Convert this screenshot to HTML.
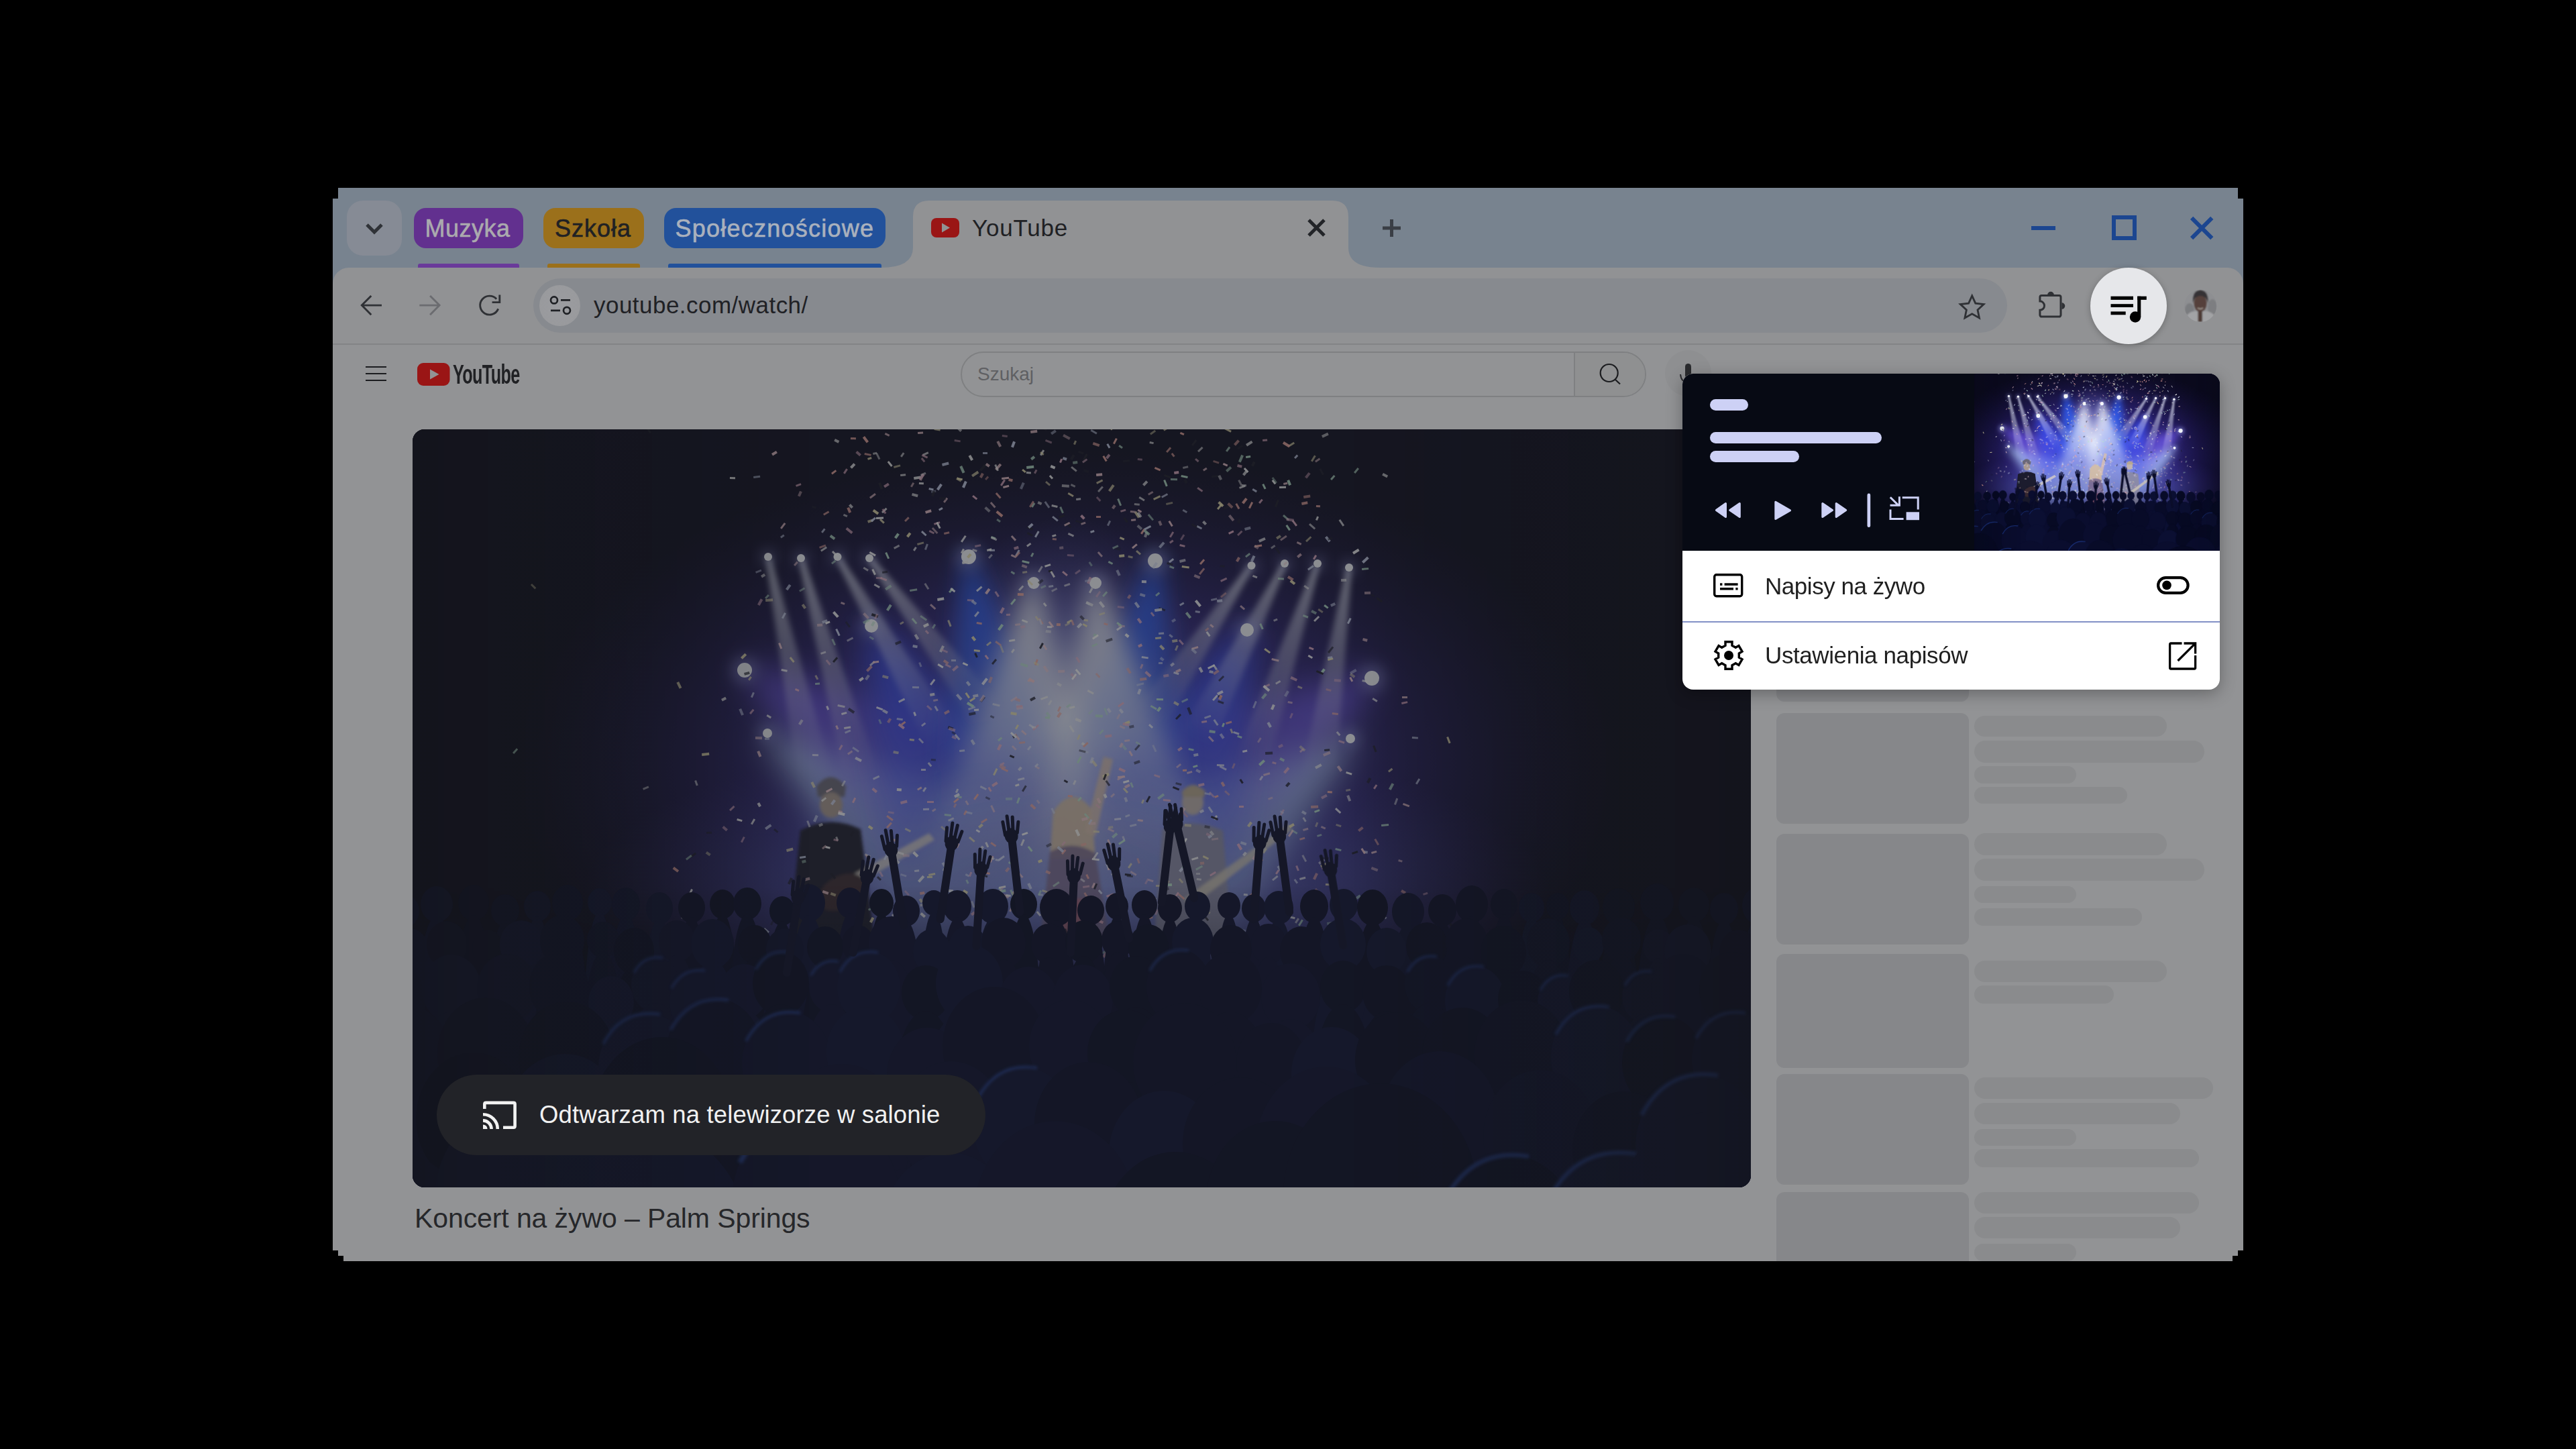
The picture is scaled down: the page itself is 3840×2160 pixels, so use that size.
<!DOCTYPE html>
<html><head><meta charset="utf-8">
<style>
*{margin:0;padding:0;box-sizing:border-box}
html,body{width:3840px;height:2160px;overflow:hidden;background:#000}
body{position:relative;font-family:"Liberation Sans",sans-serif}
.a{position:absolute}
#win{position:absolute;left:0;top:0;width:3840px;height:2160px;
 clip-path:polygon(504px 280px,3336px 280px,3336px 296px,3344px 296px,3344px 1864px,3336px 1864px,3336px 1872px,3328px 1872px,3328px 1880px,512px 1880px,512px 1872px,504px 1872px,504px 1864px,496px 1864px,496px 296px,504px 296px);}
#strip{left:496px;top:280px;width:2848px;height:160px;background:#78838f}
#toolbar{left:496px;top:399px;width:2848px;height:115px;background:#919294;border-radius:24px 24px 0 0}
#page{left:496px;top:513px;width:2848px;height:1367px;background:#929395}
.chip{position:absolute;top:310px;height:60px;border-radius:18px;font-size:36px;line-height:62px;white-space:nowrap;-webkit-text-stroke:0.6px currentColor}
.ul{position:absolute;top:393px;height:6px;border-radius:3px 3px 0 0}
.ic{position:absolute;overflow:visible}
</style></head><body>
<!--PHOTO_START--><svg width="0" height="0" style="position:absolute"><defs><filter id="f2" x="-60%" y="-60%" width="220%" height="220%"><feGaussianBlur stdDeviation="2"/></filter><filter id="f4" x="-60%" y="-60%" width="220%" height="220%"><feGaussianBlur stdDeviation="4"/></filter><filter id="f10" x="-60%" y="-60%" width="220%" height="220%"><feGaussianBlur stdDeviation="10"/></filter><filter id="f18" x="-60%" y="-60%" width="220%" height="220%"><feGaussianBlur stdDeviation="18"/></filter><filter id="f25" x="-60%" y="-60%" width="220%" height="220%"><feGaussianBlur stdDeviation="25"/></filter><filter id="f30" x="-60%" y="-60%" width="220%" height="220%"><feGaussianBlur stdDeviation="30"/></filter><filter id="f60" x="-60%" y="-60%" width="220%" height="220%"><feGaussianBlur stdDeviation="60"/></filter><radialGradient id="hz" cx="0.5" cy="0.5" r="0.5"><stop offset="0" stop-color="#5f64e0" stop-opacity="0.9"/><stop offset="0.5" stop-color="#4636b8" stop-opacity="0.55"/><stop offset="1" stop-color="#24186a" stop-opacity="0"/></radialGradient><radialGradient id="hz2" cx="0.5" cy="0.5" r="0.5"><stop offset="0" stop-color="#eef2ff" stop-opacity="0.8"/><stop offset="0.45" stop-color="#a0acf0" stop-opacity="0.4"/><stop offset="1" stop-color="#6a6ad0" stop-opacity="0"/></radialGradient><radialGradient id="hz3" cx="0.5" cy="0.5" r="0.5"><stop offset="0" stop-color="#98b0f0" stop-opacity="0.75"/><stop offset="0.6" stop-color="#5a60c8" stop-opacity="0.4"/><stop offset="1" stop-color="#3a3090" stop-opacity="0"/></radialGradient><linearGradient id="g1" gradientUnits="userSpaceOnUse" x1="529" y1="453" x2="900" y2="720"><stop offset="0" stop-color="#b8d8ff" stop-opacity="0.95"/><stop offset="0.55" stop-color="#b8d8ff" stop-opacity="0.47"/><stop offset="1" stop-color="#b8d8ff" stop-opacity="0"/></linearGradient><linearGradient id="g2" gradientUnits="userSpaceOnUse" x1="1398" y1="461" x2="1050" y2="720"><stop offset="0" stop-color="#b8d8ff" stop-opacity="0.95"/><stop offset="0.55" stop-color="#b8d8ff" stop-opacity="0.47"/><stop offset="1" stop-color="#b8d8ff" stop-opacity="0"/></linearGradient><linearGradient id="g3" gradientUnits="userSpaceOnUse" x1="495" y1="359" x2="820" y2="560"><stop offset="0" stop-color="#7a60ff" stop-opacity="0.9"/><stop offset="0.55" stop-color="#7a60ff" stop-opacity="0.45"/><stop offset="1" stop-color="#7a60ff" stop-opacity="0"/></linearGradient><linearGradient id="g4" gradientUnits="userSpaceOnUse" x1="1430" y1="371" x2="1130" y2="560"><stop offset="0" stop-color="#7a60ff" stop-opacity="0.9"/><stop offset="0.55" stop-color="#7a60ff" stop-opacity="0.45"/><stop offset="1" stop-color="#7a60ff" stop-opacity="0"/></linearGradient><linearGradient id="g5" gradientUnits="userSpaceOnUse" x1="684" y1="293" x2="850" y2="640"><stop offset="0" stop-color="#3a50ff" stop-opacity="1.0"/><stop offset="0.55" stop-color="#3a50ff" stop-opacity="0.50"/><stop offset="1" stop-color="#3a50ff" stop-opacity="0"/></linearGradient><linearGradient id="g6" gradientUnits="userSpaceOnUse" x1="1244" y1="299" x2="1090" y2="640"><stop offset="0" stop-color="#3a50ff" stop-opacity="1.0"/><stop offset="0.55" stop-color="#3a50ff" stop-opacity="0.50"/><stop offset="1" stop-color="#3a50ff" stop-opacity="0"/></linearGradient><linearGradient id="g7" gradientUnits="userSpaceOnUse" x1="829" y1="190" x2="890" y2="580"><stop offset="0" stop-color="#2a60ff" stop-opacity="1.0"/><stop offset="0.55" stop-color="#2a60ff" stop-opacity="0.50"/><stop offset="1" stop-color="#2a60ff" stop-opacity="0"/></linearGradient><linearGradient id="g8" gradientUnits="userSpaceOnUse" x1="1107" y1="196" x2="1050" y2="580"><stop offset="0" stop-color="#2a60ff" stop-opacity="1.0"/><stop offset="0.55" stop-color="#2a60ff" stop-opacity="0.50"/><stop offset="1" stop-color="#2a60ff" stop-opacity="0"/></linearGradient><linearGradient id="g9" gradientUnits="userSpaceOnUse" x1="926" y1="229" x2="900" y2="680"><stop offset="0" stop-color="#f0f4ff" stop-opacity="0.95"/><stop offset="0.55" stop-color="#f0f4ff" stop-opacity="0.47"/><stop offset="1" stop-color="#f0f4ff" stop-opacity="0"/></linearGradient><linearGradient id="g10" gradientUnits="userSpaceOnUse" x1="1018" y1="229" x2="1060" y2="680"><stop offset="0" stop-color="#f0f4ff" stop-opacity="0.95"/><stop offset="0.55" stop-color="#f0f4ff" stop-opacity="0.47"/><stop offset="1" stop-color="#f0f4ff" stop-opacity="0"/></linearGradient><linearGradient id="g11" gradientUnits="userSpaceOnUse" x1="530" y1="190" x2="600" y2="520"><stop offset="0" stop-color="#e8ecff" stop-opacity="0.7"/><stop offset="0.55" stop-color="#e8ecff" stop-opacity="0.35"/><stop offset="1" stop-color="#e8ecff" stop-opacity="0"/></linearGradient><linearGradient id="g12" gradientUnits="userSpaceOnUse" x1="579" y1="192" x2="670" y2="520"><stop offset="0" stop-color="#e8ecff" stop-opacity="0.7"/><stop offset="0.55" stop-color="#e8ecff" stop-opacity="0.35"/><stop offset="1" stop-color="#e8ecff" stop-opacity="0"/></linearGradient><linearGradient id="g13" gradientUnits="userSpaceOnUse" x1="633.5" y1="190" x2="790" y2="460"><stop offset="0" stop-color="#e8ecff" stop-opacity="0.7"/><stop offset="0.55" stop-color="#e8ecff" stop-opacity="0.35"/><stop offset="1" stop-color="#e8ecff" stop-opacity="0"/></linearGradient><linearGradient id="g14" gradientUnits="userSpaceOnUse" x1="681" y1="192" x2="860" y2="430"><stop offset="0" stop-color="#e8ecff" stop-opacity="0.7"/><stop offset="0.55" stop-color="#e8ecff" stop-opacity="0.35"/><stop offset="1" stop-color="#e8ecff" stop-opacity="0"/></linearGradient><linearGradient id="g15" gradientUnits="userSpaceOnUse" x1="1250.5" y1="203" x2="1100" y2="430"><stop offset="0" stop-color="#e8ecff" stop-opacity="0.7"/><stop offset="0.55" stop-color="#e8ecff" stop-opacity="0.35"/><stop offset="1" stop-color="#e8ecff" stop-opacity="0"/></linearGradient><linearGradient id="g16" gradientUnits="userSpaceOnUse" x1="1300" y1="200" x2="1170" y2="460"><stop offset="0" stop-color="#e8ecff" stop-opacity="0.7"/><stop offset="0.55" stop-color="#e8ecff" stop-opacity="0.35"/><stop offset="1" stop-color="#e8ecff" stop-opacity="0"/></linearGradient><linearGradient id="g17" gradientUnits="userSpaceOnUse" x1="1349" y1="200" x2="1250" y2="500"><stop offset="0" stop-color="#e8ecff" stop-opacity="0.7"/><stop offset="0.55" stop-color="#e8ecff" stop-opacity="0.35"/><stop offset="1" stop-color="#e8ecff" stop-opacity="0"/></linearGradient><linearGradient id="g18" gradientUnits="userSpaceOnUse" x1="1396" y1="206" x2="1350" y2="520"><stop offset="0" stop-color="#e8ecff" stop-opacity="0.7"/><stop offset="0.55" stop-color="#e8ecff" stop-opacity="0.35"/><stop offset="1" stop-color="#e8ecff" stop-opacity="0"/></linearGradient><linearGradient id="crowdg" x1="0" y1="0" x2="0" y2="1"><stop offset="0" stop-color="#050818" stop-opacity="0"/><stop offset="0.25" stop-color="#050818" stop-opacity="0.35"/><stop offset="0.6" stop-color="#04060f" stop-opacity="0.6"/><stop offset="1" stop-color="#03040a" stop-opacity="0.8"/></linearGradient><linearGradient id="sideg" x1="0" y1="0" x2="1" y2="0"><stop offset="0" stop-color="#05060f" stop-opacity="0.5"/><stop offset="0.3" stop-color="#05060f" stop-opacity="0"/><stop offset="0.7" stop-color="#05060f" stop-opacity="0"/><stop offset="1" stop-color="#05060f" stop-opacity="0.5"/></linearGradient><g id="photo"><rect width="1995" height="1130" fill="#0b0a1e"/><ellipse cx="975" cy="500" rx="820" ry="470" fill="url(#hz)"/><ellipse cx="975" cy="430" rx="210" ry="300" fill="url(#hz2)"/><ellipse cx="975" cy="690" rx="720" ry="240" fill="url(#hz3)"/><path d="M525.5 457.9 L800.7 858.0 L999.3 582.0 L532.5 448.1Z" fill="url(#g1)" filter="url(#f25)"/><path d="M1394.4 456.2 L948.5 583.6 L1151.5 856.4 L1401.6 465.8Z" fill="url(#g2)" filter="url(#f25)"/><path d="M491.8 364.1 L751.6 670.6 L888.4 449.4 L498.2 353.9Z" fill="url(#g3)" filter="url(#f25)"/><path d="M1426.8 365.9 L1060.7 450.0 L1199.3 670.0 L1433.2 376.1Z" fill="url(#g4)" filter="url(#f25)"/><path d="M678.6 295.6 L714.7 704.7 L985.3 575.3 L689.4 290.4Z" fill="url(#g5)" filter="url(#f25)"/><path d="M1238.5 296.5 L953.3 578.3 L1226.7 701.7 L1249.5 301.5Z" fill="url(#g6)" filter="url(#f25)"/><path d="M823.1 190.9 L781.3 597.0 L998.7 563.0 L834.9 189.1Z" fill="url(#g7)" filter="url(#f18)"/><path d="M1101.1 195.1 L941.2 563.8 L1158.8 596.2 L1112.9 196.9Z" fill="url(#g8)" filter="url(#f18)"/><path d="M918.0 228.5 L750.2 671.4 L1049.8 688.6 L934.0 229.5Z" fill="url(#g9)" filter="url(#f18)"/><path d="M1010.0 229.7 L910.6 693.9 L1209.4 666.1 L1026.0 228.3Z" fill="url(#g10)" filter="url(#f18)"/><path d="M526.1 190.8 L574.6 525.4 L625.4 514.6 L533.9 189.2Z" fill="url(#g11)" filter="url(#f4)"/><path d="M575.1 193.1 L644.9 527.0 L695.1 513.0 L582.9 190.9Z" fill="url(#g12)" filter="url(#f4)"/><path d="M630.0 192.0 L767.5 473.0 L812.5 447.0 L637.0 188.0Z" fill="url(#g13)" filter="url(#f4)"/><path d="M677.8 194.4 L839.2 445.6 L880.8 414.4 L684.2 189.6Z" fill="url(#g14)" filter="url(#f4)"/><path d="M1247.2 200.8 L1078.3 415.6 L1121.7 444.4 L1253.8 205.2Z" fill="url(#g15)" filter="url(#f4)"/><path d="M1296.4 198.2 L1146.7 448.4 L1193.3 471.6 L1303.6 201.8Z" fill="url(#g16)" filter="url(#f4)"/><path d="M1345.2 198.7 L1225.3 491.9 L1274.7 508.1 L1352.8 201.3Z" fill="url(#g17)" filter="url(#f4)"/><path d="M1392.0 205.4 L1324.3 516.2 L1375.7 523.8 L1400.0 206.6Z" fill="url(#g18)" filter="url(#f4)"/><circle cx="530" cy="190" r="11" fill="#b0b8ff" opacity="0.4" filter="url(#f10)"/><circle cx="530" cy="190" r="6" fill="#f6f8ff"/><circle cx="579" cy="192" r="11" fill="#b0b8ff" opacity="0.4" filter="url(#f10)"/><circle cx="579" cy="192" r="6" fill="#f6f8ff"/><circle cx="633.5" cy="190" r="11" fill="#b0b8ff" opacity="0.4" filter="url(#f10)"/><circle cx="633.5" cy="190" r="6" fill="#f6f8ff"/><circle cx="681" cy="192" r="11" fill="#b0b8ff" opacity="0.4" filter="url(#f10)"/><circle cx="681" cy="192" r="6" fill="#f6f8ff"/><circle cx="829" cy="190" r="20" fill="#b0b8ff" opacity="0.4" filter="url(#f10)"/><circle cx="829" cy="190" r="11" fill="#f6f8ff"/><circle cx="1107" cy="196" r="20" fill="#b0b8ff" opacity="0.4" filter="url(#f10)"/><circle cx="1107" cy="196" r="11" fill="#f6f8ff"/><circle cx="926" cy="229" r="16" fill="#b0b8ff" opacity="0.4" filter="url(#f10)"/><circle cx="926" cy="229" r="9" fill="#f6f8ff"/><circle cx="1018" cy="229" r="16" fill="#b0b8ff" opacity="0.4" filter="url(#f10)"/><circle cx="1018" cy="229" r="9" fill="#f6f8ff"/><circle cx="1250.5" cy="203" r="11" fill="#b0b8ff" opacity="0.4" filter="url(#f10)"/><circle cx="1250.5" cy="203" r="6" fill="#f6f8ff"/><circle cx="1300" cy="200" r="11" fill="#b0b8ff" opacity="0.4" filter="url(#f10)"/><circle cx="1300" cy="200" r="6" fill="#f6f8ff"/><circle cx="1349" cy="200" r="11" fill="#b0b8ff" opacity="0.4" filter="url(#f10)"/><circle cx="1349" cy="200" r="6" fill="#f6f8ff"/><circle cx="1396" cy="206" r="11" fill="#b0b8ff" opacity="0.4" filter="url(#f10)"/><circle cx="1396" cy="206" r="6" fill="#f6f8ff"/><circle cx="684" cy="293" r="18" fill="#b0b8ff" opacity="0.4" filter="url(#f10)"/><circle cx="684" cy="293" r="10" fill="#f6f8ff"/><circle cx="1244" cy="299" r="18" fill="#b0b8ff" opacity="0.4" filter="url(#f10)"/><circle cx="1244" cy="299" r="10" fill="#f6f8ff"/><circle cx="495" cy="359" r="20" fill="#b0b8ff" opacity="0.4" filter="url(#f10)"/><circle cx="495" cy="359" r="11" fill="#f6f8ff"/><circle cx="1430" cy="371" r="20" fill="#b0b8ff" opacity="0.4" filter="url(#f10)"/><circle cx="1430" cy="371" r="11" fill="#f6f8ff"/><circle cx="529" cy="453" r="13" fill="#b0b8ff" opacity="0.4" filter="url(#f10)"/><circle cx="529" cy="453" r="7" fill="#f6f8ff"/><circle cx="1398" cy="461" r="13" fill="#b0b8ff" opacity="0.4" filter="url(#f10)"/><circle cx="1398" cy="461" r="7" fill="#f6f8ff"/><g filter="url(#f2)"><path d="M602 532 Q623 505 646 532 L644 548 L604 548Z" fill="#6a6878"/><ellipse cx="624" cy="560" rx="17" ry="19" fill="#a89890"/><path d="M578 598 Q623 574 668 596 L690 770 L560 770Z" fill="#1c1a2e"/><path d="M590 700 L770 602 L778 612 L600 714Z" fill="#d8d0c8" opacity="0.8"/><ellipse cx="640" cy="690" rx="38" ry="24" fill="#3a2a30" transform="rotate(-28 640 690)"/><path d="M955 570 Q983 528 1012 566 L1018 640 L950 640Z" fill="#d8c0a0" opacity="0.85"/><path d="M950 630 Q985 610 1018 632 L1040 770 L935 770Z" fill="#7a6a90" opacity="0.9"/><path d="M1002 600 L1030 488 L1044 492 L1018 606Z" fill="#d8c0b0" opacity="0.85"/><path d="M960 700 L1010 700 L1000 770 L965 770Z" fill="#c06070" opacity="0.6"/><ellipse cx="1163" cy="556" rx="16" ry="19" fill="#c8b8a8" opacity="0.9"/><path d="M1147 540 Q1163 520 1182 540 L1180 548 L1148 548Z" fill="#b8a890"/><path d="M1118 596 Q1163 578 1208 598 L1222 770 L1105 770Z" fill="#8a8aa8"/><path d="M1150 700 L1305 588 L1312 596 L1160 712Z" fill="#d0c8b8" opacity="0.8"/></g><g><rect x="898" y="530" width="6" height="3" fill="#f4f4f4" opacity="0.9" transform="rotate(-19 898 530)"/><rect x="1128" y="168" width="6" height="3" fill="#e8b0c8" opacity="0.7" transform="rotate(-36 1128 168)"/><rect x="1047" y="175" width="9" height="4" fill="#1a1a28" opacity="0.5" transform="rotate(11 1047 175)"/><rect x="838" y="173" width="9" height="3" fill="#e8b0c8" opacity="0.6" transform="rotate(-11 838 173)"/><rect x="777" y="140" width="9" height="3" fill="#e8b0c8" opacity="0.8" transform="rotate(-18 777 140)"/><rect x="1490" y="458" width="9" height="3" fill="#d0d8f4" opacity="0.7" transform="rotate(4 1490 458)"/><rect x="1227" y="196" width="7" height="4" fill="#f0a8a0" opacity="0.7" transform="rotate(-59 1227 196)"/><rect x="843" y="716" width="10" height="3" fill="#f2c8d0" opacity="0.7" transform="rotate(67 843 716)"/><rect x="1115" y="765" width="8" height="4" fill="#e8b0c8" opacity="0.8" transform="rotate(-59 1115 765)"/><rect x="1211" y="717" width="8" height="4" fill="#ffffff" opacity="0.5" transform="rotate(13 1211 717)"/><rect x="1173" y="569" width="6" height="4" fill="#ffffff" opacity="0.6" transform="rotate(-27 1173 569)"/><rect x="1107" y="310" width="9" height="3" fill="#ece2b0" opacity="0.8" transform="rotate(-5 1107 310)"/><rect x="765" y="229" width="10" height="3" fill="#ffffff" opacity="0.5" transform="rotate(58 765 229)"/><rect x="983" y="363" width="9" height="4" fill="#e8b0c8" opacity="0.6" transform="rotate(45 983 363)"/><rect x="731" y="724" width="11" height="3" fill="#b8e4cc" opacity="0.8" transform="rotate(-45 731 724)"/><rect x="1119" y="0" width="10" height="3" fill="#ece2b0" opacity="0.7" transform="rotate(-31 1119 0)"/><rect x="711" y="781" width="9" height="3" fill="#f4f4f4" opacity="0.7" transform="rotate(16 711 781)"/><rect x="1259" y="713" width="11" height="4" fill="#1a1a28" opacity="0.7" transform="rotate(8 1259 713)"/><rect x="1314" y="42" width="6" height="3" fill="#d0d8f4" opacity="0.8" transform="rotate(-47 1314 42)"/><rect x="1233" y="75" width="9" height="3" fill="#f4f4f4" opacity="0.5" transform="rotate(63 1233 75)"/><rect x="1051" y="517" width="11" height="3" fill="#f2c8d0" opacity="0.9" transform="rotate(-4 1051 517)"/><rect x="1256" y="814" width="8" height="3" fill="#f2c8d0" opacity="0.8" transform="rotate(-58 1256 814)"/><rect x="954" y="564" width="9" height="3" fill="#d0d8f4" opacity="0.6" transform="rotate(63 954 564)"/><rect x="633" y="441" width="6" height="3" fill="#f2c8d0" opacity="0.8" transform="rotate(67 633 441)"/><rect x="955" y="129" width="10" height="3" fill="#d0d8f4" opacity="0.8" transform="rotate(39 955 129)"/><rect x="1261" y="499" width="10" height="4" fill="#b8e4cc" opacity="0.9" transform="rotate(-43 1261 499)"/><rect x="961" y="420" width="8" height="3" fill="#f0a8a0" opacity="0.7" transform="rotate(-66 961 420)"/><rect x="760" y="151" width="9" height="3" fill="#d0d8f4" opacity="0.9" transform="rotate(43 760 151)"/><rect x="835" y="178" width="7" height="3" fill="#f4f4f4" opacity="0.7" transform="rotate(17 835 178)"/><rect x="1134" y="532" width="10" height="3" fill="#1a1a28" opacity="0.9" transform="rotate(22 1134 532)"/><rect x="975" y="138" width="10" height="3" fill="#1a1a28" opacity="0.7" transform="rotate(42 975 138)"/><rect x="633" y="607" width="6" height="3" fill="#f4f4f4" opacity="0.6" transform="rotate(69 633 607)"/><rect x="669" y="804" width="9" height="3" fill="#ece2b0" opacity="0.5" transform="rotate(7 669 804)"/><rect x="1122" y="75" width="10" height="3" fill="#b8e4cc" opacity="0.9" transform="rotate(68 1122 75)"/><rect x="916" y="477" width="7" height="3" fill="#d0d8f4" opacity="0.9" transform="rotate(-52 916 477)"/><rect x="1189" y="540" width="10" height="3" fill="#e8b0c8" opacity="0.6" transform="rotate(46 1189 540)"/><rect x="1182" y="714" width="10" height="3" fill="#ece2b0" opacity="0.6" transform="rotate(39 1182 714)"/><rect x="1268" y="383" width="10" height="3" fill="#e8b0c8" opacity="0.7" transform="rotate(-24 1268 383)"/><rect x="459" y="723" width="6" height="3" fill="#f2c8d0" opacity="0.7" transform="rotate(-64 459 723)"/><rect x="1032" y="456" width="10" height="4" fill="#e8b0c8" opacity="0.8" transform="rotate(-8 1032 456)"/><rect x="1051" y="412" width="10" height="3" fill="#e8b0c8" opacity="0.9" transform="rotate(-35 1051 412)"/><rect x="1205" y="772" width="7" height="3" fill="#ffffff" opacity="0.6" transform="rotate(62 1205 772)"/><rect x="1209" y="50" width="7" height="3" fill="#f2c8d0" opacity="0.9" transform="rotate(24 1209 50)"/><rect x="1199" y="118" width="10" height="3" fill="#ece2b0" opacity="0.9" transform="rotate(-50 1199 118)"/><rect x="1116" y="321" width="8" height="4" fill="#ece2b0" opacity="0.8" transform="rotate(47 1116 321)"/><rect x="727" y="67" width="8" height="3" fill="#f4f4f4" opacity="0.7" transform="rotate(-6 727 67)"/><rect x="1109" y="419" width="7" height="4" fill="#b8e4cc" opacity="0.9" transform="rotate(-54 1109 419)"/><rect x="1161" y="23" width="10" height="3" fill="#1a1a28" opacity="0.9" transform="rotate(-52 1161 23)"/><rect x="1119" y="551" width="11" height="3" fill="#e8b0c8" opacity="0.8" transform="rotate(5 1119 551)"/><rect x="935" y="38" width="9" height="3" fill="#f4f4f4" opacity="0.8" transform="rotate(-60 935 38)"/><rect x="851" y="655" width="6" height="4" fill="#f2c8d0" opacity="0.7" transform="rotate(-61 851 655)"/><rect x="773" y="759" width="7" height="3" fill="#b8e4cc" opacity="0.9" transform="rotate(4 773 759)"/><rect x="1298" y="794" width="7" height="3" fill="#f0a8a0" opacity="0.7" transform="rotate(61 1298 794)"/><rect x="1064" y="548" width="7" height="4" fill="#f4f4f4" opacity="0.5" transform="rotate(69 1064 548)"/><rect x="1288" y="598" width="9" height="3" fill="#ffffff" opacity="0.5" transform="rotate(-4 1288 598)"/><rect x="1109" y="401" width="10" height="3" fill="#b8e4cc" opacity="0.9" transform="rotate(1 1109 401)"/><rect x="685" y="274" width="10" height="4" fill="#1a1a28" opacity="0.9" transform="rotate(19 685 274)"/><rect x="910" y="720" width="8" height="3" fill="#1a1a28" opacity="0.9" transform="rotate(23 910 720)"/><rect x="858" y="191" width="7" height="3" fill="#ffffff" opacity="0.5" transform="rotate(-48 858 191)"/><rect x="761" y="292" width="8" height="4" fill="#f4f4f4" opacity="0.9" transform="rotate(-25 761 292)"/><rect x="872" y="-9" width="8" height="3" fill="#b8e4cc" opacity="0.6" transform="rotate(0 872 -9)"/><rect x="1237" y="634" width="6" height="4" fill="#f4f4f4" opacity="0.7" transform="rotate(-50 1237 634)"/><rect x="845" y="60" width="11" height="4" fill="#1a1a28" opacity="0.8" transform="rotate(-48 845 60)"/><rect x="1377" y="588" width="8" height="3" fill="#ece2b0" opacity="0.5" transform="rotate(17 1377 588)"/><rect x="1298" y="511" width="10" height="4" fill="#e8b0c8" opacity="0.8" transform="rotate(-50 1298 511)"/><rect x="1430" y="652" width="10" height="4" fill="#f2c8d0" opacity="0.5" transform="rotate(20 1430 652)"/><rect x="1021" y="100" width="8" height="3" fill="#e8b0c8" opacity="0.5" transform="rotate(47 1021 100)"/><rect x="1342" y="193" width="7" height="3" fill="#e8b0c8" opacity="0.9" transform="rotate(-60 1342 193)"/><rect x="1019" y="66" width="9" height="4" fill="#f2c8d0" opacity="0.9" transform="rotate(-4 1019 66)"/><rect x="1023" y="182" width="9" height="3" fill="#f2c8d0" opacity="0.7" transform="rotate(48 1023 182)"/><rect x="1477" y="557" width="10" height="3" fill="#f2c8d0" opacity="0.8" transform="rotate(20 1477 557)"/><rect x="761" y="565" width="9" height="3" fill="#ffffff" opacity="0.6" transform="rotate(-2 761 565)"/><rect x="1354" y="548" width="9" height="4" fill="#e8b0c8" opacity="0.6" transform="rotate(-29 1354 548)"/><rect x="475" y="814" width="9" height="3" fill="#ffffff" opacity="0.5" transform="rotate(-58 475 814)"/><rect x="1084" y="371" width="10" height="4" fill="#f0a8a0" opacity="0.7" transform="rotate(-7 1084 371)"/><rect x="628" y="610" width="7" height="3" fill="#e8b0c8" opacity="0.6" transform="rotate(14 628 610)"/><rect x="1192" y="403" width="10" height="3" fill="#ffffff" opacity="0.8" transform="rotate(-48 1192 403)"/><rect x="1161" y="326" width="10" height="3" fill="#f2c8d0" opacity="0.9" transform="rotate(-17 1161 326)"/><rect x="1475" y="686" width="7" height="4" fill="#f0a8a0" opacity="0.6" transform="rotate(30 1475 686)"/><rect x="980" y="44" width="8" height="4" fill="#1a1a28" opacity="0.8" transform="rotate(-59 980 44)"/><rect x="1123" y="33" width="9" height="3" fill="#f0a8a0" opacity="0.7" transform="rotate(-49 1123 33)"/><rect x="782" y="252" width="10" height="4" fill="#f4f4f4" opacity="0.9" transform="rotate(-10 782 252)"/><rect x="523" y="771" width="9" height="4" fill="#1a1a28" opacity="0.7" transform="rotate(-63 523 771)"/><rect x="489" y="615" width="9" height="3" fill="#e8b0c8" opacity="0.6" transform="rotate(-63 489 615)"/><rect x="704" y="237" width="10" height="4" fill="#b8e4cc" opacity="0.6" transform="rotate(-34 704 237)"/><rect x="1023" y="453" width="8" height="3" fill="#b8e4cc" opacity="0.7" transform="rotate(-47 1023 453)"/><rect x="1119" y="366" width="8" height="4" fill="#e8b0c8" opacity="0.6" transform="rotate(-10 1119 366)"/><rect x="624" y="65" width="8" height="3" fill="#f0a8a0" opacity="0.9" transform="rotate(-37 624 65)"/><rect x="993" y="713" width="8" height="4" fill="#f0a8a0" opacity="0.7" transform="rotate(-41 993 713)"/><rect x="1033" y="42" width="7" height="4" fill="#e8b0c8" opacity="0.7" transform="rotate(-52 1033 42)"/><rect x="1121" y="67" width="10" height="3" fill="#1a1a28" opacity="0.9" transform="rotate(20 1121 67)"/><rect x="411" y="694" width="10" height="3" fill="#ffffff" opacity="0.9" transform="rotate(-65 411 694)"/><rect x="858" y="762" width="11" height="3" fill="#ffffff" opacity="0.6" transform="rotate(-4 858 762)"/><rect x="982" y="81" width="7" height="3" fill="#ffffff" opacity="0.5" transform="rotate(25 982 81)"/><rect x="978" y="94" width="9" height="3" fill="#ece2b0" opacity="0.8" transform="rotate(30 978 94)"/><rect x="960" y="428" width="8" height="4" fill="#f0a8a0" opacity="0.7" transform="rotate(-56 960 428)"/><rect x="717" y="176" width="9" height="3" fill="#ffffff" opacity="0.6" transform="rotate(-28 717 176)"/><rect x="827" y="253" width="10" height="3" fill="#e8b0c8" opacity="0.6" transform="rotate(4 827 253)"/><rect x="1429" y="245" width="6" height="3" fill="#1a1a28" opacity="0.5" transform="rotate(24 1429 245)"/><rect x="860" y="179" width="8" height="3" fill="#d0d8f4" opacity="0.8" transform="rotate(-1 860 179)"/><rect x="779" y="-4" width="7" height="4" fill="#ffffff" opacity="0.9" transform="rotate(-61 779 -4)"/><rect x="1204" y="249" width="10" height="3" fill="#f0a8a0" opacity="0.5" transform="rotate(-39 1204 249)"/><rect x="681" y="734" width="8" height="4" fill="#ece2b0" opacity="0.9" transform="rotate(-62 681 734)"/><rect x="686" y="35" width="6" height="3" fill="#f4f4f4" opacity="0.6" transform="rotate(-12 686 35)"/><rect x="525" y="251" width="7" height="3" fill="#b8e4cc" opacity="0.6" transform="rotate(-47 525 251)"/><rect x="1122" y="767" width="10" height="3" fill="#1a1a28" opacity="0.9" transform="rotate(23 1122 767)"/><rect x="1298" y="80" width="6" height="3" fill="#f2c8d0" opacity="0.8" transform="rotate(-11 1298 80)"/><rect x="944" y="620" width="8" height="4" fill="#1a1a28" opacity="0.5" transform="rotate(-27 944 620)"/><rect x="920" y="439" width="8" height="3" fill="#ffffff" opacity="0.5" transform="rotate(33 920 439)"/><rect x="785" y="331" width="10" height="4" fill="#f4f4f4" opacity="0.7" transform="rotate(-64 785 331)"/><rect x="1010" y="152" width="6" height="3" fill="#d0d8f4" opacity="0.9" transform="rotate(-19 1010 152)"/><rect x="874" y="502" width="7" height="4" fill="#f0a8a0" opacity="0.6" transform="rotate(-26 874 502)"/><rect x="903" y="659" width="11" height="3" fill="#f2c8d0" opacity="0.7" transform="rotate(46 903 659)"/><rect x="578" y="784" width="11" height="3" fill="#1a1a28" opacity="0.9" transform="rotate(-35 578 784)"/><rect x="1211" y="-3" width="11" height="3" fill="#ece2b0" opacity="0.8" transform="rotate(27 1211 -3)"/><rect x="1235" y="262" width="8" height="3" fill="#f2c8d0" opacity="0.7" transform="rotate(40 1235 262)"/><rect x="837" y="328" width="9" height="3" fill="#ece2b0" opacity="0.9" transform="rotate(6 837 328)"/><rect x="1086" y="723" width="11" height="3" fill="#f2c8d0" opacity="0.7" transform="rotate(-58 1086 723)"/><rect x="917" y="373" width="10" height="3" fill="#f2c8d0" opacity="0.9" transform="rotate(5 917 373)"/><rect x="909" y="212" width="7" height="3" fill="#ece2b0" opacity="0.6" transform="rotate(-8 909 212)"/><rect x="1209" y="117" width="10" height="3" fill="#1a1a28" opacity="0.6" transform="rotate(-24 1209 117)"/><rect x="984" y="529" width="7" height="3" fill="#f4f4f4" opacity="0.7" transform="rotate(-65 984 529)"/><rect x="1342" y="670" width="10" height="4" fill="#f0a8a0" opacity="0.6" transform="rotate(-64 1342 670)"/><rect x="1361" y="677" width="7" height="3" fill="#ece2b0" opacity="0.7" transform="rotate(2 1361 677)"/><rect x="1102" y="206" width="10" height="4" fill="#d0d8f4" opacity="0.6" transform="rotate(-55 1102 206)"/><rect x="863" y="159" width="7" height="3" fill="#b8e4cc" opacity="0.9" transform="rotate(21 863 159)"/><rect x="1097" y="670" width="8" height="3" fill="#f2c8d0" opacity="0.6" transform="rotate(17 1097 670)"/><rect x="1081" y="43" width="7" height="3" fill="#e8b0c8" opacity="0.5" transform="rotate(7 1081 43)"/><rect x="612" y="126" width="9" height="3" fill="#f0a8a0" opacity="0.7" transform="rotate(-30 612 126)"/><rect x="1446" y="723" width="8" height="3" fill="#d0d8f4" opacity="0.8" transform="rotate(37 1446 723)"/><rect x="1132" y="314" width="8" height="4" fill="#ece2b0" opacity="0.7" transform="rotate(-9 1132 314)"/><rect x="1106" y="723" width="8" height="3" fill="#e8b0c8" opacity="0.6" transform="rotate(-68 1106 723)"/><rect x="698" y="659" width="8" height="3" fill="#e8b0c8" opacity="0.6" transform="rotate(60 698 659)"/><rect x="872" y="133" width="6" height="3" fill="#b8e4cc" opacity="0.6" transform="rotate(35 872 133)"/><rect x="1121" y="685" width="6" height="4" fill="#1a1a28" opacity="0.5" transform="rotate(-26 1121 685)"/><rect x="868" y="730" width="9" height="4" fill="#b8e4cc" opacity="0.9" transform="rotate(17 868 730)"/><rect x="682" y="308" width="7" height="3" fill="#b8e4cc" opacity="0.5" transform="rotate(31 682 308)"/><rect x="1188" y="457" width="10" height="3" fill="#f2c8d0" opacity="0.7" transform="rotate(47 1188 457)"/><rect x="414" y="636" width="9" height="3" fill="#1a1a28" opacity="0.8" transform="rotate(-35 414 636)"/><rect x="1135" y="361" width="8" height="3" fill="#ffffff" opacity="0.7" transform="rotate(17 1135 361)"/><rect x="582" y="670" width="10" height="4" fill="#f2c8d0" opacity="0.6" transform="rotate(-14 582 670)"/><rect x="1112" y="347" width="6" height="3" fill="#f4f4f4" opacity="0.5" transform="rotate(1 1112 347)"/><rect x="1438" y="250" width="10" height="3" fill="#1a1a28" opacity="0.8" transform="rotate(35 1438 250)"/><rect x="1470" y="641" width="6" height="3" fill="#f2c8d0" opacity="0.6" transform="rotate(16 1470 641)"/><rect x="1322" y="784" width="11" height="3" fill="#b8e4cc" opacity="0.5" transform="rotate(40 1322 784)"/><rect x="935" y="281" width="10" height="3" fill="#f0a8a0" opacity="0.9" transform="rotate(56 935 281)"/><rect x="754" y="790" width="8" height="3" fill="#b8e4cc" opacity="0.6" transform="rotate(16 754 790)"/><rect x="1037" y="21" width="7" height="3" fill="#d0d8f4" opacity="0.9" transform="rotate(61 1037 21)"/><rect x="1232" y="86" width="9" height="3" fill="#ffffff" opacity="0.7" transform="rotate(-20 1232 86)"/><rect x="1434" y="471" width="10" height="3" fill="#1a1a28" opacity="0.8" transform="rotate(69 1434 471)"/><rect x="774" y="296" width="7" height="3" fill="#b8e4cc" opacity="0.6" transform="rotate(-59 774 296)"/><rect x="1185" y="607" width="6" height="4" fill="#d0d8f4" opacity="0.8" transform="rotate(-34 1185 607)"/><rect x="971" y="232" width="9" height="3" fill="#f4f4f4" opacity="0.6" transform="rotate(-19 971 232)"/><rect x="763" y="179" width="9" height="3" fill="#d0d8f4" opacity="0.6" transform="rotate(-70 763 179)"/><rect x="608" y="333" width="8" height="3" fill="#ffffff" opacity="0.6" transform="rotate(-19 608 333)"/><rect x="921" y="2" width="10" height="4" fill="#f2c8d0" opacity="0.8" transform="rotate(-7 921 2)"/><rect x="1337" y="324" width="7" height="3" fill="#e8b0c8" opacity="0.9" transform="rotate(20 1337 324)"/><rect x="596" y="484" width="9" height="3" fill="#ffffff" opacity="0.6" transform="rotate(2 596 484)"/><rect x="1049" y="431" width="8" height="3" fill="#f2c8d0" opacity="0.5" transform="rotate(-62 1049 431)"/><rect x="924" y="447" width="11" height="3" fill="#e8b0c8" opacity="0.8" transform="rotate(-42 924 447)"/><rect x="619" y="412" width="6" height="3" fill="#ffffff" opacity="0.8" transform="rotate(69 619 412)"/><rect x="1185" y="-5" width="10" height="4" fill="#ffffff" opacity="0.6" transform="rotate(-5 1185 -5)"/><rect x="1208" y="525" width="7" height="4" fill="#f0a8a0" opacity="0.8" transform="rotate(60 1208 525)"/><rect x="970" y="211" width="9" height="3" fill="#e8b0c8" opacity="0.9" transform="rotate(40 970 211)"/><rect x="780" y="732" width="6" height="3" fill="#b8e4cc" opacity="0.9" transform="rotate(-46 780 732)"/><rect x="1144" y="313" width="9" height="3" fill="#e8b0c8" opacity="0.7" transform="rotate(49 1144 313)"/><rect x="875" y="687" width="9" height="4" fill="#b8e4cc" opacity="0.8" transform="rotate(-9 875 687)"/><rect x="902" y="507" width="6" height="4" fill="#f4f4f4" opacity="0.6" transform="rotate(-50 902 507)"/><rect x="1169" y="506" width="7" height="4" fill="#f4f4f4" opacity="0.5" transform="rotate(28 1169 506)"/><rect x="825" y="569" width="10" height="3" fill="#d0d8f4" opacity="0.6" transform="rotate(13 825 569)"/><rect x="577" y="782" width="9" height="3" fill="#1a1a28" opacity="0.5" transform="rotate(53 577 782)"/><rect x="1015" y="19" width="10" height="4" fill="#f0a8a0" opacity="0.7" transform="rotate(19 1015 19)"/><rect x="1116" y="100" width="10" height="3" fill="#d0d8f4" opacity="0.7" transform="rotate(-29 1116 100)"/><rect x="1204" y="225" width="10" height="3" fill="#e8b0c8" opacity="0.7" transform="rotate(-25 1204 225)"/><rect x="1005" y="229" width="10" height="4" fill="#e8b0c8" opacity="0.8" transform="rotate(-66 1005 229)"/><rect x="707" y="436" width="7" height="4" fill="#f0a8a0" opacity="0.6" transform="rotate(-57 707 436)"/><rect x="1038" y="-6" width="8" height="3" fill="#ece2b0" opacity="0.9" transform="rotate(42 1038 -6)"/><rect x="149" y="482" width="9" height="3" fill="#b8e4cc" opacity="0.9" transform="rotate(-48 149 482)"/><rect x="996" y="769" width="10" height="3" fill="#e8b0c8" opacity="0.9" transform="rotate(69 996 769)"/><rect x="1154" y="511" width="8" height="3" fill="#f2c8d0" opacity="0.7" transform="rotate(-15 1154 511)"/><rect x="799" y="242" width="8" height="3" fill="#b8e4cc" opacity="0.9" transform="rotate(-46 799 242)"/><rect x="745" y="95" width="9" height="4" fill="#f4f4f4" opacity="0.7" transform="rotate(15 745 95)"/><rect x="894" y="690" width="9" height="4" fill="#ffffff" opacity="0.8" transform="rotate(-46 894 690)"/><rect x="1129" y="203" width="7" height="3" fill="#b8e4cc" opacity="0.7" transform="rotate(20 1129 203)"/><rect x="920" y="676" width="9" height="4" fill="#d0d8f4" opacity="0.8" transform="rotate(66 920 676)"/><rect x="1198" y="783" width="11" height="3" fill="#b8e4cc" opacity="0.7" transform="rotate(22 1198 783)"/><rect x="911" y="807" width="10" height="4" fill="#b8e4cc" opacity="0.5" transform="rotate(-9 911 807)"/><rect x="1182" y="725" width="8" height="3" fill="#1a1a28" opacity="0.8" transform="rotate(50 1182 725)"/><rect x="846" y="405" width="9" height="3" fill="#1a1a28" opacity="0.5" transform="rotate(-50 846 405)"/><rect x="1003" y="572" width="9" height="3" fill="#b8e4cc" opacity="0.8" transform="rotate(48 1003 572)"/><rect x="812" y="71" width="8" height="4" fill="#ece2b0" opacity="0.6" transform="rotate(30 812 71)"/><rect x="1364" y="342" width="8" height="3" fill="#ece2b0" opacity="0.9" transform="rotate(-13 1364 342)"/><rect x="954" y="680" width="11" height="3" fill="#b8e4cc" opacity="0.6" transform="rotate(-35 954 680)"/><rect x="1014" y="639" width="11" height="3" fill="#ffffff" opacity="0.7" transform="rotate(-56 1014 639)"/><rect x="902" y="521" width="10" height="3" fill="#ffffff" opacity="0.6" transform="rotate(-13 902 521)"/><rect x="623" y="558" width="8" height="4" fill="#d0d8f4" opacity="0.8" transform="rotate(-53 623 558)"/><rect x="970" y="41" width="6" height="4" fill="#d0d8f4" opacity="0.8" transform="rotate(18 970 41)"/><rect x="1269" y="81" width="8" height="3" fill="#b8e4cc" opacity="0.9" transform="rotate(64 1269 81)"/><rect x="1299" y="127" width="11" height="3" fill="#b8e4cc" opacity="0.7" transform="rotate(42 1299 127)"/><rect x="894" y="457" width="7" height="4" fill="#1a1a28" opacity="0.7" transform="rotate(-21 894 457)"/><rect x="871" y="94" width="10" height="3" fill="#f0a8a0" opacity="0.8" transform="rotate(49 871 94)"/><rect x="1339" y="561" width="11" height="4" fill="#f0a8a0" opacity="0.7" transform="rotate(-3 1339 561)"/><rect x="826" y="392" width="9" height="3" fill="#ece2b0" opacity="0.9" transform="rotate(56 826 392)"/><rect x="758" y="699" width="6" height="4" fill="#ece2b0" opacity="0.7" transform="rotate(57 758 699)"/><rect x="752" y="536" width="7" height="3" fill="#f2c8d0" opacity="0.8" transform="rotate(-29 752 536)"/><rect x="1303" y="699" width="7" height="3" fill="#b8e4cc" opacity="0.9" transform="rotate(40 1303 699)"/><rect x="1022" y="730" width="9" height="4" fill="#e8b0c8" opacity="0.9" transform="rotate(24 1022 730)"/><rect x="799" y="686" width="7" height="4" fill="#ffffff" opacity="0.8" transform="rotate(4 799 686)"/><rect x="1087" y="338" width="10" height="3" fill="#ffffff" opacity="0.7" transform="rotate(8 1087 338)"/><rect x="1076" y="110" width="8" height="3" fill="#f4f4f4" opacity="0.6" transform="rotate(6 1076 110)"/><rect x="776" y="403" width="7" height="3" fill="#f2c8d0" opacity="0.6" transform="rotate(-10 776 403)"/><rect x="1393" y="289" width="9" height="3" fill="#d0d8f4" opacity="0.9" transform="rotate(-64 1393 289)"/><rect x="1262" y="618" width="7" height="3" fill="#ece2b0" opacity="0.7" transform="rotate(-12 1262 618)"/><rect x="1167" y="705" width="8" height="3" fill="#b8e4cc" opacity="0.6" transform="rotate(4 1167 705)"/><rect x="850" y="34" width="7" height="3" fill="#d0d8f4" opacity="0.7" transform="rotate(-1 850 34)"/><rect x="1166" y="216" width="9" height="4" fill="#f2c8d0" opacity="0.6" transform="rotate(22 1166 216)"/><rect x="871" y="477" width="9" height="4" fill="#e8b0c8" opacity="0.9" transform="rotate(-64 871 477)"/><rect x="1206" y="443" width="6" height="3" fill="#b8e4cc" opacity="0.9" transform="rotate(-69 1206 443)"/><rect x="1055" y="441" width="8" height="3" fill="#f2c8d0" opacity="0.6" transform="rotate(24 1055 441)"/><rect x="810" y="623" width="7" height="3" fill="#f2c8d0" opacity="0.9" transform="rotate(-65 810 623)"/><rect x="687" y="534" width="8" height="4" fill="#e8b0c8" opacity="0.8" transform="rotate(40 687 534)"/><rect x="1099" y="18" width="6" height="3" fill="#f4f4f4" opacity="0.7" transform="rotate(11 1099 18)"/><rect x="829" y="423" width="10" height="4" fill="#1a1a28" opacity="0.7" transform="rotate(-11 829 423)"/><rect x="1271" y="481" width="11" height="4" fill="#1a1a28" opacity="0.7" transform="rotate(-3 1271 481)"/><rect x="1001" y="59" width="8" height="4" fill="#1a1a28" opacity="0.5" transform="rotate(18 1001 59)"/><rect x="913" y="792" width="6" height="4" fill="#f4f4f4" opacity="0.6" transform="rotate(-52 913 792)"/><rect x="835" y="462" width="8" height="4" fill="#d0d8f4" opacity="0.8" transform="rotate(59 835 462)"/><rect x="841" y="596" width="6" height="3" fill="#ffffff" opacity="0.8" transform="rotate(29 841 596)"/><rect x="400" y="729" width="11" height="3" fill="#f4f4f4" opacity="0.5" transform="rotate(-66 400 729)"/><rect x="652" y="56" width="8" height="4" fill="#ffffff" opacity="0.8" transform="rotate(-47 652 56)"/><rect x="526" y="253" width="11" height="4" fill="#ece2b0" opacity="0.6" transform="rotate(-4 526 253)"/><rect x="1059" y="525" width="9" height="3" fill="#ffffff" opacity="0.9" transform="rotate(-16 1059 525)"/><rect x="702" y="641" width="9" height="3" fill="#d0d8f4" opacity="0.9" transform="rotate(-62 702 641)"/><rect x="967" y="115" width="10" height="3" fill="#b8e4cc" opacity="0.7" transform="rotate(67 967 115)"/><rect x="923" y="558" width="9" height="4" fill="#f0a8a0" opacity="0.8" transform="rotate(43 923 558)"/><rect x="872" y="121" width="11" height="4" fill="#f0a8a0" opacity="0.9" transform="rotate(40 872 121)"/><rect x="1188" y="664" width="10" height="3" fill="#e8b0c8" opacity="0.8" transform="rotate(-32 1188 664)"/><rect x="1212" y="61" width="9" height="4" fill="#b8e4cc" opacity="0.6" transform="rotate(-42 1212 61)"/><rect x="832" y="38" width="8" height="4" fill="#f4f4f4" opacity="0.9" transform="rotate(60 832 38)"/><rect x="851" y="659" width="10" height="3" fill="#f0a8a0" opacity="0.9" transform="rotate(11 851 659)"/><rect x="1007" y="423" width="8" height="3" fill="#b8e4cc" opacity="0.5" transform="rotate(-44 1007 423)"/><rect x="1060" y="470" width="8" height="4" fill="#b8e4cc" opacity="0.5" transform="rotate(50 1060 470)"/><rect x="742" y="818" width="8" height="3" fill="#f2c8d0" opacity="0.6" transform="rotate(19 742 818)"/><rect x="749" y="421" width="6" height="3" fill="#ffffff" opacity="0.8" transform="rotate(69 749 421)"/><rect x="817" y="167" width="11" height="3" fill="#ffffff" opacity="0.8" transform="rotate(-56 817 167)"/><rect x="1298" y="201" width="6" height="3" fill="#f2c8d0" opacity="0.5" transform="rotate(-45 1298 201)"/><rect x="880" y="692" width="10" height="4" fill="#f2c8d0" opacity="0.8" transform="rotate(20 880 692)"/><rect x="642" y="65" width="8" height="3" fill="#e8b0c8" opacity="0.7" transform="rotate(-57 642 65)"/><rect x="807" y="792" width="11" height="3" fill="#f0a8a0" opacity="0.9" transform="rotate(-65 807 792)"/><rect x="1031" y="39" width="9" height="3" fill="#f0a8a0" opacity="0.9" transform="rotate(59 1031 39)"/><rect x="866" y="808" width="6" height="3" fill="#b8e4cc" opacity="0.8" transform="rotate(36 866 808)"/><rect x="556" y="238" width="9" height="4" fill="#d0d8f4" opacity="0.7" transform="rotate(-55 556 238)"/><rect x="751" y="305" width="8" height="4" fill="#f4f4f4" opacity="0.7" transform="rotate(58 751 305)"/><rect x="1160" y="747" width="10" height="3" fill="#f2c8d0" opacity="0.9" transform="rotate(47 1160 747)"/><rect x="508" y="70" width="10" height="3" fill="#d0d8f4" opacity="0.6" transform="rotate(-7 508 70)"/><rect x="990" y="294" width="8" height="4" fill="#ffffff" opacity="0.7" transform="rotate(-45 990 294)"/><rect x="1123" y="110" width="10" height="3" fill="#ece2b0" opacity="0.5" transform="rotate(-12 1123 110)"/><rect x="748" y="657" width="7" height="3" fill="#ffffff" opacity="0.6" transform="rotate(-6 748 657)"/><rect x="866" y="802" width="6" height="4" fill="#b8e4cc" opacity="0.8" transform="rotate(24 866 802)"/><rect x="1052" y="617" width="11" height="3" fill="#b8e4cc" opacity="0.9" transform="rotate(-33 1052 617)"/><rect x="845" y="71" width="7" height="4" fill="#f0a8a0" opacity="0.6" transform="rotate(-62 845 71)"/><rect x="768" y="411" width="9" height="3" fill="#e8b0c8" opacity="0.6" transform="rotate(41 768 411)"/><rect x="726" y="289" width="6" height="3" fill="#ece2b0" opacity="0.6" transform="rotate(-31 726 289)"/><rect x="1194" y="581" width="7" height="3" fill="#ffffff" opacity="0.8" transform="rotate(-58 1194 581)"/><rect x="771" y="150" width="8" height="3" fill="#e8b0c8" opacity="0.7" transform="rotate(27 771 150)"/><rect x="605" y="589" width="6" height="4" fill="#ffffff" opacity="0.5" transform="rotate(-23 605 589)"/><rect x="1249" y="196" width="9" height="4" fill="#d0d8f4" opacity="0.8" transform="rotate(-65 1249 196)"/><rect x="1152" y="764" width="11" height="3" fill="#b8e4cc" opacity="0.9" transform="rotate(-20 1152 764)"/><rect x="756" y="708" width="8" height="4" fill="#f4f4f4" opacity="0.6" transform="rotate(-17 756 708)"/><rect x="1354" y="361" width="6" height="4" fill="#b8e4cc" opacity="0.9" transform="rotate(-51 1354 361)"/><rect x="1279" y="176" width="7" height="3" fill="#f4f4f4" opacity="0.5" transform="rotate(-35 1279 176)"/><rect x="1415" y="207" width="10" height="3" fill="#b8e4cc" opacity="0.8" transform="rotate(-5 1415 207)"/><rect x="755" y="75" width="10" height="4" fill="#f2c8d0" opacity="0.7" transform="rotate(-64 755 75)"/><rect x="714" y="724" width="9" height="3" fill="#ffffff" opacity="0.8" transform="rotate(-38 714 724)"/><rect x="1263" y="768" width="8" height="3" fill="#e8b0c8" opacity="0.5" transform="rotate(48 1263 768)"/><rect x="1457" y="796" width="6" height="3" fill="#d0d8f4" opacity="0.8" transform="rotate(-14 1457 796)"/><rect x="1188" y="808" width="8" height="3" fill="#d0d8f4" opacity="0.7" transform="rotate(9 1188 808)"/><rect x="652" y="785" width="11" height="3" fill="#f4f4f4" opacity="0.7" transform="rotate(-11 652 785)"/><rect x="863" y="349" width="9" height="3" fill="#1a1a28" opacity="0.8" transform="rotate(-50 863 349)"/><rect x="953" y="768" width="9" height="4" fill="#f4f4f4" opacity="0.5" transform="rotate(54 953 768)"/><rect x="826" y="553" width="7" height="3" fill="#f2c8d0" opacity="0.6" transform="rotate(59 826 553)"/><rect x="792" y="422" width="8" height="4" fill="#f0a8a0" opacity="0.7" transform="rotate(-30 792 422)"/><rect x="1028" y="786" width="11" height="4" fill="#e8b0c8" opacity="0.9" transform="rotate(-58 1028 786)"/><rect x="1067" y="355" width="9" height="4" fill="#f0a8a0" opacity="0.6" transform="rotate(58 1067 355)"/><rect x="932" y="228" width="8" height="4" fill="#1a1a28" opacity="0.6" transform="rotate(-39 932 228)"/><rect x="484" y="580" width="8" height="3" fill="#ffffff" opacity="0.9" transform="rotate(16 484 580)"/><rect x="1240" y="147" width="9" height="4" fill="#d0d8f4" opacity="0.6" transform="rotate(-14 1240 147)"/><rect x="1027" y="780" width="8" height="3" fill="#b8e4cc" opacity="0.6" transform="rotate(-32 1027 780)"/><rect x="999" y="45" width="10" height="3" fill="#1a1a28" opacity="0.9" transform="rotate(-61 999 45)"/><rect x="800" y="284" width="10" height="3" fill="#ece2b0" opacity="0.7" transform="rotate(69 800 284)"/><rect x="894" y="158" width="9" height="3" fill="#f2c8d0" opacity="0.8" transform="rotate(47 894 158)"/><rect x="831" y="607" width="10" height="3" fill="#ece2b0" opacity="0.7" transform="rotate(40 831 607)"/><rect x="1221" y="446" width="7" height="3" fill="#ece2b0" opacity="0.7" transform="rotate(69 1221 446)"/><rect x="1161" y="640" width="10" height="3" fill="#ffffff" opacity="0.8" transform="rotate(-17 1161 640)"/><rect x="909" y="283" width="9" height="3" fill="#f4f4f4" opacity="0.9" transform="rotate(21 909 283)"/><rect x="1247" y="695" width="8" height="3" fill="#f0a8a0" opacity="0.9" transform="rotate(-44 1247 695)"/><rect x="707" y="183" width="10" height="3" fill="#b8e4cc" opacity="0.9" transform="rotate(66 707 183)"/><rect x="1090" y="160" width="8" height="4" fill="#f4f4f4" opacity="0.6" transform="rotate(-69 1090 160)"/><rect x="1176" y="435" width="8" height="3" fill="#e8b0c8" opacity="0.8" transform="rotate(-9 1176 435)"/><rect x="821" y="347" width="8" height="3" fill="#ffffff" opacity="0.9" transform="rotate(25 821 347)"/><rect x="812" y="72" width="8" height="3" fill="#ece2b0" opacity="0.9" transform="rotate(9 812 72)"/><rect x="647" y="791" width="8" height="3" fill="#d0d8f4" opacity="0.8" transform="rotate(17 647 791)"/><rect x="972" y="291" width="8" height="3" fill="#ece2b0" opacity="0.5" transform="rotate(-27 972 291)"/><rect x="843" y="732" width="9" height="4" fill="#1a1a28" opacity="0.8" transform="rotate(69 843 732)"/><rect x="892" y="332" width="6" height="3" fill="#f4f4f4" opacity="0.8" transform="rotate(-55 892 332)"/><rect x="997" y="580" width="9" height="4" fill="#f2c8d0" opacity="0.8" transform="rotate(-14 997 580)"/><rect x="977" y="545" width="7" height="3" fill="#f0a8a0" opacity="0.9" transform="rotate(7 977 545)"/><rect x="1261" y="109" width="7" height="3" fill="#e8b0c8" opacity="0.8" transform="rotate(-50 1261 109)"/><rect x="755" y="79" width="7" height="3" fill="#ffffff" opacity="0.8" transform="rotate(3 755 79)"/><rect x="1012" y="0" width="10" height="3" fill="#d0d8f4" opacity="0.6" transform="rotate(30 1012 0)"/><rect x="874" y="17" width="9" height="4" fill="#f2c8d0" opacity="0.7" transform="rotate(63 874 17)"/><rect x="693" y="35" width="10" height="3" fill="#ffffff" opacity="0.5" transform="rotate(64 693 35)"/><rect x="1067" y="188" width="7" height="3" fill="#ece2b0" opacity="0.6" transform="rotate(12 1067 188)"/><rect x="1419" y="242" width="9" height="4" fill="#f2c8d0" opacity="0.6" transform="rotate(-1 1419 242)"/><rect x="647" y="314" width="10" height="3" fill="#ffffff" opacity="0.5" transform="rotate(-27 647 314)"/><rect x="1062" y="131" width="8" height="3" fill="#1a1a28" opacity="0.8" transform="rotate(54 1062 131)"/><rect x="880" y="85" width="9" height="3" fill="#f2c8d0" opacity="0.9" transform="rotate(-14 880 85)"/><rect x="1286" y="378" width="8" height="3" fill="#f4f4f4" opacity="0.7" transform="rotate(-31 1286 378)"/><rect x="1237" y="67" width="7" height="4" fill="#ffffff" opacity="0.7" transform="rotate(-52 1237 67)"/><rect x="1365" y="650" width="7" height="3" fill="#1a1a28" opacity="0.7" transform="rotate(-40 1365 650)"/><rect x="1173" y="779" width="9" height="3" fill="#ece2b0" opacity="0.9" transform="rotate(-7 1173 779)"/><rect x="922" y="818" width="9" height="3" fill="#e8b0c8" opacity="0.6" transform="rotate(69 922 818)"/><rect x="814" y="714" width="7" height="3" fill="#f0a8a0" opacity="0.8" transform="rotate(6 814 714)"/><rect x="845" y="625" width="6" height="4" fill="#f4f4f4" opacity="0.7" transform="rotate(-50 845 625)"/><rect x="1136" y="696" width="8" height="3" fill="#e8b0c8" opacity="0.9" transform="rotate(-55 1136 696)"/><rect x="1071" y="658" width="10" height="3" fill="#f2c8d0" opacity="0.6" transform="rotate(31 1071 658)"/><rect x="1310" y="224" width="8" height="4" fill="#ece2b0" opacity="0.9" transform="rotate(38 1310 224)"/><rect x="1314" y="136" width="8" height="4" fill="#1a1a28" opacity="0.5" transform="rotate(27 1314 136)"/><rect x="879" y="820" width="8" height="4" fill="#f0a8a0" opacity="0.6" transform="rotate(-56 879 820)"/><rect x="655" y="748" width="10" height="4" fill="#f4f4f4" opacity="0.8" transform="rotate(-64 655 748)"/><rect x="1188" y="448" width="9" height="4" fill="#b8e4cc" opacity="0.8" transform="rotate(9 1188 448)"/><rect x="927" y="351" width="9" height="3" fill="#f0a8a0" opacity="0.9" transform="rotate(-70 927 351)"/><rect x="750" y="716" width="9" height="4" fill="#f2c8d0" opacity="0.5" transform="rotate(66 750 716)"/><rect x="758" y="277" width="11" height="3" fill="#b8e4cc" opacity="0.6" transform="rotate(34 758 277)"/><rect x="1447" y="65" width="8" height="4" fill="#ffffff" opacity="0.7" transform="rotate(27 1447 65)"/><rect x="884" y="549" width="10" height="4" fill="#b8e4cc" opacity="0.5" transform="rotate(-1 884 549)"/><rect x="793" y="573" width="10" height="3" fill="#b8e4cc" opacity="0.7" transform="rotate(6 793 573)"/><rect x="975" y="287" width="8" height="3" fill="#ece2b0" opacity="0.8" transform="rotate(-27 975 287)"/><rect x="1080" y="394" width="8" height="4" fill="#ffffff" opacity="0.6" transform="rotate(-69 1080 394)"/><rect x="681" y="101" width="10" height="3" fill="#f2c8d0" opacity="0.7" transform="rotate(-36 681 101)"/><rect x="616" y="621" width="7" height="3" fill="#ffffff" opacity="0.9" transform="rotate(14 616 621)"/><rect x="806" y="563" width="6" height="3" fill="#f0a8a0" opacity="0.6" transform="rotate(-64 806 563)"/><rect x="1088" y="82" width="8" height="4" fill="#ffffff" opacity="0.7" transform="rotate(-47 1088 82)"/><rect x="856" y="50" width="6" height="4" fill="#f2c8d0" opacity="0.8" transform="rotate(35 856 50)"/><rect x="1113" y="265" width="10" height="3" fill="#1a1a28" opacity="0.7" transform="rotate(20 1113 265)"/><rect x="1031" y="288" width="6" height="3" fill="#f0a8a0" opacity="0.8" transform="rotate(16 1031 288)"/><rect x="717" y="55" width="10" height="3" fill="#ece2b0" opacity="0.6" transform="rotate(-15 717 55)"/><rect x="1143" y="692" width="11" height="3" fill="#f0a8a0" opacity="0.8" transform="rotate(40 1143 692)"/><rect x="1368" y="261" width="7" height="4" fill="#d0d8f4" opacity="0.6" transform="rotate(-25 1368 261)"/><rect x="698" y="79" width="10" height="4" fill="#1a1a28" opacity="0.9" transform="rotate(70 698 79)"/><rect x="1305" y="405" width="7" height="3" fill="#f2c8d0" opacity="0.6" transform="rotate(11 1305 405)"/><rect x="856" y="179" width="7" height="3" fill="#f4f4f4" opacity="0.9" transform="rotate(-14 856 179)"/><rect x="766" y="299" width="6" height="3" fill="#e8b0c8" opacity="0.7" transform="rotate(47 766 299)"/><rect x="1002" y="225" width="9" height="3" fill="#d0d8f4" opacity="0.5" transform="rotate(-11 1002 225)"/><rect x="1016" y="304" width="6" height="4" fill="#b8e4cc" opacity="0.7" transform="rotate(25 1016 304)"/><rect x="626" y="346" width="9" height="3" fill="#1a1a28" opacity="0.9" transform="rotate(-48 626 346)"/><rect x="879" y="504" width="10" height="3" fill="#f0a8a0" opacity="0.8" transform="rotate(25 879 504)"/><rect x="722" y="535" width="7" height="4" fill="#f4f4f4" opacity="0.9" transform="rotate(4 722 535)"/><rect x="1112" y="175" width="10" height="4" fill="#d0d8f4" opacity="0.7" transform="rotate(-49 1112 175)"/><rect x="1241" y="189" width="8" height="3" fill="#b8e4cc" opacity="0.7" transform="rotate(-38 1241 189)"/><rect x="876" y="83" width="10" height="3" fill="#e8b0c8" opacity="0.8" transform="rotate(-57 876 83)"/><rect x="920" y="370" width="9" height="4" fill="#f2c8d0" opacity="0.9" transform="rotate(33 920 370)"/><rect x="767" y="554" width="10" height="3" fill="#e8b0c8" opacity="0.8" transform="rotate(0 767 554)"/><rect x="981" y="812" width="10" height="3" fill="#1a1a28" opacity="0.7" transform="rotate(46 981 812)"/><rect x="827" y="793" width="7" height="3" fill="#d0d8f4" opacity="0.8" transform="rotate(-57 827 793)"/><rect x="1181" y="299" width="6" height="3" fill="#f0a8a0" opacity="0.6" transform="rotate(-40 1181 299)"/><rect x="1053" y="103" width="11" height="3" fill="#b8e4cc" opacity="0.8" transform="rotate(68 1053 103)"/><rect x="674" y="273" width="10" height="4" fill="#f2c8d0" opacity="0.6" transform="rotate(46 674 273)"/><rect x="610" y="286" width="8" height="4" fill="#d0d8f4" opacity="0.7" transform="rotate(-21 610 286)"/><rect x="945" y="657" width="7" height="4" fill="#f0a8a0" opacity="0.7" transform="rotate(25 945 657)"/><rect x="954" y="811" width="8" height="4" fill="#f2c8d0" opacity="0.9" transform="rotate(-2 954 811)"/><rect x="917" y="144" width="9" height="3" fill="#1a1a28" opacity="0.9" transform="rotate(26 917 144)"/><rect x="781" y="818" width="10" height="3" fill="#f4f4f4" opacity="0.7" transform="rotate(-8 781 818)"/><rect x="855" y="115" width="9" height="4" fill="#f4f4f4" opacity="0.5" transform="rotate(42 855 115)"/><rect x="661" y="488" width="10" height="4" fill="#ffffff" opacity="0.7" transform="rotate(27 661 488)"/><rect x="679" y="715" width="9" height="3" fill="#b8e4cc" opacity="0.6" transform="rotate(-24 679 715)"/><rect x="1261" y="165" width="10" height="4" fill="#ffffff" opacity="0.7" transform="rotate(-24 1261 165)"/><rect x="1283" y="284" width="6" height="3" fill="#f4f4f4" opacity="0.6" transform="rotate(-23 1283 284)"/><rect x="1268" y="514" width="10" height="3" fill="#f2c8d0" opacity="0.7" transform="rotate(-16 1268 514)"/><rect x="687" y="208" width="9" height="3" fill="#f4f4f4" opacity="0.9" transform="rotate(64 687 208)"/><rect x="1085" y="155" width="8" height="3" fill="#f0a8a0" opacity="0.9" transform="rotate(-56 1085 155)"/><rect x="898" y="188" width="10" height="3" fill="#d0d8f4" opacity="0.8" transform="rotate(-60 898 188)"/><rect x="550" y="281" width="9" height="3" fill="#d0d8f4" opacity="0.8" transform="rotate(-62 550 281)"/><rect x="951" y="723" width="10" height="3" fill="#b8e4cc" opacity="0.9" transform="rotate(55 951 723)"/><rect x="1094" y="728" width="9" height="3" fill="#f0a8a0" opacity="0.9" transform="rotate(-15 1094 728)"/><rect x="1140" y="477" width="7" height="4" fill="#e8b0c8" opacity="0.8" transform="rotate(-35 1140 477)"/><rect x="1090" y="148" width="11" height="3" fill="#d0d8f4" opacity="0.9" transform="rotate(-27 1090 148)"/><rect x="950" y="286" width="10" height="3" fill="#f2c8d0" opacity="0.9" transform="rotate(52 950 286)"/><rect x="896" y="735" width="9" height="4" fill="#b8e4cc" opacity="0.8" transform="rotate(18 896 735)"/><rect x="1144" y="171" width="8" height="3" fill="#e8b0c8" opacity="0.8" transform="rotate(14 1144 171)"/><rect x="1135" y="789" width="9" height="3" fill="#d0d8f4" opacity="0.8" transform="rotate(43 1135 789)"/><rect x="942" y="258" width="6" height="3" fill="#f4f4f4" opacity="0.8" transform="rotate(51 942 258)"/><rect x="934" y="326" width="9" height="3" fill="#1a1a28" opacity="0.9" transform="rotate(-62 934 326)"/><rect x="1328" y="634" width="11" height="3" fill="#f4f4f4" opacity="0.5" transform="rotate(62 1328 634)"/><rect x="1190" y="253" width="9" height="3" fill="#d0d8f4" opacity="0.6" transform="rotate(-12 1190 253)"/><rect x="1180" y="429" width="10" height="3" fill="#d0d8f4" opacity="0.7" transform="rotate(-19 1180 429)"/><rect x="999" y="478" width="9" height="3" fill="#d0d8f4" opacity="0.6" transform="rotate(14 999 478)"/><rect x="571" y="386" width="6" height="3" fill="#e8b0c8" opacity="0.9" transform="rotate(21 571 386)"/><rect x="602" y="366" width="7" height="3" fill="#ece2b0" opacity="0.6" transform="rotate(62 602 366)"/><rect x="847" y="662" width="11" height="3" fill="#1a1a28" opacity="0.8" transform="rotate(18 847 662)"/><rect x="926" y="65" width="6" height="3" fill="#e8b0c8" opacity="0.6" transform="rotate(-62 926 65)"/><rect x="1015" y="493" width="10" height="4" fill="#ece2b0" opacity="0.7" transform="rotate(52 1015 493)"/><rect x="746" y="281" width="10" height="3" fill="#b8e4cc" opacity="0.8" transform="rotate(50 746 281)"/><rect x="674" y="372" width="8" height="4" fill="#f4f4f4" opacity="0.5" transform="rotate(-55 674 372)"/><rect x="1422" y="526" width="8" height="4" fill="#1a1a28" opacity="0.7" transform="rotate(-62 1422 526)"/><rect x="624" y="199" width="7" height="3" fill="#b8e4cc" opacity="0.6" transform="rotate(-38 624 199)"/><rect x="759" y="720" width="8" height="4" fill="#ffffff" opacity="0.9" transform="rotate(41 759 720)"/><rect x="1084" y="711" width="7" height="4" fill="#f0a8a0" opacity="0.5" transform="rotate(45 1084 711)"/><rect x="990" y="497" width="11" height="3" fill="#b8e4cc" opacity="0.9" transform="rotate(-63 990 497)"/><rect x="967" y="632" width="8" height="3" fill="#f0a8a0" opacity="0.8" transform="rotate(-50 967 632)"/><rect x="883" y="658" width="7" height="4" fill="#f0a8a0" opacity="0.6" transform="rotate(-51 883 658)"/><rect x="963" y="130" width="9" height="3" fill="#1a1a28" opacity="0.9" transform="rotate(-22 963 130)"/><rect x="840" y="803" width="6" height="3" fill="#f4f4f4" opacity="0.5" transform="rotate(41 840 803)"/><rect x="757" y="347" width="7" height="3" fill="#d0d8f4" opacity="0.5" transform="rotate(69 757 347)"/><rect x="968" y="82" width="11" height="4" fill="#f4f4f4" opacity="0.6" transform="rotate(4 968 82)"/><rect x="908" y="603" width="9" height="3" fill="#ffffff" opacity="0.9" transform="rotate(-20 908 603)"/><rect x="819" y="54" width="11" height="4" fill="#b8e4cc" opacity="0.8" transform="rotate(66 819 54)"/><rect x="948" y="210" width="6" height="3" fill="#1a1a28" opacity="0.9" transform="rotate(1 948 210)"/><rect x="1160" y="780" width="7" height="3" fill="#ffffff" opacity="0.7" transform="rotate(-64 1160 780)"/><rect x="537" y="805" width="10" height="4" fill="#d0d8f4" opacity="0.7" transform="rotate(-14 537 805)"/><rect x="836" y="308" width="7" height="4" fill="#ece2b0" opacity="0.9" transform="rotate(53 836 308)"/><rect x="828" y="406" width="11" height="4" fill="#b8e4cc" opacity="0.9" transform="rotate(32 828 406)"/><rect x="809" y="541" width="6" height="3" fill="#f4f4f4" opacity="0.7" transform="rotate(-65 809 541)"/><rect x="550" y="357" width="9" height="3" fill="#ffffff" opacity="0.8" transform="rotate(11 550 357)"/><rect x="811" y="698" width="9" height="3" fill="#b8e4cc" opacity="0.9" transform="rotate(69 811 698)"/><rect x="1131" y="285" width="6" height="4" fill="#d0d8f4" opacity="0.5" transform="rotate(-33 1131 285)"/><rect x="390" y="652" width="9" height="4" fill="#f0a8a0" opacity="0.9" transform="rotate(37 390 652)"/><rect x="502" y="423" width="8" height="3" fill="#e8b0c8" opacity="0.7" transform="rotate(-50 502 423)"/><rect x="1055" y="160" width="7" height="3" fill="#ece2b0" opacity="0.9" transform="rotate(24 1055 160)"/><rect x="559" y="677" width="10" height="4" fill="#1a1a28" opacity="0.7" transform="rotate(-64 559 677)"/><rect x="1081" y="707" width="8" height="3" fill="#1a1a28" opacity="0.5" transform="rotate(28 1081 707)"/><rect x="639" y="423" width="8" height="3" fill="#ffffff" opacity="0.8" transform="rotate(-15 639 423)"/><rect x="1399" y="363" width="8" height="4" fill="#ece2b0" opacity="0.5" transform="rotate(36 1399 363)"/><rect x="1212" y="538" width="9" height="3" fill="#f0a8a0" opacity="0.5" transform="rotate(42 1212 538)"/><rect x="1229" y="157" width="9" height="3" fill="#e8b0c8" opacity="0.6" transform="rotate(-45 1229 157)"/><rect x="875" y="682" width="6" height="3" fill="#b8e4cc" opacity="0.6" transform="rotate(50 875 682)"/><rect x="1175" y="785" width="7" height="4" fill="#ffffff" opacity="0.7" transform="rotate(59 1175 785)"/><rect x="1460" y="795" width="8" height="3" fill="#b8e4cc" opacity="0.7" transform="rotate(-34 1460 795)"/><rect x="1105" y="470" width="11" height="3" fill="#d0d8f4" opacity="0.5" transform="rotate(66 1105 470)"/><rect x="1148" y="56" width="8" height="3" fill="#f4f4f4" opacity="0.5" transform="rotate(-12 1148 56)"/><rect x="1544" y="458" width="10" height="3" fill="#ece2b0" opacity="0.9" transform="rotate(69 1544 458)"/><rect x="651" y="415" width="10" height="4" fill="#1a1a28" opacity="0.7" transform="rotate(34 651 415)"/><rect x="1104" y="758" width="7" height="3" fill="#ffffff" opacity="0.6" transform="rotate(-16 1104 758)"/><rect x="997" y="669" width="7" height="3" fill="#ffffff" opacity="0.5" transform="rotate(35 997 669)"/><rect x="1093" y="555" width="10" height="3" fill="#1a1a28" opacity="0.9" transform="rotate(-62 1093 555)"/><rect x="1170" y="32" width="9" height="3" fill="#f4f4f4" opacity="0.6" transform="rotate(-43 1170 32)"/><rect x="1212" y="437" width="9" height="3" fill="#f0a8a0" opacity="0.8" transform="rotate(-16 1212 437)"/><rect x="663" y="32" width="8" height="4" fill="#e8b0c8" opacity="0.6" transform="rotate(42 663 32)"/><rect x="953" y="158" width="6" height="3" fill="#ffffff" opacity="0.8" transform="rotate(-18 953 158)"/><rect x="934" y="762" width="8" height="3" fill="#f4f4f4" opacity="0.8" transform="rotate(29 934 762)"/><rect x="815" y="-3" width="6" height="4" fill="#f4f4f4" opacity="0.6" transform="rotate(45 815 -3)"/><rect x="1046" y="580" width="10" height="3" fill="#ffffff" opacity="0.6" transform="rotate(-6 1046 580)"/><rect x="736" y="159" width="7" height="4" fill="#ece2b0" opacity="0.9" transform="rotate(-53 736 159)"/><rect x="1338" y="140" width="11" height="3" fill="#ffffff" opacity="0.6" transform="rotate(42 1338 140)"/><rect x="1151" y="588" width="10" height="4" fill="#ece2b0" opacity="0.6" transform="rotate(5 1151 588)"/><rect x="1153" y="74" width="6" height="4" fill="#1a1a28" opacity="0.6" transform="rotate(63 1153 74)"/><rect x="874" y="682" width="10" height="3" fill="#f4f4f4" opacity="0.9" transform="rotate(-11 874 682)"/><rect x="1094" y="360" width="10" height="4" fill="#e8b0c8" opacity="0.8" transform="rotate(42 1094 360)"/><rect x="1107" y="247" width="7" height="3" fill="#b8e4cc" opacity="0.7" transform="rotate(-40 1107 247)"/><rect x="1262" y="522" width="7" height="3" fill="#ffffff" opacity="0.6" transform="rotate(-57 1262 522)"/><rect x="1035" y="143" width="8" height="3" fill="#d0d8f4" opacity="0.6" transform="rotate(-65 1035 143)"/><rect x="976" y="762" width="6" height="3" fill="#e8b0c8" opacity="0.8" transform="rotate(51 976 762)"/><rect x="624" y="157" width="8" height="4" fill="#b8e4cc" opacity="0.8" transform="rotate(37 624 157)"/><rect x="853" y="74" width="6" height="3" fill="#f0a8a0" opacity="0.5" transform="rotate(-49 853 74)"/><rect x="1351" y="267" width="8" height="3" fill="#ece2b0" opacity="0.5" transform="rotate(34 1351 267)"/><rect x="1244" y="591" width="8" height="4" fill="#ece2b0" opacity="0.8" transform="rotate(-54 1244 591)"/><rect x="500" y="373" width="6" height="3" fill="#ece2b0" opacity="0.7" transform="rotate(-56 500 373)"/><rect x="1037" y="594" width="10" height="3" fill="#f2c8d0" opacity="0.6" transform="rotate(23 1037 594)"/><rect x="873" y="689" width="10" height="3" fill="#f2c8d0" opacity="0.5" transform="rotate(-49 873 689)"/><rect x="987" y="214" width="9" height="3" fill="#e8b0c8" opacity="0.5" transform="rotate(-36 987 214)"/><rect x="1147" y="203" width="11" height="3" fill="#ece2b0" opacity="0.9" transform="rotate(8 1147 203)"/><rect x="921" y="189" width="6" height="3" fill="#b8e4cc" opacity="0.8" transform="rotate(-62 921 189)"/><rect x="608" y="180" width="10" height="3" fill="#f4f4f4" opacity="0.7" transform="rotate(-33 608 180)"/><rect x="872" y="463" width="7" height="3" fill="#b8e4cc" opacity="0.8" transform="rotate(-40 872 463)"/><rect x="873" y="641" width="10" height="3" fill="#d0d8f4" opacity="0.9" transform="rotate(-36 873 641)"/><rect x="1377" y="564" width="10" height="3" fill="#ffffff" opacity="0.8" transform="rotate(43 1377 564)"/><rect x="1082" y="142" width="8" height="4" fill="#f4f4f4" opacity="0.5" transform="rotate(40 1082 142)"/><rect x="991" y="553" width="7" height="3" fill="#b8e4cc" opacity="0.9" transform="rotate(-50 991 553)"/><rect x="1463" y="559" width="10" height="3" fill="#ffffff" opacity="0.5" transform="rotate(-70 1463 559)"/><rect x="710" y="47" width="9" height="3" fill="#f4f4f4" opacity="0.9" transform="rotate(51 710 47)"/><rect x="932" y="643" width="6" height="4" fill="#ece2b0" opacity="0.9" transform="rotate(-21 932 643)"/><rect x="460" y="402" width="7" height="4" fill="#f4f4f4" opacity="0.8" transform="rotate(-28 460 402)"/><rect x="999" y="681" width="10" height="3" fill="#e8b0c8" opacity="0.6" transform="rotate(-9 999 681)"/><rect x="1333" y="775" width="7" height="4" fill="#f0a8a0" opacity="0.8" transform="rotate(40 1333 775)"/><rect x="885" y="693" width="7" height="3" fill="#ffffff" opacity="0.8" transform="rotate(9 885 693)"/><rect x="719" y="318" width="9" height="4" fill="#1a1a28" opacity="0.7" transform="rotate(-22 719 318)"/><rect x="1347" y="684" width="8" height="3" fill="#f0a8a0" opacity="0.5" transform="rotate(47 1347 684)"/><rect x="1202" y="396" width="6" height="3" fill="#1a1a28" opacity="0.7" transform="rotate(44 1202 396)"/><rect x="923" y="443" width="6" height="3" fill="#f4f4f4" opacity="0.6" transform="rotate(-5 923 443)"/><rect x="1135" y="63" width="7" height="4" fill="#e8b0c8" opacity="0.9" transform="rotate(-8 1135 63)"/><rect x="1305" y="24" width="10" height="3" fill="#ece2b0" opacity="0.7" transform="rotate(-32 1305 24)"/><rect x="1288" y="176" width="10" height="3" fill="#1a1a28" opacity="0.6" transform="rotate(55 1288 176)"/><rect x="719" y="646" width="9" height="4" fill="#1a1a28" opacity="0.7" transform="rotate(66 719 646)"/><rect x="1286" y="662" width="7" height="3" fill="#e8b0c8" opacity="0.8" transform="rotate(-56 1286 662)"/><rect x="863" y="615" width="9" height="3" fill="#f0a8a0" opacity="0.8" transform="rotate(35 863 615)"/><rect x="1348" y="359" width="11" height="3" fill="#1a1a28" opacity="0.9" transform="rotate(23 1348 359)"/><rect x="1168" y="661" width="6" height="3" fill="#f4f4f4" opacity="0.5" transform="rotate(-1 1168 661)"/><rect x="1206" y="453" width="8" height="4" fill="#ffffff" opacity="0.5" transform="rotate(55 1206 453)"/><rect x="583" y="260" width="7" height="4" fill="#ece2b0" opacity="0.6" transform="rotate(55 583 260)"/><rect x="1286" y="818" width="7" height="3" fill="#b8e4cc" opacity="0.6" transform="rotate(68 1286 818)"/><rect x="799" y="442" width="8" height="4" fill="#1a1a28" opacity="0.7" transform="rotate(21 799 442)"/><rect x="1255" y="739" width="8" height="4" fill="#f4f4f4" opacity="0.9" transform="rotate(-1 1255 739)"/><rect x="930" y="278" width="7" height="3" fill="#ece2b0" opacity="0.6" transform="rotate(53 930 278)"/><rect x="525" y="743" width="9" height="4" fill="#d0d8f4" opacity="0.9" transform="rotate(39 525 743)"/><rect x="917" y="145" width="8" height="4" fill="#d0d8f4" opacity="0.9" transform="rotate(-42 917 145)"/><rect x="603" y="290" width="8" height="4" fill="#f2c8d0" opacity="0.6" transform="rotate(-4 603 290)"/><rect x="1235" y="744" width="8" height="4" fill="#d0d8f4" opacity="0.5" transform="rotate(19 1235 744)"/><rect x="908" y="539" width="10" height="3" fill="#1a1a28" opacity="0.7" transform="rotate(-59 908 539)"/><rect x="1340" y="752" width="9" height="3" fill="#f0a8a0" opacity="0.7" transform="rotate(18 1340 752)"/><rect x="1344" y="569" width="8" height="3" fill="#b8e4cc" opacity="0.9" transform="rotate(-20 1344 569)"/><rect x="1002" y="717" width="6" height="3" fill="#f2c8d0" opacity="0.9" transform="rotate(46 1002 717)"/><rect x="1069" y="590" width="10" height="3" fill="#d0d8f4" opacity="0.7" transform="rotate(-13 1069 590)"/><rect x="1136" y="405" width="8" height="4" fill="#ece2b0" opacity="0.7" transform="rotate(30 1136 405)"/><rect x="533" y="738" width="7" height="3" fill="#1a1a28" opacity="0.5" transform="rotate(-61 533 738)"/><rect x="916" y="-7" width="9" height="3" fill="#b8e4cc" opacity="0.8" transform="rotate(-9 916 -7)"/><rect x="889" y="644" width="10" height="3" fill="#b8e4cc" opacity="0.7" transform="rotate(24 889 644)"/><rect x="1548" y="736" width="10" height="4" fill="#1a1a28" opacity="0.9" transform="rotate(45 1548 736)"/><rect x="1293" y="574" width="9" height="3" fill="#e8b0c8" opacity="0.6" transform="rotate(-61 1293 574)"/><rect x="1319" y="167" width="7" height="3" fill="#f2c8d0" opacity="0.7" transform="rotate(25 1319 167)"/><rect x="939" y="686" width="8" height="3" fill="#ece2b0" opacity="0.7" transform="rotate(18 939 686)"/><rect x="865" y="408" width="11" height="3" fill="#f4f4f4" opacity="0.5" transform="rotate(13 865 408)"/><rect x="1043" y="176" width="9" height="3" fill="#b8e4cc" opacity="0.6" transform="rotate(-24 1043 176)"/><rect x="847" y="649" width="7" height="4" fill="#e8b0c8" opacity="0.8" transform="rotate(43 847 649)"/><rect x="1006" y="663" width="7" height="3" fill="#f0a8a0" opacity="0.8" transform="rotate(64 1006 663)"/><rect x="1157" y="475" width="8" height="3" fill="#b8e4cc" opacity="0.8" transform="rotate(12 1157 475)"/><rect x="1049" y="298" width="9" height="3" fill="#ffffff" opacity="0.8" transform="rotate(-35 1049 298)"/><rect x="907" y="348" width="11" height="4" fill="#b8e4cc" opacity="0.7" transform="rotate(16 907 348)"/><rect x="1087" y="225" width="7" height="4" fill="#ffffff" opacity="0.8" transform="rotate(2 1087 225)"/><rect x="1258" y="646" width="10" height="4" fill="#f0a8a0" opacity="0.8" transform="rotate(-42 1258 646)"/><rect x="760" y="42" width="7" height="3" fill="#e8b0c8" opacity="0.6" transform="rotate(51 760 42)"/><rect x="865" y="515" width="11" height="3" fill="#ece2b0" opacity="0.8" transform="rotate(-64 865 515)"/><rect x="1116" y="339" width="6" height="4" fill="#d0d8f4" opacity="0.5" transform="rotate(38 1116 339)"/><rect x="1270" y="381" width="11" height="4" fill="#ffffff" opacity="0.9" transform="rotate(41 1270 381)"/><rect x="1403" y="800" width="10" height="3" fill="#1a1a28" opacity="0.6" transform="rotate(-35 1403 800)"/><rect x="974" y="744" width="10" height="4" fill="#1a1a28" opacity="0.8" transform="rotate(67 974 744)"/><rect x="1037" y="592" width="7" height="4" fill="#ece2b0" opacity="0.5" transform="rotate(-9 1037 592)"/><rect x="1064" y="304" width="6" height="4" fill="#ffffff" opacity="0.9" transform="rotate(40 1064 304)"/><rect x="1363" y="159" width="9" height="4" fill="#d0d8f4" opacity="0.8" transform="rotate(50 1363 159)"/><rect x="1235" y="521" width="7" height="3" fill="#1a1a28" opacity="0.9" transform="rotate(57 1235 521)"/><rect x="747" y="71" width="10" height="4" fill="#ffffff" opacity="0.8" transform="rotate(-8 747 71)"/><rect x="543" y="705" width="7" height="3" fill="#b8e4cc" opacity="0.8" transform="rotate(51 543 705)"/><rect x="771" y="380" width="10" height="3" fill="#ffffff" opacity="0.8" transform="rotate(-53 771 380)"/><rect x="1180" y="809" width="7" height="3" fill="#b8e4cc" opacity="0.8" transform="rotate(40 1180 809)"/><rect x="1060" y="606" width="6" height="3" fill="#f4f4f4" opacity="0.5" transform="rotate(67 1060 606)"/><rect x="1187" y="762" width="7" height="4" fill="#1a1a28" opacity="0.6" transform="rotate(60 1187 762)"/><rect x="1042" y="117" width="6" height="4" fill="#f2c8d0" opacity="0.6" transform="rotate(-55 1042 117)"/><rect x="1038" y="415" width="7" height="4" fill="#f4f4f4" opacity="0.5" transform="rotate(55 1038 415)"/><rect x="808" y="15" width="9" height="3" fill="#e8b0c8" opacity="0.5" transform="rotate(9 808 15)"/><rect x="1330" y="232" width="8" height="3" fill="#f4f4f4" opacity="0.6" transform="rotate(34 1330 232)"/><rect x="1101" y="411" width="10" height="3" fill="#b8e4cc" opacity="0.8" transform="rotate(29 1101 411)"/><rect x="932" y="552" width="6" height="3" fill="#f2c8d0" opacity="0.5" transform="rotate(53 932 552)"/><rect x="936" y="235" width="8" height="3" fill="#b8e4cc" opacity="0.5" transform="rotate(-23 936 235)"/><rect x="1230" y="52" width="7" height="4" fill="#e8b0c8" opacity="0.7" transform="rotate(14 1230 52)"/><rect x="906" y="620" width="10" height="3" fill="#f4f4f4" opacity="0.8" transform="rotate(-67 906 620)"/><rect x="1420" y="695" width="8" height="4" fill="#f0a8a0" opacity="0.7" transform="rotate(-45 1420 695)"/><rect x="1062" y="576" width="7" height="3" fill="#d0d8f4" opacity="0.7" transform="rotate(-21 1062 576)"/><rect x="1069" y="776" width="9" height="3" fill="#d0d8f4" opacity="0.6" transform="rotate(17 1069 776)"/><rect x="1127" y="197" width="8" height="3" fill="#d0d8f4" opacity="0.9" transform="rotate(-38 1127 197)"/><rect x="731" y="633" width="10" height="4" fill="#f2c8d0" opacity="0.5" transform="rotate(4 731 633)"/><rect x="1428" y="697" width="8" height="3" fill="#f2c8d0" opacity="0.9" transform="rotate(-61 1428 697)"/><rect x="1171" y="529" width="9" height="4" fill="#e8b0c8" opacity="0.8" transform="rotate(-13 1171 529)"/><rect x="1288" y="793" width="6" height="3" fill="#f4f4f4" opacity="0.8" transform="rotate(-30 1288 793)"/><rect x="838" y="777" width="9" height="3" fill="#f0a8a0" opacity="0.8" transform="rotate(-47 838 777)"/><rect x="1038" y="196" width="7" height="3" fill="#b8e4cc" opacity="0.8" transform="rotate(27 1038 196)"/><rect x="652" y="605" width="7" height="3" fill="#1a1a28" opacity="0.6" transform="rotate(-60 652 605)"/><rect x="678" y="43" width="6" height="3" fill="#ece2b0" opacity="0.8" transform="rotate(-19 678 43)"/><rect x="900" y="414" width="10" height="4" fill="#f2c8d0" opacity="0.6" transform="rotate(-7 900 414)"/><rect x="548" y="318" width="9" height="3" fill="#f2c8d0" opacity="0.9" transform="rotate(69 548 318)"/><rect x="718" y="161" width="8" height="4" fill="#b8e4cc" opacity="0.9" transform="rotate(-55 718 161)"/><rect x="1040" y="547" width="7" height="3" fill="#f2c8d0" opacity="0.6" transform="rotate(-43 1040 547)"/><rect x="760" y="539" width="7" height="3" fill="#f4f4f4" opacity="0.7" transform="rotate(-56 760 539)"/><rect x="639" y="531" width="9" height="3" fill="#f4f4f4" opacity="0.6" transform="rotate(-61 639 531)"/><rect x="678" y="136" width="8" height="4" fill="#ece2b0" opacity="0.7" transform="rotate(-18 678 136)"/><rect x="1148" y="651" width="7" height="3" fill="#b8e4cc" opacity="0.8" transform="rotate(37 1148 651)"/><rect x="1121" y="726" width="10" height="4" fill="#ffffff" opacity="0.6" transform="rotate(-36 1121 726)"/><rect x="1112" y="303" width="8" height="3" fill="#ffffff" opacity="0.6" transform="rotate(-4 1112 303)"/><rect x="982" y="372" width="10" height="3" fill="#ffffff" opacity="0.9" transform="rotate(-54 982 372)"/><rect x="1242" y="40" width="7" height="3" fill="#b8e4cc" opacity="0.9" transform="rotate(-8 1242 40)"/><rect x="805" y="450" width="6" height="3" fill="#1a1a28" opacity="0.5" transform="rotate(34 805 450)"/><rect x="1318" y="189" width="7" height="4" fill="#f2c8d0" opacity="0.7" transform="rotate(-40 1318 189)"/><rect x="848" y="379" width="11" height="4" fill="#ffffff" opacity="0.8" transform="rotate(-52 848 379)"/><rect x="1174" y="645" width="6" height="4" fill="#f0a8a0" opacity="0.6" transform="rotate(-4 1174 645)"/><rect x="1116" y="-1" width="9" height="3" fill="#ffffff" opacity="0.8" transform="rotate(-67 1116 -1)"/><rect x="1400" y="631" width="9" height="3" fill="#1a1a28" opacity="0.9" transform="rotate(-19 1400 631)"/><rect x="1062" y="775" width="10" height="4" fill="#ece2b0" opacity="0.8" transform="rotate(-19 1062 775)"/><rect x="1306" y="591" width="8" height="4" fill="#ece2b0" opacity="0.9" transform="rotate(-30 1306 591)"/><rect x="1008" y="243" width="8" height="3" fill="#f4f4f4" opacity="0.8" transform="rotate(-61 1008 243)"/><rect x="1033" y="415" width="11" height="3" fill="#b8e4cc" opacity="0.6" transform="rotate(69 1033 415)"/><rect x="721" y="641" width="7" height="4" fill="#f4f4f4" opacity="0.7" transform="rotate(36 721 641)"/><rect x="1023" y="275" width="9" height="3" fill="#ece2b0" opacity="0.6" transform="rotate(-18 1023 275)"/><rect x="1065" y="664" width="9" height="3" fill="#1a1a28" opacity="0.6" transform="rotate(7 1065 664)"/><rect x="826" y="190" width="7" height="4" fill="#ece2b0" opacity="0.9" transform="rotate(-49 826 190)"/><rect x="1149" y="615" width="7" height="3" fill="#ffffff" opacity="0.9" transform="rotate(-59 1149 615)"/><rect x="1173" y="200" width="9" height="3" fill="#f0a8a0" opacity="0.9" transform="rotate(-49 1173 200)"/><rect x="943" y="352" width="10" height="4" fill="#f2c8d0" opacity="0.6" transform="rotate(57 943 352)"/><rect x="845" y="793" width="10" height="3" fill="#f0a8a0" opacity="0.9" transform="rotate(4 845 793)"/><rect x="770" y="87" width="7" height="3" fill="#d0d8f4" opacity="0.9" transform="rotate(12 770 87)"/><rect x="679" y="789" width="7" height="3" fill="#1a1a28" opacity="0.6" transform="rotate(56 679 789)"/><rect x="893" y="186" width="8" height="3" fill="#f2c8d0" opacity="0.8" transform="rotate(25 893 186)"/><rect x="760" y="37" width="9" height="3" fill="#f4f4f4" opacity="0.7" transform="rotate(-24 760 37)"/><rect x="703" y="783" width="10" height="3" fill="#b8e4cc" opacity="0.9" transform="rotate(-25 703 783)"/><rect x="1403" y="64" width="9" height="3" fill="#b8e4cc" opacity="0.7" transform="rotate(-51 1403 64)"/><rect x="899" y="400" width="8" height="4" fill="#f0a8a0" opacity="0.6" transform="rotate(20 899 400)"/><rect x="692" y="413" width="10" height="3" fill="#ffffff" opacity="0.8" transform="rotate(20 692 413)"/><rect x="1343" y="285" width="10" height="3" fill="#ffffff" opacity="0.8" transform="rotate(-45 1343 285)"/><rect x="836" y="551" width="10" height="3" fill="#f0a8a0" opacity="0.9" transform="rotate(-54 836 551)"/><rect x="708" y="575" width="11" height="3" fill="#f0a8a0" opacity="0.8" transform="rotate(37 708 575)"/><rect x="643" y="126" width="6" height="3" fill="#f4f4f4" opacity="0.6" transform="rotate(23 643 126)"/><rect x="1345" y="592" width="7" height="3" fill="#ece2b0" opacity="0.5" transform="rotate(-69 1345 592)"/><rect x="1010" y="197" width="7" height="3" fill="#b8e4cc" opacity="0.5" transform="rotate(56 1010 197)"/><rect x="1503" y="795" width="7" height="3" fill="#d0d8f4" opacity="0.6" transform="rotate(3 1503 795)"/><rect x="1436" y="610" width="10" height="3" fill="#f0a8a0" opacity="0.6" transform="rotate(60 1436 610)"/><rect x="1327" y="568" width="7" height="4" fill="#d0d8f4" opacity="0.7" transform="rotate(32 1327 568)"/><rect x="1203" y="107" width="9" height="4" fill="#ece2b0" opacity="0.9" transform="rotate(43 1203 107)"/><rect x="753" y="4" width="8" height="3" fill="#f2c8d0" opacity="0.8" transform="rotate(-4 753 4)"/><rect x="1092" y="149" width="10" height="4" fill="#b8e4cc" opacity="0.8" transform="rotate(41 1092 149)"/><rect x="1129" y="351" width="6" height="4" fill="#ffffff" opacity="0.6" transform="rotate(-40 1129 351)"/><rect x="673" y="205" width="8" height="3" fill="#f4f4f4" opacity="0.6" transform="rotate(31 673 205)"/><rect x="1331" y="166" width="10" height="3" fill="#ece2b0" opacity="0.6" transform="rotate(-43 1331 166)"/><rect x="1028" y="248" width="9" height="3" fill="#b8e4cc" opacity="0.7" transform="rotate(-48 1028 248)"/><rect x="727" y="555" width="10" height="4" fill="#e8b0c8" opacity="0.8" transform="rotate(-14 727 555)"/><rect x="1056" y="416" width="7" height="4" fill="#ffffff" opacity="0.5" transform="rotate(53 1056 416)"/><rect x="1026" y="256" width="10" height="4" fill="#ffffff" opacity="0.7" transform="rotate(52 1026 256)"/><rect x="998" y="48" width="8" height="3" fill="#e8b0c8" opacity="0.6" transform="rotate(-35 998 48)"/><rect x="835" y="254" width="8" height="4" fill="#d0d8f4" opacity="0.7" transform="rotate(38 835 254)"/><rect x="1065" y="251" width="6" height="4" fill="#f0a8a0" opacity="0.6" transform="rotate(-58 1065 251)"/><rect x="502" y="702" width="11" height="3" fill="#f4f4f4" opacity="0.6" transform="rotate(-61 502 702)"/><rect x="1429" y="630" width="8" height="3" fill="#f2c8d0" opacity="0.8" transform="rotate(-15 1429 630)"/><rect x="1184" y="601" width="6" height="4" fill="#e8b0c8" opacity="0.5" transform="rotate(24 1184 601)"/><rect x="1137" y="431" width="10" height="3" fill="#1a1a28" opacity="0.8" transform="rotate(-46 1137 431)"/><rect x="1052" y="291" width="10" height="3" fill="#f2c8d0" opacity="0.6" transform="rotate(7 1052 291)"/><rect x="938" y="741" width="8" height="4" fill="#f0a8a0" opacity="0.8" transform="rotate(15 938 741)"/><rect x="1091" y="750" width="8" height="4" fill="#b8e4cc" opacity="0.5" transform="rotate(2 1091 750)"/><rect x="490" y="416" width="10" height="4" fill="#d0d8f4" opacity="0.6" transform="rotate(67 490 416)"/><rect x="900" y="557" width="9" height="3" fill="#b8e4cc" opacity="0.8" transform="rotate(-70 900 557)"/><rect x="471" y="780" width="8" height="4" fill="#f0a8a0" opacity="0.9" transform="rotate(45 471 780)"/><rect x="576" y="240" width="9" height="3" fill="#b8e4cc" opacity="0.5" transform="rotate(-30 576 240)"/><rect x="748" y="629" width="9" height="4" fill="#f4f4f4" opacity="0.9" transform="rotate(44 748 629)"/><rect x="525" y="594" width="10" height="4" fill="#d0d8f4" opacity="0.7" transform="rotate(-35 525 594)"/><rect x="1061" y="437" width="8" height="4" fill="#ece2b0" opacity="0.9" transform="rotate(-22 1061 437)"/><rect x="839" y="719" width="7" height="4" fill="#e8b0c8" opacity="0.8" transform="rotate(34 839 719)"/><rect x="1155" y="272" width="10" height="4" fill="#b8e4cc" opacity="0.8" transform="rotate(52 1155 272)"/><rect x="905" y="88" width="10" height="4" fill="#d0d8f4" opacity="0.5" transform="rotate(-66 905 88)"/><rect x="1059" y="46" width="10" height="3" fill="#1a1a28" opacity="0.6" transform="rotate(-5 1059 46)"/><rect x="686" y="520" width="10" height="3" fill="#d0d8f4" opacity="0.8" transform="rotate(-25 686 520)"/><rect x="1018" y="249" width="10" height="3" fill="#e8b0c8" opacity="0.5" transform="rotate(-55 1018 249)"/><rect x="931" y="783" width="7" height="3" fill="#f2c8d0" opacity="0.8" transform="rotate(6 931 783)"/><rect x="990" y="462" width="8" height="3" fill="#ece2b0" opacity="0.7" transform="rotate(-67 990 462)"/><rect x="1281" y="671" width="10" height="3" fill="#f4f4f4" opacity="0.6" transform="rotate(-39 1281 671)"/><rect x="1175" y="723" width="11" height="3" fill="#f2c8d0" opacity="0.9" transform="rotate(-17 1175 723)"/><rect x="1051" y="263" width="10" height="3" fill="#e8b0c8" opacity="0.5" transform="rotate(7 1051 263)"/><rect x="1218" y="713" width="9" height="3" fill="#ece2b0" opacity="0.6" transform="rotate(46 1218 713)"/><rect x="1296" y="620" width="10" height="3" fill="#b8e4cc" opacity="0.7" transform="rotate(59 1296 620)"/><rect x="772" y="738" width="10" height="4" fill="#b8e4cc" opacity="0.7" transform="rotate(30 772 738)"/><rect x="1325" y="109" width="9" height="4" fill="#f0a8a0" opacity="0.8" transform="rotate(-11 1325 109)"/><rect x="817" y="184" width="7" height="3" fill="#f4f4f4" opacity="0.9" transform="rotate(-62 817 184)"/><rect x="1123" y="640" width="9" height="3" fill="#b8e4cc" opacity="0.8" transform="rotate(45 1123 640)"/><rect x="872" y="740" width="7" height="3" fill="#ffffff" opacity="0.8" transform="rotate(31 872 740)"/><rect x="916" y="686" width="11" height="3" fill="#ffffff" opacity="0.9" transform="rotate(62 916 686)"/><rect x="743" y="711" width="10" height="3" fill="#d0d8f4" opacity="0.7" transform="rotate(-12 743 711)"/><rect x="1138" y="503" width="8" height="3" fill="#f2c8d0" opacity="0.6" transform="rotate(-39 1138 503)"/><rect x="1237" y="479" width="7" height="3" fill="#ffffff" opacity="0.8" transform="rotate(-12 1237 479)"/><rect x="691" y="220" width="9" height="3" fill="#e8b0c8" opacity="0.6" transform="rotate(1 691 220)"/><rect x="789" y="51" width="10" height="4" fill="#d0d8f4" opacity="0.8" transform="rotate(-14 789 51)"/><rect x="735" y="687" width="9" height="3" fill="#e8b0c8" opacity="0.5" transform="rotate(47 735 687)"/><rect x="1378" y="695" width="10" height="3" fill="#1a1a28" opacity="0.9" transform="rotate(18 1378 695)"/><rect x="847" y="531" width="10" height="3" fill="#d0d8f4" opacity="0.8" transform="rotate(26 847 531)"/><rect x="855" y="321" width="8" height="3" fill="#ece2b0" opacity="0.7" transform="rotate(-39 855 321)"/><rect x="819" y="86" width="10" height="4" fill="#d0d8f4" opacity="0.9" transform="rotate(-66 819 86)"/><rect x="1084" y="356" width="7" height="3" fill="#e8b0c8" opacity="0.7" transform="rotate(-67 1084 356)"/><rect x="1362" y="386" width="8" height="3" fill="#f0a8a0" opacity="0.5" transform="rotate(15 1362 386)"/><rect x="791" y="654" width="6" height="4" fill="#f4f4f4" opacity="0.6" transform="rotate(18 791 654)"/><rect x="699" y="123" width="9" height="3" fill="#f4f4f4" opacity="0.8" transform="rotate(-43 699 123)"/><rect x="1037" y="91" width="11" height="4" fill="#ece2b0" opacity="0.7" transform="rotate(-55 1037 91)"/><rect x="1290" y="755" width="6" height="4" fill="#b8e4cc" opacity="0.5" transform="rotate(-9 1290 755)"/><rect x="489" y="340" width="9" height="4" fill="#ece2b0" opacity="0.9" transform="rotate(-45 489 340)"/><rect x="985" y="22" width="6" height="3" fill="#ece2b0" opacity="0.6" transform="rotate(-67 985 22)"/><rect x="1075" y="496" width="9" height="4" fill="#1a1a28" opacity="0.6" transform="rotate(-20 1075 496)"/><rect x="1136" y="329" width="8" height="3" fill="#ece2b0" opacity="0.6" transform="rotate(-67 1136 329)"/><rect x="1392" y="510" width="9" height="3" fill="#f4f4f4" opacity="0.9" transform="rotate(17 1392 510)"/><rect x="643" y="444" width="10" height="3" fill="#f4f4f4" opacity="0.8" transform="rotate(-9 643 444)"/><rect x="818" y="773" width="10" height="4" fill="#ece2b0" opacity="0.7" transform="rotate(9 818 773)"/><rect x="1232" y="561" width="7" height="3" fill="#e8b0c8" opacity="0.9" transform="rotate(0 1232 561)"/><rect x="1134" y="576" width="7" height="3" fill="#d0d8f4" opacity="0.9" transform="rotate(23 1134 576)"/><rect x="739" y="783" width="11" height="3" fill="#1a1a28" opacity="0.6" transform="rotate(-26 739 783)"/><rect x="1181" y="541" width="9" height="3" fill="#d0d8f4" opacity="0.6" transform="rotate(11 1181 541)"/><rect x="967" y="619" width="7" height="3" fill="#e8b0c8" opacity="0.7" transform="rotate(-48 967 619)"/><rect x="868" y="59" width="11" height="4" fill="#f2c8d0" opacity="0.8" transform="rotate(-49 868 59)"/><rect x="1283" y="75" width="7" height="3" fill="#ffffff" opacity="0.9" transform="rotate(52 1283 75)"/><rect x="1020" y="363" width="8" height="3" fill="#f0a8a0" opacity="0.6" transform="rotate(47 1020 363)"/><rect x="860" y="533" width="7" height="3" fill="#e8b0c8" opacity="0.9" transform="rotate(59 860 533)"/><rect x="625" y="661" width="10" height="3" fill="#1a1a28" opacity="0.8" transform="rotate(51 625 661)"/><rect x="1149" y="569" width="11" height="3" fill="#f0a8a0" opacity="0.5" transform="rotate(47 1149 569)"/><rect x="1348" y="605" width="7" height="3" fill="#b8e4cc" opacity="0.6" transform="rotate(-17 1348 605)"/><rect x="947" y="410" width="8" height="3" fill="#f4f4f4" opacity="0.6" transform="rotate(-59 947 410)"/><rect x="612" y="687" width="9" height="4" fill="#f2c8d0" opacity="0.8" transform="rotate(20 612 687)"/><rect x="1098" y="126" width="11" height="3" fill="#b8e4cc" opacity="0.6" transform="rotate(50 1098 126)"/><rect x="777" y="747" width="7" height="4" fill="#f2c8d0" opacity="0.8" transform="rotate(16 777 747)"/><rect x="854" y="748" width="10" height="4" fill="#b8e4cc" opacity="0.8" transform="rotate(34 854 748)"/><rect x="609" y="153" width="7" height="3" fill="#d0d8f4" opacity="0.7" transform="rotate(-53 609 153)"/><rect x="1019" y="129" width="7" height="3" fill="#f0a8a0" opacity="0.8" transform="rotate(-1 1019 129)"/><rect x="1261" y="799" width="8" height="3" fill="#1a1a28" opacity="0.9" transform="rotate(-57 1261 799)"/><rect x="1180" y="805" width="7" height="3" fill="#1a1a28" opacity="0.8" transform="rotate(65 1180 805)"/><rect x="1199" y="254" width="8" height="4" fill="#d0d8f4" opacity="0.8" transform="rotate(-6 1199 254)"/><rect x="1438" y="777" width="9" height="3" fill="#b8e4cc" opacity="0.7" transform="rotate(63 1438 777)"/><rect x="1265" y="289" width="9" height="3" fill="#b8e4cc" opacity="0.8" transform="rotate(66 1265 289)"/><rect x="635" y="477" width="8" height="3" fill="#e8b0c8" opacity="0.7" transform="rotate(-60 635 477)"/><rect x="1396" y="545" width="9" height="4" fill="#f4f4f4" opacity="0.6" transform="rotate(69 1396 545)"/><rect x="1361" y="799" width="6" height="3" fill="#f4f4f4" opacity="0.7" transform="rotate(55 1361 799)"/><rect x="697" y="432" width="7" height="3" fill="#b8e4cc" opacity="0.5" transform="rotate(68 697 432)"/><rect x="1357" y="764" width="7" height="4" fill="#d0d8f4" opacity="0.8" transform="rotate(2 1357 764)"/><rect x="1279" y="417" width="8" height="4" fill="#f4f4f4" opacity="0.9" transform="rotate(-67 1279 417)"/><rect x="419" y="815" width="9" height="3" fill="#d0d8f4" opacity="0.7" transform="rotate(-47 419 815)"/><rect x="568" y="202" width="7" height="3" fill="#f2c8d0" opacity="0.6" transform="rotate(-49 568 202)"/><rect x="1474" y="407" width="9" height="3" fill="#e8b0c8" opacity="0.8" transform="rotate(-12 1474 407)"/><rect x="944" y="107" width="11" height="3" fill="#d0d8f4" opacity="0.6" transform="rotate(55 944 107)"/><rect x="757" y="67" width="8" height="3" fill="#f4f4f4" opacity="0.6" transform="rotate(-23 757 67)"/><rect x="701" y="366" width="9" height="4" fill="#ece2b0" opacity="0.6" transform="rotate(15 701 366)"/><rect x="983" y="55" width="10" height="3" fill="#ffffff" opacity="0.6" transform="rotate(39 983 55)"/><rect x="702" y="118" width="8" height="3" fill="#e8b0c8" opacity="0.7" transform="rotate(57 702 118)"/><rect x="1021" y="92" width="10" height="3" fill="#f4f4f4" opacity="0.6" transform="rotate(-48 1021 92)"/><rect x="1054" y="23" width="6" height="3" fill="#b8e4cc" opacity="0.7" transform="rotate(35 1054 23)"/><rect x="1195" y="350" width="9" height="3" fill="#f4f4f4" opacity="0.8" transform="rotate(56 1195 350)"/><rect x="1364" y="539" width="7" height="3" fill="#f0a8a0" opacity="0.9" transform="rotate(5 1364 539)"/><rect x="855" y="547" width="7" height="3" fill="#1a1a28" opacity="0.5" transform="rotate(26 855 547)"/><rect x="1178" y="60" width="6" height="3" fill="#f2c8d0" opacity="0.7" transform="rotate(-33 1178 60)"/><rect x="878" y="72" width="11" height="3" fill="#f2c8d0" opacity="0.9" transform="rotate(-7 878 72)"/><rect x="767" y="666" width="8" height="3" fill="#ece2b0" opacity="0.8" transform="rotate(-2 767 666)"/><rect x="1164" y="808" width="10" height="4" fill="#f2c8d0" opacity="0.6" transform="rotate(41 1164 808)"/><rect x="1005" y="257" width="6" height="3" fill="#d0d8f4" opacity="0.6" transform="rotate(31 1005 257)"/><rect x="1122" y="677" width="7" height="3" fill="#ece2b0" opacity="0.5" transform="rotate(-45 1122 677)"/><rect x="706" y="593" width="10" height="3" fill="#f0a8a0" opacity="0.8" transform="rotate(-48 706 593)"/><rect x="1195" y="547" width="6" height="3" fill="#f0a8a0" opacity="0.9" transform="rotate(-20 1195 547)"/><rect x="1169" y="254" width="11" height="4" fill="#ffffff" opacity="0.9" transform="rotate(51 1169 254)"/><rect x="525" y="460" width="7" height="3" fill="#d0d8f4" opacity="0.6" transform="rotate(-2 525 460)"/><rect x="1391" y="537" width="7" height="3" fill="#ece2b0" opacity="0.5" transform="rotate(-10 1391 537)"/><rect x="948" y="233" width="7" height="3" fill="#d0d8f4" opacity="0.7" transform="rotate(-8 948 233)"/><rect x="979" y="414" width="8" height="3" fill="#f4f4f4" opacity="0.9" transform="rotate(-14 979 414)"/><rect x="1051" y="287" width="8" height="3" fill="#b8e4cc" opacity="0.9" transform="rotate(36 1051 287)"/><rect x="1295" y="806" width="8" height="4" fill="#d0d8f4" opacity="0.8" transform="rotate(-34 1295 806)"/><rect x="960" y="289" width="6" height="4" fill="#f0a8a0" opacity="0.9" transform="rotate(3 960 289)"/><rect x="1080" y="180" width="8" height="3" fill="#ece2b0" opacity="0.7" transform="rotate(41 1080 180)"/><rect x="813" y="394" width="10" height="4" fill="#ffffff" opacity="0.6" transform="rotate(49 813 394)"/><rect x="1149" y="119" width="7" height="3" fill="#d0d8f4" opacity="0.6" transform="rotate(30 1149 119)"/><rect x="699" y="729" width="8" height="3" fill="#d0d8f4" opacity="0.7" transform="rotate(38 699 729)"/><rect x="1158" y="414" width="11" height="4" fill="#1a1a28" opacity="0.7" transform="rotate(68 1158 414)"/><rect x="1129" y="305" width="6" height="3" fill="#d0d8f4" opacity="0.6" transform="rotate(37 1129 305)"/><rect x="1079" y="465" width="7" height="3" fill="#b8e4cc" opacity="0.6" transform="rotate(29 1079 465)"/><rect x="639" y="257" width="6" height="3" fill="#f2c8d0" opacity="0.7" transform="rotate(20 639 257)"/><rect x="773" y="92" width="7" height="3" fill="#d0d8f4" opacity="0.5" transform="rotate(-12 773 92)"/><rect x="1012" y="322" width="9" height="3" fill="#b8e4cc" opacity="0.7" transform="rotate(-23 1012 322)"/><rect x="1242" y="22" width="10" height="4" fill="#ffffff" opacity="0.7" transform="rotate(-32 1242 22)"/><rect x="1416" y="373" width="9" height="3" fill="#ffffff" opacity="0.7" transform="rotate(14 1416 373)"/><rect x="1013" y="311" width="10" height="3" fill="#ffffff" opacity="0.9" transform="rotate(-34 1013 311)"/><rect x="1161" y="713" width="9" height="3" fill="#ece2b0" opacity="0.7" transform="rotate(57 1161 713)"/><rect x="795" y="349" width="9" height="3" fill="#e8b0c8" opacity="0.7" transform="rotate(28 795 349)"/><rect x="943" y="428" width="7" height="3" fill="#b8e4cc" opacity="0.9" transform="rotate(6 943 428)"/><rect x="841" y="287" width="8" height="3" fill="#f0a8a0" opacity="0.8" transform="rotate(9 841 287)"/><rect x="624" y="690" width="8" height="4" fill="#ece2b0" opacity="0.6" transform="rotate(20 624 690)"/><rect x="653" y="691" width="8" height="3" fill="#d0d8f4" opacity="0.6" transform="rotate(64 653 691)"/><rect x="1000" y="289" width="7" height="3" fill="#ece2b0" opacity="0.9" transform="rotate(29 1000 289)"/><rect x="630" y="14" width="7" height="4" fill="#f4f4f4" opacity="0.7" transform="rotate(26 630 14)"/><rect x="1320" y="382" width="7" height="3" fill="#ece2b0" opacity="0.6" transform="rotate(20 1320 382)"/><rect x="875" y="499" width="7" height="3" fill="#e8b0c8" opacity="0.7" transform="rotate(-26 875 499)"/><rect x="847" y="585" width="10" height="3" fill="#f0a8a0" opacity="0.8" transform="rotate(-32 847 585)"/><rect x="577" y="637" width="9" height="3" fill="#d0d8f4" opacity="0.8" transform="rotate(-8 577 637)"/><rect x="856" y="615" width="8" height="3" fill="#f4f4f4" opacity="0.8" transform="rotate(66 856 615)"/><rect x="1299" y="18" width="11" height="4" fill="#f0a8a0" opacity="0.9" transform="rotate(32 1299 18)"/><rect x="1231" y="48" width="11" height="4" fill="#b8e4cc" opacity="0.7" transform="rotate(-67 1231 48)"/><rect x="1196" y="432" width="10" height="3" fill="#d0d8f4" opacity="0.8" transform="rotate(56 1196 432)"/><rect x="574" y="99" width="8" height="4" fill="#f2c8d0" opacity="0.5" transform="rotate(-67 574 99)"/><rect x="840" y="240" width="10" height="3" fill="#ffffff" opacity="0.8" transform="rotate(-41 840 240)"/><rect x="548" y="796" width="9" height="3" fill="#f0a8a0" opacity="0.6" transform="rotate(-62 548 796)"/><rect x="1346" y="705" width="7" height="4" fill="#ffffff" opacity="0.9" transform="rotate(-5 1346 705)"/><rect x="1172" y="215" width="11" height="3" fill="#f0a8a0" opacity="0.7" transform="rotate(-51 1172 215)"/><rect x="896" y="176" width="7" height="4" fill="#e8b0c8" opacity="0.7" transform="rotate(-18 896 176)"/><rect x="557" y="626" width="10" height="4" fill="#ece2b0" opacity="0.7" transform="rotate(-14 557 626)"/><rect x="1015" y="598" width="9" height="3" fill="#ece2b0" opacity="0.7" transform="rotate(3 1015 598)"/><rect x="1293" y="164" width="11" height="3" fill="#f2c8d0" opacity="0.6" transform="rotate(-35 1293 164)"/><rect x="895" y="689" width="8" height="4" fill="#f0a8a0" opacity="0.6" transform="rotate(52 895 689)"/><rect x="1369" y="679" width="9" height="3" fill="#ece2b0" opacity="0.8" transform="rotate(18 1369 679)"/><rect x="1191" y="69" width="11" height="3" fill="#1a1a28" opacity="0.6" transform="rotate(-5 1191 69)"/><rect x="1368" y="74" width="8" height="3" fill="#b8e4cc" opacity="0.8" transform="rotate(-49 1368 74)"/><rect x="754" y="73" width="10" height="4" fill="#e8b0c8" opacity="0.6" transform="rotate(-47 754 73)"/><rect x="1072" y="526" width="8" height="3" fill="#b8e4cc" opacity="0.7" transform="rotate(67 1072 526)"/><rect x="1307" y="75" width="8" height="4" fill="#b8e4cc" opacity="0.9" transform="rotate(68 1307 75)"/><rect x="698" y="133" width="8" height="3" fill="#ece2b0" opacity="0.8" transform="rotate(43 698 133)"/><rect x="1191" y="598" width="7" height="4" fill="#f4f4f4" opacity="0.6" transform="rotate(52 1191 598)"/><rect x="1287" y="161" width="7" height="4" fill="#ece2b0" opacity="0.6" transform="rotate(-33 1287 161)"/><rect x="872" y="298" width="10" height="4" fill="#b8e4cc" opacity="0.9" transform="rotate(-54 872 298)"/><rect x="1292" y="85" width="10" height="3" fill="#f4f4f4" opacity="0.9" transform="rotate(-1 1292 85)"/><rect x="996" y="618" width="8" height="4" fill="#f0a8a0" opacity="0.7" transform="rotate(-15 996 618)"/><rect x="1054" y="504" width="10" height="4" fill="#e8b0c8" opacity="0.9" transform="rotate(25 1054 504)"/><rect x="789" y="327" width="10" height="3" fill="#e8b0c8" opacity="0.6" transform="rotate(23 789 327)"/><rect x="1003" y="781" width="11" height="4" fill="#f2c8d0" opacity="0.5" transform="rotate(1 1003 781)"/><rect x="555" y="802" width="6" height="3" fill="#b8e4cc" opacity="0.7" transform="rotate(18 555 802)"/><rect x="863" y="160" width="9" height="3" fill="#f4f4f4" opacity="0.7" transform="rotate(22 863 160)"/><rect x="504" y="588" width="9" height="3" fill="#f4f4f4" opacity="0.8" transform="rotate(-60 504 588)"/><rect x="853" y="244" width="9" height="4" fill="#f2c8d0" opacity="0.9" transform="rotate(-54 853 244)"/><rect x="1381" y="501" width="9" height="4" fill="#f2c8d0" opacity="0.7" transform="rotate(55 1381 501)"/><rect x="741" y="239" width="11" height="3" fill="#b8e4cc" opacity="0.7" transform="rotate(-9 741 239)"/><rect x="1081" y="581" width="8" height="3" fill="#f2c8d0" opacity="0.8" transform="rotate(8 1081 581)"/><rect x="1301" y="531" width="7" height="4" fill="#1a1a28" opacity="0.8" transform="rotate(-49 1301 531)"/><rect x="947" y="421" width="8" height="4" fill="#b8e4cc" opacity="0.6" transform="rotate(56 947 421)"/><rect x="1145" y="4" width="6" height="3" fill="#f0a8a0" opacity="0.9" transform="rotate(23 1145 4)"/><rect x="1163" y="326" width="9" height="4" fill="#d0d8f4" opacity="0.6" transform="rotate(43 1163 326)"/><rect x="922" y="115" width="7" height="3" fill="#b8e4cc" opacity="0.8" transform="rotate(-57 922 115)"/><rect x="984" y="48" width="7" height="4" fill="#b8e4cc" opacity="0.6" transform="rotate(-8 984 48)"/><rect x="1352" y="800" width="9" height="3" fill="#f4f4f4" opacity="0.9" transform="rotate(-27 1352 800)"/><rect x="889" y="73" width="6" height="4" fill="#f0a8a0" opacity="0.8" transform="rotate(12 889 73)"/><rect x="879" y="8" width="8" height="3" fill="#e8b0c8" opacity="0.5" transform="rotate(7 879 8)"/><rect x="1355" y="655" width="8" height="3" fill="#e8b0c8" opacity="0.9" transform="rotate(-54 1355 655)"/><rect x="909" y="195" width="11" height="3" fill="#b8e4cc" opacity="0.9" transform="rotate(13 909 195)"/><rect x="1224" y="773" width="7" height="4" fill="#b8e4cc" opacity="0.6" transform="rotate(16 1224 773)"/><rect x="825" y="662" width="6" height="3" fill="#d0d8f4" opacity="0.6" transform="rotate(28 825 662)"/><rect x="929" y="501" width="7" height="3" fill="#f2c8d0" opacity="0.6" transform="rotate(30 929 501)"/><rect x="1035" y="523" width="9" height="3" fill="#1a1a28" opacity="0.7" transform="rotate(55 1035 523)"/><rect x="793" y="343" width="8" height="4" fill="#f0a8a0" opacity="0.7" transform="rotate(34 793 343)"/><rect x="648" y="146" width="11" height="4" fill="#e8b0c8" opacity="0.7" transform="rotate(39 648 146)"/><rect x="822" y="686" width="7" height="4" fill="#ece2b0" opacity="0.9" transform="rotate(30 822 686)"/><rect x="1147" y="644" width="8" height="3" fill="#ece2b0" opacity="0.9" transform="rotate(-18 1147 644)"/><rect x="812" y="546" width="7" height="3" fill="#b8e4cc" opacity="0.7" transform="rotate(10 812 546)"/><rect x="1217" y="109" width="9" height="4" fill="#f0a8a0" opacity="0.6" transform="rotate(44 1217 109)"/><rect x="700" y="212" width="8" height="3" fill="#1a1a28" opacity="0.7" transform="rotate(-9 700 212)"/><rect x="580" y="643" width="6" height="4" fill="#b8e4cc" opacity="0.5" transform="rotate(-14 580 643)"/><rect x="1130" y="73" width="10" height="3" fill="#b8e4cc" opacity="0.7" transform="rotate(1 1130 73)"/><rect x="999" y="466" width="6" height="4" fill="#f4f4f4" opacity="0.8" transform="rotate(37 999 466)"/><rect x="1076" y="477" width="10" height="3" fill="#1a1a28" opacity="0.6" transform="rotate(-49 1076 477)"/><rect x="746" y="321" width="7" height="4" fill="#d0d8f4" opacity="0.8" transform="rotate(10 746 321)"/><rect x="917" y="755" width="10" height="3" fill="#e8b0c8" opacity="0.7" transform="rotate(-24 917 755)"/><rect x="1191" y="576" width="11" height="3" fill="#1a1a28" opacity="0.9" transform="rotate(23 1191 576)"/><rect x="1137" y="360" width="8" height="4" fill="#f2c8d0" opacity="0.8" transform="rotate(-26 1137 360)"/><rect x="1042" y="607" width="9" height="4" fill="#b8e4cc" opacity="0.7" transform="rotate(-41 1042 607)"/><rect x="1106" y="268" width="11" height="4" fill="#f4f4f4" opacity="0.8" transform="rotate(-8 1106 268)"/><rect x="1346" y="135" width="6" height="3" fill="#ffffff" opacity="0.8" transform="rotate(-68 1346 135)"/><rect x="993" y="32" width="8" height="3" fill="#1a1a28" opacity="0.7" transform="rotate(18 993 32)"/><rect x="1138" y="526" width="9" height="3" fill="#1a1a28" opacity="0.6" transform="rotate(15 1138 526)"/><rect x="951" y="68" width="6" height="3" fill="#ffffff" opacity="0.9" transform="rotate(47 951 68)"/><rect x="1015" y="685" width="9" height="3" fill="#1a1a28" opacity="0.8" transform="rotate(-68 1015 685)"/><rect x="784" y="349" width="9" height="3" fill="#ffffff" opacity="0.9" transform="rotate(32 784 349)"/><rect x="679" y="809" width="10" height="3" fill="#f0a8a0" opacity="0.8" transform="rotate(53 679 809)"/><rect x="1315" y="735" width="8" height="3" fill="#f4f4f4" opacity="0.6" transform="rotate(-56 1315 735)"/><rect x="981" y="441" width="11" height="3" fill="#f4f4f4" opacity="0.7" transform="rotate(58 981 441)"/><rect x="1290" y="472" width="7" height="4" fill="#e8b0c8" opacity="0.5" transform="rotate(-27 1290 472)"/><rect x="689" y="230" width="9" height="3" fill="#f4f4f4" opacity="0.8" transform="rotate(29 689 230)"/><rect x="998" y="127" width="7" height="4" fill="#e8b0c8" opacity="0.9" transform="rotate(47 998 127)"/><rect x="1316" y="670" width="7" height="3" fill="#d0d8f4" opacity="0.6" transform="rotate(54 1316 670)"/><rect x="1397" y="362" width="10" height="4" fill="#d0d8f4" opacity="0.5" transform="rotate(-30 1397 362)"/><rect x="930" y="767" width="7" height="4" fill="#e8b0c8" opacity="0.8" transform="rotate(-14 930 767)"/><rect x="1322" y="610" width="8" height="3" fill="#f0a8a0" opacity="0.7" transform="rotate(-17 1322 610)"/><rect x="1571" y="698" width="8" height="4" fill="#f2c8d0" opacity="0.6" transform="rotate(-2 1571 698)"/><rect x="1130" y="770" width="10" height="3" fill="#f0a8a0" opacity="0.5" transform="rotate(-70 1130 770)"/><rect x="1028" y="516" width="10" height="4" fill="#ece2b0" opacity="0.9" transform="rotate(-24 1028 516)"/><rect x="741" y="461" width="7" height="3" fill="#ece2b0" opacity="0.8" transform="rotate(6 741 461)"/><rect x="954" y="715" width="7" height="3" fill="#d0d8f4" opacity="0.5" transform="rotate(-69 954 715)"/><rect x="918" y="224" width="10" height="3" fill="#ece2b0" opacity="0.7" transform="rotate(44 918 224)"/><rect x="1229" y="139" width="7" height="4" fill="#1a1a28" opacity="0.5" transform="rotate(-69 1229 139)"/><rect x="1143" y="195" width="9" height="4" fill="#ffffff" opacity="0.6" transform="rotate(-13 1143 195)"/><rect x="815" y="478" width="8" height="3" fill="#d0d8f4" opacity="0.8" transform="rotate(-6 815 478)"/><rect x="1096" y="96" width="8" height="3" fill="#f2c8d0" opacity="0.6" transform="rotate(-30 1096 96)"/><rect x="864" y="707" width="9" height="3" fill="#f2c8d0" opacity="0.9" transform="rotate(-17 864 707)"/><rect x="1193" y="363" width="9" height="4" fill="#f0a8a0" opacity="0.7" transform="rotate(-34 1193 363)"/><rect x="1029" y="522" width="9" height="3" fill="#1a1a28" opacity="0.9" transform="rotate(-69 1029 522)"/><rect x="1438" y="790" width="8" height="3" fill="#f2c8d0" opacity="0.9" transform="rotate(8 1438 790)"/><rect x="837" y="417" width="7" height="3" fill="#ffffff" opacity="0.8" transform="rotate(-4 837 417)"/><rect x="758" y="506" width="7" height="3" fill="#f4f4f4" opacity="0.7" transform="rotate(0 758 506)"/><rect x="1042" y="694" width="10" height="3" fill="#b8e4cc" opacity="0.7" transform="rotate(46 1042 694)"/><rect x="971" y="7" width="11" height="4" fill="#f2c8d0" opacity="0.5" transform="rotate(28 971 7)"/><rect x="1185" y="301" width="8" height="3" fill="#ffffff" opacity="0.8" transform="rotate(55 1185 301)"/><rect x="946" y="293" width="7" height="3" fill="#ffffff" opacity="0.8" transform="rotate(3 946 293)"/><rect x="1381" y="463" width="9" height="3" fill="#e8b0c8" opacity="0.7" transform="rotate(18 1381 463)"/><rect x="803" y="343" width="7" height="3" fill="#ffffff" opacity="0.5" transform="rotate(-1 803 343)"/><rect x="616" y="539" width="10" height="3" fill="#f2c8d0" opacity="0.9" transform="rotate(-28 616 539)"/><rect x="976" y="186" width="10" height="3" fill="#e8b0c8" opacity="0.5" transform="rotate(5 976 186)"/><rect x="954" y="162" width="6" height="3" fill="#f0a8a0" opacity="0.7" transform="rotate(4 954 162)"/><rect x="791" y="108" width="8" height="3" fill="#f2c8d0" opacity="0.7" transform="rotate(-53 791 108)"/><rect x="1454" y="509" width="7" height="3" fill="#ece2b0" opacity="0.7" transform="rotate(-37 1454 509)"/><rect x="1079" y="122" width="10" height="4" fill="#ece2b0" opacity="0.8" transform="rotate(56 1079 122)"/><rect x="805" y="456" width="7" height="4" fill="#e8b0c8" opacity="0.6" transform="rotate(24 805 456)"/><rect x="728" y="662" width="9" height="3" fill="#d0d8f4" opacity="0.5" transform="rotate(17 728 662)"/><rect x="407" y="640" width="10" height="3" fill="#b8e4cc" opacity="0.6" transform="rotate(-37 407 640)"/><rect x="1181" y="590" width="8" height="4" fill="#1a1a28" opacity="0.5" transform="rotate(10 1181 590)"/><rect x="1235" y="614" width="9" height="4" fill="#d0d8f4" opacity="0.7" transform="rotate(18 1235 614)"/><rect x="681" y="351" width="9" height="3" fill="#f4f4f4" opacity="0.7" transform="rotate(-41 681 351)"/><rect x="1179" y="635" width="9" height="3" fill="#ece2b0" opacity="0.8" transform="rotate(26 1179 635)"/><rect x="804" y="358" width="10" height="4" fill="#e8b0c8" opacity="0.7" transform="rotate(-41 804 358)"/><rect x="1240" y="810" width="8" height="3" fill="#b8e4cc" opacity="0.8" transform="rotate(-28 1240 810)"/><rect x="1347" y="113" width="6" height="3" fill="#f0a8a0" opacity="0.8" transform="rotate(2 1347 113)"/><rect x="1310" y="368" width="10" height="4" fill="#e8b0c8" opacity="0.7" transform="rotate(25 1310 368)"/><rect x="540" y="595" width="7" height="3" fill="#1a1a28" opacity="0.6" transform="rotate(39 540 595)"/><rect x="828" y="416" width="11" height="3" fill="#d0d8f4" opacity="0.7" transform="rotate(-19 828 416)"/><rect x="780" y="412" width="8" height="3" fill="#ffffff" opacity="0.6" transform="rotate(59 780 412)"/><rect x="464" y="591" width="8" height="4" fill="#e8b0c8" opacity="0.6" transform="rotate(41 464 591)"/><rect x="891" y="404" width="11" height="3" fill="#f2c8d0" opacity="0.6" transform="rotate(-34 891 404)"/><rect x="978" y="154" width="9" height="3" fill="#ffffff" opacity="0.7" transform="rotate(25 978 154)"/><rect x="1201" y="404" width="9" height="3" fill="#1a1a28" opacity="0.7" transform="rotate(18 1201 404)"/><rect x="885" y="275" width="6" height="3" fill="#e8b0c8" opacity="0.7" transform="rotate(-2 885 275)"/><rect x="989" y="135" width="10" height="3" fill="#1a1a28" opacity="0.6" transform="rotate(17 989 135)"/><rect x="1079" y="380" width="11" height="3" fill="#d0d8f4" opacity="0.5" transform="rotate(-14 1079 380)"/><rect x="1475" y="398" width="8" height="3" fill="#f2c8d0" opacity="0.8" transform="rotate(0 1475 398)"/><rect x="1167" y="270" width="7" height="3" fill="#d0d8f4" opacity="0.7" transform="rotate(8 1167 270)"/><rect x="1099" y="439" width="7" height="3" fill="#ffffff" opacity="0.7" transform="rotate(43 1099 439)"/><rect x="1041" y="664" width="8" height="3" fill="#ffffff" opacity="0.6" transform="rotate(-66 1041 664)"/><rect x="1053" y="473" width="7" height="4" fill="#f2c8d0" opacity="0.7" transform="rotate(-61 1053 473)"/><rect x="1239" y="692" width="6" height="3" fill="#ffffff" opacity="0.7" transform="rotate(4 1239 692)"/><rect x="519" y="218" width="6" height="4" fill="#f4f4f4" opacity="0.6" transform="rotate(-32 519 218)"/><rect x="665" y="373" width="7" height="4" fill="#f4f4f4" opacity="0.9" transform="rotate(-36 665 373)"/><rect x="773" y="99" width="8" height="4" fill="#1a1a28" opacity="0.8" transform="rotate(-70 773 99)"/><rect x="634" y="410" width="11" height="3" fill="#f4f4f4" opacity="0.7" transform="rotate(12 634 410)"/><rect x="1313" y="135" width="10" height="3" fill="#e8b0c8" opacity="0.9" transform="rotate(53 1313 135)"/><rect x="1364" y="339" width="7" height="3" fill="#d0d8f4" opacity="0.8" transform="rotate(-6 1364 339)"/><rect x="1252" y="415" width="11" height="3" fill="#d0d8f4" opacity="0.6" transform="rotate(-68 1252 415)"/><rect x="746" y="180" width="6" height="3" fill="#ffffff" opacity="0.7" transform="rotate(-57 746 180)"/><rect x="1311" y="596" width="10" height="3" fill="#b8e4cc" opacity="0.6" transform="rotate(32 1311 596)"/><rect x="655" y="556" width="8" height="3" fill="#e8b0c8" opacity="0.9" transform="rotate(-64 655 556)"/><rect x="1253" y="88" width="7" height="3" fill="#d0d8f4" opacity="0.8" transform="rotate(31 1253 88)"/><rect x="717" y="479" width="8" height="4" fill="#ece2b0" opacity="0.6" transform="rotate(10 717 479)"/><rect x="898" y="189" width="9" height="3" fill="#f0a8a0" opacity="0.7" transform="rotate(-49 898 189)"/><rect x="894" y="797" width="6" height="3" fill="#1a1a28" opacity="0.7" transform="rotate(31 894 797)"/><rect x="1044" y="21" width="9" height="3" fill="#f0a8a0" opacity="0.9" transform="rotate(-63 1044 21)"/><rect x="1110" y="549" width="11" height="4" fill="#b8e4cc" opacity="0.7" transform="rotate(-37 1110 549)"/><rect x="1255" y="740" width="8" height="3" fill="#d0d8f4" opacity="0.6" transform="rotate(-44 1255 740)"/><rect x="431" y="483" width="11" height="4" fill="#ece2b0" opacity="0.9" transform="rotate(-6 431 483)"/><rect x="789" y="591" width="8" height="3" fill="#ece2b0" opacity="0.5" transform="rotate(40 789 591)"/><rect x="1070" y="479" width="8" height="3" fill="#f2c8d0" opacity="0.8" transform="rotate(60 1070 479)"/><rect x="780" y="732" width="6" height="3" fill="#e8b0c8" opacity="0.6" transform="rotate(48 780 732)"/><rect x="1053" y="774" width="11" height="3" fill="#f2c8d0" opacity="0.6" transform="rotate(15 1053 774)"/><rect x="1146" y="405" width="10" height="3" fill="#b8e4cc" opacity="0.6" transform="rotate(-25 1146 405)"/><rect x="902" y="244" width="9" height="4" fill="#f0a8a0" opacity="0.9" transform="rotate(2 902 244)"/><rect x="843" y="592" width="7" height="4" fill="#ece2b0" opacity="0.8" transform="rotate(-40 843 592)"/><rect x="676" y="359" width="10" height="4" fill="#f0a8a0" opacity="0.7" transform="rotate(-46 676 359)"/><rect x="677" y="633" width="11" height="3" fill="#f0a8a0" opacity="0.6" transform="rotate(59 677 633)"/><rect x="1022" y="751" width="8" height="3" fill="#ece2b0" opacity="0.6" transform="rotate(67 1022 751)"/><rect x="439" y="629" width="7" height="4" fill="#ece2b0" opacity="0.5" transform="rotate(35 439 629)"/><rect x="1143" y="261" width="7" height="3" fill="#d0d8f4" opacity="0.8" transform="rotate(-31 1143 261)"/><rect x="635" y="568" width="6" height="4" fill="#f2c8d0" opacity="0.8" transform="rotate(9 635 568)"/><rect x="1359" y="709" width="6" height="3" fill="#b8e4cc" opacity="0.6" transform="rotate(51 1359 709)"/><rect x="1030" y="805" width="10" height="3" fill="#f0a8a0" opacity="0.6" transform="rotate(-64 1030 805)"/><rect x="1061" y="532" width="8" height="4" fill="#f2c8d0" opacity="0.8" transform="rotate(-28 1061 532)"/><rect x="852" y="780" width="10" height="3" fill="#d0d8f4" opacity="0.6" transform="rotate(29 852 780)"/><rect x="957" y="807" width="6" height="3" fill="#ece2b0" opacity="0.8" transform="rotate(-21 957 807)"/><rect x="1102" y="272" width="7" height="3" fill="#e8b0c8" opacity="0.7" transform="rotate(51 1102 272)"/><rect x="1236" y="82" width="7" height="3" fill="#ffffff" opacity="0.6" transform="rotate(2 1236 82)"/><rect x="1527" y="779" width="8" height="3" fill="#d0d8f4" opacity="0.9" transform="rotate(-47 1527 779)"/><rect x="1236" y="109" width="9" height="4" fill="#f0a8a0" opacity="0.9" transform="rotate(-52 1236 109)"/><rect x="1005" y="710" width="11" height="3" fill="#1a1a28" opacity="0.8" transform="rotate(-48 1005 710)"/><rect x="733" y="136" width="8" height="3" fill="#f0a8a0" opacity="0.7" transform="rotate(-45 733 136)"/><rect x="909" y="448" width="9" height="3" fill="#f2c8d0" opacity="0.7" transform="rotate(42 909 448)"/><rect x="714" y="610" width="6" height="4" fill="#f2c8d0" opacity="0.8" transform="rotate(8 714 610)"/><rect x="770" y="496" width="7" height="3" fill="#f4f4f4" opacity="0.7" transform="rotate(51 770 496)"/><rect x="1353" y="650" width="10" height="4" fill="#ece2b0" opacity="0.8" transform="rotate(-26 1353 650)"/><rect x="1253" y="217" width="7" height="3" fill="#ffffff" opacity="0.7" transform="rotate(21 1253 217)"/><rect x="1079" y="257" width="9" height="4" fill="#d0d8f4" opacity="0.8" transform="rotate(54 1079 257)"/><rect x="722" y="430" width="9" height="3" fill="#d0d8f4" opacity="0.7" transform="rotate(8 722 430)"/><rect x="1049" y="710" width="9" height="4" fill="#1a1a28" opacity="0.5" transform="rotate(22 1049 710)"/><rect x="1062" y="662" width="9" height="3" fill="#1a1a28" opacity="0.9" transform="rotate(6 1062 662)"/><rect x="819" y="197" width="9" height="4" fill="#f4f4f4" opacity="0.9" transform="rotate(-8 819 197)"/><rect x="937" y="33" width="6" height="3" fill="#ece2b0" opacity="0.7" transform="rotate(39 937 33)"/><rect x="1099" y="697" width="10" height="4" fill="#ffffff" opacity="0.9" transform="rotate(11 1099 697)"/><rect x="858" y="-6" width="10" height="3" fill="#e8b0c8" opacity="0.8" transform="rotate(-26 858 -6)"/><rect x="1020" y="558" width="8" height="3" fill="#e8b0c8" opacity="0.6" transform="rotate(43 1020 558)"/><rect x="700" y="795" width="10" height="3" fill="#f4f4f4" opacity="0.7" transform="rotate(7 700 795)"/><rect x="590" y="583" width="10" height="3" fill="#ffffff" opacity="0.5" transform="rotate(69 590 583)"/><rect x="1061" y="463" width="8" height="3" fill="#f2c8d0" opacity="0.7" transform="rotate(-7 1061 463)"/><rect x="1059" y="437" width="10" height="4" fill="#e8b0c8" opacity="0.8" transform="rotate(11 1059 437)"/><rect x="508" y="784" width="10" height="4" fill="#f2c8d0" opacity="0.7" transform="rotate(-59 508 784)"/><rect x="1364" y="163" width="7" height="3" fill="#1a1a28" opacity="0.6" transform="rotate(-22 1364 163)"/><rect x="760" y="37" width="9" height="3" fill="#e8b0c8" opacity="0.7" transform="rotate(24 760 37)"/><rect x="904" y="466" width="9" height="3" fill="#f0a8a0" opacity="0.7" transform="rotate(-6 904 466)"/><rect x="473" y="71" width="8" height="3" fill="#f4f4f4" opacity="0.9" transform="rotate(1 473 71)"/><rect x="1115" y="136" width="7" height="4" fill="#f2c8d0" opacity="0.6" transform="rotate(68 1115 136)"/><rect x="657" y="473" width="11" height="3" fill="#d0d8f4" opacity="0.6" transform="rotate(35 657 473)"/><rect x="863" y="108" width="10" height="3" fill="#f2c8d0" opacity="0.7" transform="rotate(49 863 108)"/><rect x="434" y="806" width="8" height="3" fill="#f4f4f4" opacity="0.7" transform="rotate(0 434 806)"/><rect x="1346" y="784" width="7" height="3" fill="#f0a8a0" opacity="0.8" transform="rotate(62 1346 784)"/><rect x="972" y="522" width="6" height="3" fill="#1a1a28" opacity="0.9" transform="rotate(29 972 522)"/><rect x="951" y="5" width="8" height="4" fill="#d0d8f4" opacity="0.5" transform="rotate(-34 951 5)"/><rect x="648" y="483" width="8" height="3" fill="#f2c8d0" opacity="0.6" transform="rotate(-34 648 483)"/><rect x="915" y="55" width="11" height="4" fill="#b8e4cc" opacity="0.9" transform="rotate(-6 915 55)"/><rect x="1306" y="218" width="9" height="4" fill="#f0a8a0" opacity="0.7" transform="rotate(32 1306 218)"/><rect x="810" y="454" width="10" height="3" fill="#f4f4f4" opacity="0.7" transform="rotate(50 810 454)"/><rect x="1039" y="652" width="10" height="3" fill="#f0a8a0" opacity="0.7" transform="rotate(-13 1039 652)"/><rect x="894" y="-8" width="6" height="4" fill="#f0a8a0" opacity="0.7" transform="rotate(-52 894 -8)"/><rect x="597" y="584" width="10" height="4" fill="#d0d8f4" opacity="0.6" transform="rotate(-66 597 584)"/><rect x="727" y="40" width="7" height="3" fill="#ffffff" opacity="0.6" transform="rotate(-55 727 40)"/><rect x="1185" y="355" width="11" height="3" fill="#ffffff" opacity="0.9" transform="rotate(-26 1185 355)"/><rect x="1070" y="121" width="8" height="3" fill="#f2c8d0" opacity="0.7" transform="rotate(5 1070 121)"/><rect x="650" y="752" width="7" height="4" fill="#d0d8f4" opacity="0.9" transform="rotate(24 650 752)"/><rect x="1364" y="332" width="11" height="3" fill="#1a1a28" opacity="0.7" transform="rotate(-51 1364 332)"/><rect x="1202" y="762" width="7" height="3" fill="#e8b0c8" opacity="0.6" transform="rotate(14 1202 762)"/><rect x="694" y="666" width="7" height="3" fill="#1a1a28" opacity="0.7" transform="rotate(44 694 666)"/><rect x="1265" y="400" width="9" height="4" fill="#b8e4cc" opacity="0.7" transform="rotate(-50 1265 400)"/><rect x="1085" y="244" width="8" height="4" fill="#ffffff" opacity="0.5" transform="rotate(18 1085 244)"/><rect x="964" y="49" width="6" height="3" fill="#e8b0c8" opacity="0.9" transform="rotate(-66 964 49)"/><rect x="1328" y="276" width="8" height="3" fill="#b8e4cc" opacity="0.7" transform="rotate(21 1328 276)"/><rect x="1334" y="208" width="10" height="3" fill="#d0d8f4" opacity="0.8" transform="rotate(-35 1334 208)"/><rect x="1033" y="543" width="6" height="4" fill="#f4f4f4" opacity="0.9" transform="rotate(63 1033 543)"/><rect x="889" y="314" width="9" height="3" fill="#f4f4f4" opacity="0.9" transform="rotate(-9 889 314)"/><rect x="933" y="107" width="6" height="4" fill="#ffffff" opacity="0.6" transform="rotate(24 933 107)"/><rect x="511" y="212" width="9" height="3" fill="#d0d8f4" opacity="0.5" transform="rotate(-22 511 212)"/><rect x="990" y="357" width="10" height="3" fill="#ffffff" opacity="0.9" transform="rotate(50 990 357)"/><rect x="860" y="645" width="10" height="3" fill="#f2c8d0" opacity="0.9" transform="rotate(-68 860 645)"/><rect x="561" y="784" width="8" height="3" fill="#f4f4f4" opacity="0.8" transform="rotate(26 561 784)"/><rect x="892" y="421" width="9" height="4" fill="#ece2b0" opacity="0.9" transform="rotate(10 892 421)"/><rect x="1080" y="790" width="6" height="4" fill="#d0d8f4" opacity="0.9" transform="rotate(-38 1080 790)"/><rect x="724" y="405" width="10" height="3" fill="#f4f4f4" opacity="0.8" transform="rotate(-27 724 405)"/><rect x="1341" y="269" width="8" height="4" fill="#b8e4cc" opacity="0.6" transform="rotate(28 1341 269)"/><rect x="1259" y="466" width="8" height="3" fill="#f2c8d0" opacity="0.5" transform="rotate(-59 1259 466)"/><rect x="575" y="439" width="8" height="4" fill="#f4f4f4" opacity="0.6" transform="rotate(-58 575 439)"/><rect x="877" y="504" width="7" height="3" fill="#f0a8a0" opacity="0.7" transform="rotate(-15 877 504)"/><rect x="423" y="523" width="8" height="3" fill="#ffffff" opacity="0.6" transform="rotate(70 423 523)"/><rect x="870" y="241" width="9" height="3" fill="#e8b0c8" opacity="0.7" transform="rotate(57 870 241)"/><rect x="969" y="-9" width="11" height="4" fill="#f2c8d0" opacity="0.9" transform="rotate(-52 969 -9)"/><rect x="933" y="692" width="7" height="3" fill="#d0d8f4" opacity="0.7" transform="rotate(6 933 692)"/><rect x="548" y="160" width="6" height="3" fill="#d0d8f4" opacity="0.6" transform="rotate(-36 548 160)"/><rect x="953" y="112" width="9" height="3" fill="#f4f4f4" opacity="0.8" transform="rotate(13 953 112)"/><rect x="1241" y="57" width="8" height="3" fill="#ffffff" opacity="0.9" transform="rotate(47 1241 57)"/><rect x="1230" y="456" width="7" height="3" fill="#b8e4cc" opacity="0.8" transform="rotate(17 1230 456)"/><rect x="1221" y="505" width="8" height="3" fill="#f0a8a0" opacity="0.5" transform="rotate(-68 1221 505)"/><rect x="997" y="277" width="7" height="4" fill="#1a1a28" opacity="0.6" transform="rotate(45 997 277)"/><rect x="792" y="154" width="8" height="3" fill="#f0a8a0" opacity="0.7" transform="rotate(-12 792 154)"/><rect x="1290" y="221" width="9" height="3" fill="#b8e4cc" opacity="0.7" transform="rotate(3 1290 221)"/><rect x="1170" y="143" width="8" height="3" fill="#d0d8f4" opacity="0.8" transform="rotate(27 1170 143)"/><rect x="915" y="63" width="7" height="3" fill="#f4f4f4" opacity="0.8" transform="rotate(4 915 63)"/><rect x="633" y="297" width="11" height="3" fill="#d0d8f4" opacity="0.9" transform="rotate(65 633 297)"/><rect x="726" y="438" width="10" height="4" fill="#e8b0c8" opacity="0.9" transform="rotate(38 726 438)"/><rect x="1167" y="655" width="11" height="3" fill="#b8e4cc" opacity="0.6" transform="rotate(-28 1167 655)"/><rect x="682" y="182" width="10" height="3" fill="#ffffff" opacity="0.9" transform="rotate(29 682 182)"/><rect x="840" y="333" width="7" height="3" fill="#1a1a28" opacity="0.9" transform="rotate(66 840 333)"/><rect x="936" y="401" width="11" height="3" fill="#f4f4f4" opacity="0.8" transform="rotate(-20 936 401)"/><rect x="870" y="52" width="10" height="3" fill="#ffffff" opacity="0.7" transform="rotate(66 870 52)"/><rect x="1307" y="430" width="8" height="3" fill="#e8b0c8" opacity="0.5" transform="rotate(-67 1307 430)"/><rect x="860" y="637" width="8" height="3" fill="#f4f4f4" opacity="0.6" transform="rotate(15 860 637)"/><rect x="1102" y="792" width="11" height="3" fill="#ece2b0" opacity="0.9" transform="rotate(-24 1102 792)"/><rect x="611" y="790" width="9" height="3" fill="#d0d8f4" opacity="0.8" transform="rotate(46 611 790)"/><rect x="1121" y="588" width="7" height="4" fill="#f0a8a0" opacity="0.7" transform="rotate(9 1121 588)"/><rect x="822" y="752" width="8" height="3" fill="#b8e4cc" opacity="0.7" transform="rotate(55 822 752)"/><rect x="783" y="138" width="10" height="3" fill="#ffffff" opacity="0.9" transform="rotate(63 783 138)"/><rect x="1251" y="640" width="10" height="4" fill="#f2c8d0" opacity="0.7" transform="rotate(-54 1251 640)"/><rect x="1116" y="666" width="8" height="4" fill="#f0a8a0" opacity="0.9" transform="rotate(-3 1116 666)"/><rect x="1108" y="679" width="9" height="3" fill="#ece2b0" opacity="0.6" transform="rotate(-0 1108 679)"/><rect x="893" y="211" width="6" height="3" fill="#b8e4cc" opacity="0.7" transform="rotate(31 893 211)"/><rect x="515" y="782" width="9" height="3" fill="#ece2b0" opacity="0.9" transform="rotate(52 515 782)"/><rect x="597" y="525" width="9" height="4" fill="#ece2b0" opacity="0.7" transform="rotate(64 597 525)"/><rect x="1277" y="436" width="8" height="4" fill="#d0d8f4" opacity="0.9" transform="rotate(61 1277 436)"/><rect x="1345" y="47" width="8" height="3" fill="#f2c8d0" opacity="0.6" transform="rotate(-34 1345 47)"/><rect x="945" y="77" width="8" height="3" fill="#ece2b0" opacity="0.6" transform="rotate(40 945 77)"/><rect x="1267" y="631" width="8" height="3" fill="#ece2b0" opacity="0.6" transform="rotate(-58 1267 631)"/><rect x="889" y="718" width="7" height="3" fill="#f2c8d0" opacity="0.8" transform="rotate(-58 889 718)"/><rect x="1330" y="71" width="9" height="4" fill="#e8b0c8" opacity="0.5" transform="rotate(-52 1330 71)"/><rect x="895" y="471" width="8" height="3" fill="#f2c8d0" opacity="0.6" transform="rotate(46 895 471)"/><rect x="1052" y="209" width="9" height="4" fill="#d0d8f4" opacity="0.6" transform="rotate(66 1052 209)"/><rect x="1036" y="647" width="10" height="3" fill="#ffffff" opacity="0.6" transform="rotate(69 1036 647)"/><rect x="1009" y="497" width="9" height="4" fill="#f4f4f4" opacity="0.5" transform="rotate(-69 1009 497)"/><rect x="1129" y="136" width="9" height="3" fill="#f2c8d0" opacity="0.9" transform="rotate(58 1129 136)"/><rect x="1282" y="495" width="6" height="3" fill="#e8b0c8" opacity="0.7" transform="rotate(16 1282 495)"/><rect x="742" y="85" width="7" height="3" fill="#f2c8d0" opacity="0.6" transform="rotate(-59 742 85)"/><rect x="942" y="321" width="8" height="3" fill="#f2c8d0" opacity="0.8" transform="rotate(57 942 321)"/><rect x="684" y="700" width="8" height="3" fill="#1a1a28" opacity="0.6" transform="rotate(11 684 700)"/><rect x="745" y="383" width="10" height="3" fill="#d0d8f4" opacity="0.7" transform="rotate(1 745 383)"/><rect x="845" y="404" width="10" height="4" fill="#f2c8d0" opacity="0.6" transform="rotate(-57 845 404)"/><rect x="606" y="175" width="10" height="3" fill="#f0a8a0" opacity="0.6" transform="rotate(-20 606 175)"/><rect x="952" y="240" width="9" height="3" fill="#f4f4f4" opacity="0.5" transform="rotate(-27 952 240)"/><rect x="1163" y="502" width="7" height="3" fill="#b8e4cc" opacity="0.9" transform="rotate(-17 1163 502)"/><rect x="806" y="555" width="9" height="3" fill="#f0a8a0" opacity="0.9" transform="rotate(-40 806 555)"/><rect x="835" y="396" width="8" height="4" fill="#f4f4f4" opacity="0.7" transform="rotate(-11 835 396)"/><rect x="1384" y="223" width="8" height="4" fill="#f4f4f4" opacity="0.6" transform="rotate(-2 1384 223)"/><rect x="1099" y="6" width="9" height="3" fill="#ece2b0" opacity="0.5" transform="rotate(-35 1099 6)"/><rect x="944" y="15" width="10" height="3" fill="#e8b0c8" opacity="0.5" transform="rotate(21 944 15)"/><rect x="705" y="5" width="7" height="3" fill="#f2c8d0" opacity="0.7" transform="rotate(25 705 5)"/><rect x="1219" y="127" width="10" height="4" fill="#f2c8d0" opacity="0.6" transform="rotate(51 1219 127)"/><rect x="1275" y="550" width="7" height="3" fill="#f2c8d0" opacity="0.5" transform="rotate(-20 1275 550)"/><rect x="899" y="453" width="11" height="3" fill="#f2c8d0" opacity="0.8" transform="rotate(53 899 453)"/><rect x="739" y="748" width="10" height="4" fill="#b8e4cc" opacity="0.9" transform="rotate(55 739 748)"/><rect x="1418" y="628" width="6" height="4" fill="#d0d8f4" opacity="0.7" transform="rotate(6 1418 628)"/><rect x="1383" y="134" width="11" height="3" fill="#ffffff" opacity="0.7" transform="rotate(56 1383 134)"/><rect x="1204" y="202" width="7" height="3" fill="#1a1a28" opacity="0.6" transform="rotate(9 1204 202)"/><rect x="803" y="236" width="8" height="3" fill="#ffffff" opacity="0.9" transform="rotate(37 803 236)"/><rect x="932" y="212" width="10" height="3" fill="#ffffff" opacity="0.6" transform="rotate(-58 932 212)"/><rect x="1239" y="819" width="11" height="3" fill="#b8e4cc" opacity="0.7" transform="rotate(42 1239 819)"/><rect x="971" y="142" width="9" height="3" fill="#f2c8d0" opacity="0.8" transform="rotate(-27 971 142)"/><rect x="504" y="399" width="8" height="3" fill="#d0d8f4" opacity="0.7" transform="rotate(-67 504 399)"/><rect x="942" y="203" width="9" height="3" fill="#ffffff" opacity="0.9" transform="rotate(-18 942 203)"/><rect x="863" y="530" width="9" height="4" fill="#e8b0c8" opacity="0.9" transform="rotate(-33 863 530)"/><rect x="1506" y="692" width="7" height="3" fill="#e8b0c8" opacity="0.5" transform="rotate(-18 1506 692)"/><rect x="1299" y="397" width="9" height="4" fill="#d0d8f4" opacity="0.5" transform="rotate(-60 1299 397)"/><rect x="653" y="111" width="6" height="4" fill="#f4f4f4" opacity="0.7" transform="rotate(48 653 111)"/><rect x="1572" y="795" width="7" height="3" fill="#d0d8f4" opacity="0.6" transform="rotate(-55 1572 795)"/><rect x="728" y="439" width="7" height="3" fill="#f0a8a0" opacity="0.9" transform="rotate(-36 728 439)"/><rect x="1294" y="489" width="7" height="4" fill="#b8e4cc" opacity="0.7" transform="rotate(27 1294 489)"/><rect x="618" y="343" width="9" height="3" fill="#e8b0c8" opacity="0.6" transform="rotate(51 618 343)"/><rect x="1495" y="528" width="9" height="3" fill="#d0d8f4" opacity="0.7" transform="rotate(-59 1495 528)"/><rect x="1003" y="818" width="6" height="3" fill="#d0d8f4" opacity="0.8" transform="rotate(-41 1003 818)"/><rect x="963" y="621" width="11" height="4" fill="#d0d8f4" opacity="0.8" transform="rotate(41 963 621)"/><rect x="800" y="444" width="10" height="4" fill="#e8b0c8" opacity="0.6" transform="rotate(18 800 444)"/><rect x="835" y="703" width="10" height="3" fill="#f4f4f4" opacity="0.5" transform="rotate(69 835 703)"/><rect x="1201" y="374" width="10" height="3" fill="#1a1a28" opacity="0.7" transform="rotate(-45 1201 374)"/><rect x="1162" y="727" width="9" height="4" fill="#e8b0c8" opacity="0.8" transform="rotate(7 1162 727)"/><rect x="1062" y="820" width="7" height="3" fill="#1a1a28" opacity="0.7" transform="rotate(-58 1062 820)"/><rect x="1229" y="28" width="9" height="3" fill="#1a1a28" opacity="0.5" transform="rotate(-34 1229 28)"/><rect x="514" y="261" width="10" height="4" fill="#e8b0c8" opacity="0.6" transform="rotate(-61 514 261)"/><rect x="1084" y="100" width="9" height="3" fill="#f4f4f4" opacity="0.7" transform="rotate(31 1084 100)"/><rect x="1064" y="769" width="11" height="3" fill="#f2c8d0" opacity="0.6" transform="rotate(5 1064 769)"/><rect x="807" y="546" width="8" height="4" fill="#ffffff" opacity="0.8" transform="rotate(-29 807 546)"/><rect x="723" y="798" width="8" height="3" fill="#d0d8f4" opacity="0.6" transform="rotate(-3 723 798)"/><rect x="1304" y="142" width="9" height="3" fill="#b8e4cc" opacity="0.9" transform="rotate(57 1304 142)"/><rect x="1144" y="572" width="10" height="4" fill="#f2c8d0" opacity="0.8" transform="rotate(-58 1144 572)"/><rect x="686" y="346" width="9" height="3" fill="#f2c8d0" opacity="0.9" transform="rotate(-8 686 346)"/><rect x="1081" y="322" width="6" height="4" fill="#e8b0c8" opacity="0.9" transform="rotate(-26 1081 322)"/><rect x="1053" y="187" width="8" height="4" fill="#ece2b0" opacity="0.9" transform="rotate(-6 1053 187)"/><rect x="1131" y="800" width="10" height="3" fill="#1a1a28" opacity="0.6" transform="rotate(17 1131 800)"/><rect x="999" y="472" width="9" height="3" fill="#f0a8a0" opacity="0.9" transform="rotate(-42 999 472)"/><rect x="698" y="220" width="10" height="3" fill="#e8b0c8" opacity="0.8" transform="rotate(21 698 220)"/><rect x="1139" y="765" width="10" height="3" fill="#e8b0c8" opacity="0.6" transform="rotate(-17 1139 765)"/><rect x="1036" y="656" width="7" height="3" fill="#f2c8d0" opacity="0.9" transform="rotate(-66 1036 656)"/><rect x="702" y="417" width="8" height="4" fill="#f4f4f4" opacity="0.7" transform="rotate(29 702 417)"/><rect x="900" y="409" width="6" height="4" fill="#d0d8f4" opacity="0.5" transform="rotate(11 900 409)"/><rect x="1455" y="536" width="10" height="4" fill="#b8e4cc" opacity="0.7" transform="rotate(-62 1455 536)"/><rect x="785" y="101" width="10" height="4" fill="#1a1a28" opacity="0.5" transform="rotate(1 785 101)"/><rect x="1199" y="499" width="11" height="3" fill="#f4f4f4" opacity="0.7" transform="rotate(3 1199 499)"/><rect x="1350" y="646" width="10" height="4" fill="#ffffff" opacity="0.5" transform="rotate(-40 1350 646)"/><rect x="1359" y="477" width="8" height="3" fill="#1a1a28" opacity="0.8" transform="rotate(-6 1359 477)"/><rect x="1345" y="503" width="10" height="4" fill="#f4f4f4" opacity="0.7" transform="rotate(-29 1345 503)"/><rect x="1416" y="624" width="9" height="3" fill="#f2c8d0" opacity="0.9" transform="rotate(57 1416 624)"/><rect x="629" y="271" width="10" height="4" fill="#ffffff" opacity="0.9" transform="rotate(48 629 271)"/><rect x="893" y="686" width="9" height="3" fill="#b8e4cc" opacity="0.7" transform="rotate(67 893 686)"/><rect x="1283" y="71" width="10" height="3" fill="#b8e4cc" opacity="0.5" transform="rotate(53 1283 71)"/><rect x="618" y="758" width="10" height="3" fill="#e8b0c8" opacity="0.5" transform="rotate(-20 618 758)"/><rect x="1336" y="336" width="7" height="3" fill="#ffffff" opacity="0.9" transform="rotate(30 1336 336)"/><rect x="1001" y="283" width="6" height="3" fill="#ece2b0" opacity="0.7" transform="rotate(5 1001 283)"/><rect x="600" y="378" width="7" height="3" fill="#b8e4cc" opacity="0.7" transform="rotate(-4 600 378)"/><rect x="494" y="363" width="8" height="4" fill="#1a1a28" opacity="0.7" transform="rotate(-15 494 363)"/><rect x="932" y="718" width="8" height="3" fill="#ffffff" opacity="0.8" transform="rotate(50 932 718)"/><rect x="1037" y="643" width="7" height="3" fill="#f2c8d0" opacity="0.6" transform="rotate(60 1037 643)"/><rect x="1246" y="117" width="10" height="3" fill="#f0a8a0" opacity="0.9" transform="rotate(-64 1246 117)"/><rect x="776" y="146" width="11" height="3" fill="#f2c8d0" opacity="0.6" transform="rotate(47 776 146)"/><rect x="1371" y="422" width="9" height="3" fill="#f0a8a0" opacity="0.7" transform="rotate(7 1371 422)"/><rect x="1122" y="635" width="9" height="3" fill="#ece2b0" opacity="0.5" transform="rotate(-58 1122 635)"/><rect x="855" y="336" width="7" height="3" fill="#e8b0c8" opacity="0.9" transform="rotate(52 855 336)"/><rect x="1339" y="47" width="10" height="3" fill="#ece2b0" opacity="0.6" transform="rotate(-59 1339 47)"/><rect x="1024" y="686" width="7" height="3" fill="#d0d8f4" opacity="0.9" transform="rotate(49 1024 686)"/><rect x="774" y="568" width="6" height="3" fill="#f2c8d0" opacity="0.6" transform="rotate(-33 774 568)"/><rect x="836" y="98" width="8" height="3" fill="#e8b0c8" opacity="0.9" transform="rotate(39 836 98)"/><rect x="1303" y="132" width="11" height="4" fill="#e8b0c8" opacity="0.6" transform="rotate(9 1303 132)"/><rect x="1007" y="588" width="8" height="3" fill="#d0d8f4" opacity="0.8" transform="rotate(-61 1007 588)"/><rect x="1126" y="677" width="6" height="4" fill="#b8e4cc" opacity="0.9" transform="rotate(1 1126 677)"/><rect x="1349" y="783" width="7" height="3" fill="#f4f4f4" opacity="0.6" transform="rotate(44 1349 783)"/><rect x="829" y="666" width="7" height="3" fill="#e8b0c8" opacity="0.7" transform="rotate(-69 829 666)"/><rect x="974" y="413" width="7" height="3" fill="#b8e4cc" opacity="0.6" transform="rotate(-34 974 413)"/><rect x="858" y="377" width="9" height="4" fill="#f0a8a0" opacity="0.6" transform="rotate(-69 858 377)"/><rect x="991" y="596" width="10" height="4" fill="#ffffff" opacity="0.8" transform="rotate(65 991 596)"/><rect x="178" y="230" width="9" height="3" fill="#ece2b0" opacity="0.6" transform="rotate(45 178 230)"/><rect x="832" y="722" width="6" height="4" fill="#e8b0c8" opacity="0.8" transform="rotate(-35 832 722)"/><rect x="397" y="376" width="10" height="4" fill="#ece2b0" opacity="0.8" transform="rotate(64 397 376)"/><rect x="830" y="404" width="9" height="3" fill="#ece2b0" opacity="0.9" transform="rotate(-33 830 404)"/><rect x="709" y="569" width="9" height="3" fill="#e8b0c8" opacity="0.5" transform="rotate(10 709 569)"/><rect x="1250" y="54" width="7" height="4" fill="#1a1a28" opacity="0.9" transform="rotate(-65 1250 54)"/><rect x="944" y="299" width="8" height="4" fill="#f4f4f4" opacity="0.5" transform="rotate(6 944 299)"/><rect x="1415" y="197" width="11" height="4" fill="#d0d8f4" opacity="0.9" transform="rotate(-43 1415 197)"/><rect x="1320" y="739" width="10" height="3" fill="#b8e4cc" opacity="0.8" transform="rotate(-58 1320 739)"/><rect x="891" y="260" width="10" height="3" fill="#b8e4cc" opacity="0.9" transform="rotate(-51 891 260)"/><rect x="1107" y="56" width="9" height="3" fill="#f0a8a0" opacity="0.9" transform="rotate(23 1107 56)"/><rect x="1319" y="650" width="8" height="3" fill="#e8b0c8" opacity="0.7" transform="rotate(69 1319 650)"/><rect x="1336" y="800" width="7" height="4" fill="#1a1a28" opacity="0.9" transform="rotate(-27 1336 800)"/><rect x="864" y="560" width="11" height="3" fill="#f2c8d0" opacity="0.6" transform="rotate(65 864 560)"/><rect x="647" y="286" width="10" height="3" fill="#1a1a28" opacity="0.6" transform="rotate(53 647 286)"/><rect x="1328" y="99" width="10" height="4" fill="#f0a8a0" opacity="0.6" transform="rotate(-8 1328 99)"/><rect x="1034" y="695" width="11" height="3" fill="#e8b0c8" opacity="0.9" transform="rotate(-20 1034 695)"/><rect x="1109" y="814" width="8" height="3" fill="#e8b0c8" opacity="0.9" transform="rotate(-35 1109 814)"/><rect x="511" y="458" width="10" height="4" fill="#f2c8d0" opacity="0.6" transform="rotate(1 511 458)"/><rect x="635" y="570" width="10" height="4" fill="#ffffff" opacity="0.9" transform="rotate(13 635 570)"/><rect x="827" y="671" width="6" height="3" fill="#b8e4cc" opacity="0.6" transform="rotate(64 827 671)"/><rect x="769" y="663" width="10" height="3" fill="#ece2b0" opacity="0.8" transform="rotate(-11 769 663)"/><rect x="878" y="322" width="11" height="3" fill="#ece2b0" opacity="0.5" transform="rotate(69 878 322)"/><rect x="1306" y="725" width="10" height="3" fill="#ffffff" opacity="0.8" transform="rotate(13 1306 725)"/><rect x="752" y="170" width="10" height="3" fill="#ece2b0" opacity="0.6" transform="rotate(-15 752 170)"/><rect x="900" y="412" width="9" height="3" fill="#e8b0c8" opacity="0.9" transform="rotate(-6 900 412)"/><rect x="941" y="-3" width="6" height="3" fill="#1a1a28" opacity="0.6" transform="rotate(34 941 -3)"/><rect x="984" y="284" width="8" height="3" fill="#f0a8a0" opacity="0.7" transform="rotate(70 984 284)"/><rect x="764" y="122" width="9" height="4" fill="#f2c8d0" opacity="0.9" transform="rotate(-17 764 122)"/><rect x="1083" y="281" width="8" height="4" fill="#e8b0c8" opacity="0.8" transform="rotate(55 1083 281)"/><rect x="683" y="136" width="8" height="3" fill="#d0d8f4" opacity="0.9" transform="rotate(-42 683 136)"/><rect x="798" y="582" width="9" height="3" fill="#f4f4f4" opacity="0.6" transform="rotate(-25 798 582)"/><rect x="674" y="10" width="10" height="4" fill="#f0a8a0" opacity="0.9" transform="rotate(53 674 10)"/><rect x="975" y="-9" width="10" height="3" fill="#f2c8d0" opacity="0.6" transform="rotate(-38 975 -9)"/><rect x="1281" y="341" width="11" height="3" fill="#f2c8d0" opacity="0.8" transform="rotate(13 1281 341)"/><rect x="1048" y="808" width="7" height="3" fill="#e8b0c8" opacity="0.8" transform="rotate(-60 1048 808)"/><rect x="1194" y="46" width="9" height="3" fill="#f0a8a0" opacity="0.5" transform="rotate(17 1194 46)"/><rect x="1066" y="653" width="8" height="3" fill="#ece2b0" opacity="0.7" transform="rotate(-56 1066 653)"/><rect x="610" y="624" width="7" height="3" fill="#f2c8d0" opacity="0.6" transform="rotate(-40 610 624)"/><rect x="962" y="377" width="7" height="4" fill="#f4f4f4" opacity="0.6" transform="rotate(31 962 377)"/><rect x="892" y="26" width="9" height="4" fill="#d0d8f4" opacity="0.9" transform="rotate(-69 892 26)"/><rect x="1190" y="804" width="10" height="3" fill="#f4f4f4" opacity="0.6" transform="rotate(69 1190 804)"/><rect x="1201" y="402" width="7" height="4" fill="#f0a8a0" opacity="0.9" transform="rotate(-66 1201 402)"/><rect x="1072" y="176" width="9" height="3" fill="#f2c8d0" opacity="0.9" transform="rotate(-40 1072 176)"/><rect x="1417" y="311" width="7" height="4" fill="#f2c8d0" opacity="0.7" transform="rotate(15 1417 311)"/><rect x="1271" y="326" width="10" height="3" fill="#ece2b0" opacity="0.9" transform="rotate(36 1271 326)"/><rect x="1229" y="110" width="9" height="3" fill="#f0a8a0" opacity="0.8" transform="rotate(61 1229 110)"/><rect x="909" y="201" width="8" height="4" fill="#f2c8d0" opacity="0.6" transform="rotate(20 909 201)"/><rect x="535" y="36" width="8" height="4" fill="#f2c8d0" opacity="0.9" transform="rotate(-31 535 36)"/><rect x="1292" y="650" width="7" height="4" fill="#d0d8f4" opacity="0.7" transform="rotate(61 1292 650)"/><rect x="1142" y="658" width="7" height="4" fill="#d0d8f4" opacity="0.9" transform="rotate(-50 1142 658)"/><rect x="708" y="-10" width="8" height="3" fill="#ece2b0" opacity="0.6" transform="rotate(-51 708 -10)"/><rect x="862" y="426" width="6" height="3" fill="#1a1a28" opacity="0.5" transform="rotate(25 862 426)"/><rect x="1324" y="471" width="10" height="4" fill="#ece2b0" opacity="0.5" transform="rotate(41 1324 471)"/><rect x="653" y="12" width="8" height="3" fill="#f0a8a0" opacity="0.8" transform="rotate(2 653 12)"/><rect x="773" y="491" width="7" height="3" fill="#1a1a28" opacity="0.5" transform="rotate(4 773 491)"/><rect x="1322" y="669" width="9" height="3" fill="#f4f4f4" opacity="0.7" transform="rotate(-14 1322 669)"/><rect x="927" y="502" width="6" height="3" fill="#d0d8f4" opacity="0.9" transform="rotate(-45 927 502)"/><rect x="781" y="89" width="10" height="4" fill="#d0d8f4" opacity="0.9" transform="rotate(-56 781 89)"/><rect x="543" y="771" width="8" height="4" fill="#d0d8f4" opacity="0.8" transform="rotate(-65 543 771)"/><rect x="596" y="114" width="6" height="3" fill="#1a1a28" opacity="0.6" transform="rotate(15 596 114)"/><rect x="648" y="787" width="9" height="3" fill="#ffffff" opacity="0.8" transform="rotate(-11 648 787)"/><rect x="1013" y="639" width="11" height="3" fill="#ffffff" opacity="0.8" transform="rotate(7 1013 639)"/><rect x="1363" y="735" width="10" height="4" fill="#b8e4cc" opacity="0.5" transform="rotate(-7 1363 735)"/><rect x="1135" y="701" width="8" height="4" fill="#e8b0c8" opacity="0.6" transform="rotate(-33 1135 701)"/><rect x="850" y="714" width="9" height="3" fill="#ece2b0" opacity="0.7" transform="rotate(4 850 714)"/><rect x="792" y="645" width="8" height="4" fill="#d0d8f4" opacity="0.8" transform="rotate(59 792 645)"/><rect x="898" y="446" width="7" height="3" fill="#ece2b0" opacity="0.9" transform="rotate(-61 898 446)"/><rect x="1405" y="698" width="8" height="4" fill="#b8e4cc" opacity="0.6" transform="rotate(-34 1405 698)"/><rect x="773" y="260" width="10" height="3" fill="#f2c8d0" opacity="0.7" transform="rotate(42 773 260)"/><rect x="936" y="282" width="9" height="3" fill="#d0d8f4" opacity="0.8" transform="rotate(69 936 282)"/><rect x="996" y="140" width="7" height="3" fill="#f2c8d0" opacity="0.7" transform="rotate(-19 996 140)"/><rect x="1171" y="86" width="9" height="3" fill="#e8b0c8" opacity="0.7" transform="rotate(35 1171 86)"/><rect x="794" y="718" width="6" height="3" fill="#ece2b0" opacity="0.6" transform="rotate(-3 794 718)"/><rect x="953" y="211" width="10" height="3" fill="#f4f4f4" opacity="0.9" transform="rotate(60 953 211)"/><rect x="1360" y="261" width="7" height="3" fill="#b8e4cc" opacity="0.9" transform="rotate(37 1360 261)"/><rect x="1212" y="32" width="8" height="3" fill="#b8e4cc" opacity="0.7" transform="rotate(-53 1212 32)"/><rect x="1204" y="68" width="7" height="4" fill="#ffffff" opacity="0.5" transform="rotate(64 1204 68)"/><rect x="651" y="116" width="8" height="4" fill="#f0a8a0" opacity="0.8" transform="rotate(67 651 116)"/><rect x="675" y="632" width="9" height="3" fill="#f4f4f4" opacity="0.5" transform="rotate(24 675 632)"/><rect x="771" y="394" width="7" height="4" fill="#f4f4f4" opacity="0.8" transform="rotate(-10 771 394)"/><rect x="1357" y="484" width="11" height="4" fill="#f2c8d0" opacity="0.6" transform="rotate(-23 1357 484)"/><rect x="875" y="273" width="9" height="4" fill="#e8b0c8" opacity="0.8" transform="rotate(-62 875 273)"/><rect x="964" y="175" width="6" height="4" fill="#f2c8d0" opacity="0.5" transform="rotate(-7 964 175)"/><rect x="571" y="83" width="8" height="3" fill="#e8b0c8" opacity="0.7" transform="rotate(-20 571 83)"/><rect x="671" y="287" width="10" height="4" fill="#b8e4cc" opacity="0.6" transform="rotate(-28 671 287)"/><rect x="1071" y="134" width="7" height="3" fill="#f2c8d0" opacity="0.8" transform="rotate(-6 1071 134)"/><rect x="756" y="690" width="7" height="4" fill="#f0a8a0" opacity="0.8" transform="rotate(-9 756 690)"/><rect x="1432" y="535" width="7" height="3" fill="#e8b0c8" opacity="0.8" transform="rotate(-56 1432 535)"/><rect x="873" y="702" width="6" height="3" fill="#e8b0c8" opacity="0.6" transform="rotate(-67 873 702)"/><rect x="691" y="131" width="11" height="3" fill="#ffffff" opacity="0.9" transform="rotate(-2 691 131)"/><rect x="1061" y="534" width="9" height="3" fill="#ece2b0" opacity="0.8" transform="rotate(48 1061 534)"/><rect x="900" y="750" width="7" height="4" fill="#1a1a28" opacity="0.9" transform="rotate(-25 900 750)"/><rect x="869" y="640" width="6" height="3" fill="#d0d8f4" opacity="0.8" transform="rotate(10 869 640)"/><rect x="903" y="239" width="9" height="3" fill="#ffffff" opacity="0.7" transform="rotate(-47 903 239)"/><rect x="723" y="629" width="10" height="3" fill="#ffffff" opacity="0.6" transform="rotate(16 723 629)"/><rect x="1327" y="596" width="8" height="3" fill="#f2c8d0" opacity="0.6" transform="rotate(-16 1327 596)"/><rect x="927" y="160" width="10" height="3" fill="#d0d8f4" opacity="0.9" transform="rotate(-60 927 160)"/><rect x="1104" y="103" width="11" height="3" fill="#ece2b0" opacity="0.8" transform="rotate(-25 1104 103)"/><rect x="1148" y="507" width="6" height="3" fill="#f0a8a0" opacity="0.9" transform="rotate(-2 1148 507)"/><rect x="627" y="181" width="9" height="3" fill="#ffffff" opacity="0.8" transform="rotate(45 627 181)"/><rect x="1444" y="589" width="11" height="3" fill="#b8e4cc" opacity="0.8" transform="rotate(-5 1444 589)"/><rect x="1199" y="763" width="7" height="3" fill="#d0d8f4" opacity="0.8" transform="rotate(11 1199 763)"/><rect x="1055" y="121" width="8" height="3" fill="#e8b0c8" opacity="0.7" transform="rotate(-17 1055 121)"/><rect x="880" y="725" width="6" height="3" fill="#f0a8a0" opacity="0.7" transform="rotate(-54 880 725)"/><rect x="517" y="556" width="6" height="4" fill="#ffffff" opacity="0.8" transform="rotate(61 517 556)"/><rect x="1083" y="723" width="10" height="3" fill="#f4f4f4" opacity="0.8" transform="rotate(-47 1083 723)"/><rect x="1355" y="9" width="10" height="4" fill="#f4f4f4" opacity="0.6" transform="rotate(-25 1355 9)"/><rect x="1146" y="68" width="10" height="3" fill="#b8e4cc" opacity="0.9" transform="rotate(12 1146 68)"/><rect x="1255" y="173" width="11" height="3" fill="#f0a8a0" opacity="0.9" transform="rotate(-8 1255 173)"/><rect x="919" y="115" width="10" height="3" fill="#f0a8a0" opacity="0.7" transform="rotate(-57 919 115)"/><rect x="1232" y="617" width="10" height="4" fill="#e8b0c8" opacity="0.9" transform="rotate(59 1232 617)"/><rect x="784" y="119" width="6" height="3" fill="#d0d8f4" opacity="0.9" transform="rotate(-29 784 119)"/><rect x="688" y="119" width="9" height="4" fill="#ece2b0" opacity="0.9" transform="rotate(36 688 119)"/><rect x="1432" y="400" width="8" height="3" fill="#ffffff" opacity="0.7" transform="rotate(33 1432 400)"/><rect x="1023" y="549" width="8" height="4" fill="#f2c8d0" opacity="0.7" transform="rotate(62 1023 549)"/><rect x="688" y="282" width="8" height="3" fill="#e8b0c8" opacity="0.6" transform="rotate(-65 688 282)"/><rect x="898" y="290" width="8" height="3" fill="#f2c8d0" opacity="0.6" transform="rotate(-7 898 290)"/><rect x="807" y="708" width="9" height="3" fill="#ffffff" opacity="0.9" transform="rotate(66 807 708)"/><rect x="927" y="346" width="8" height="3" fill="#ece2b0" opacity="0.6" transform="rotate(31 927 346)"/><rect x="1376" y="624" width="9" height="3" fill="#b8e4cc" opacity="0.7" transform="rotate(14 1376 624)"/><rect x="1082" y="639" width="8" height="3" fill="#f0a8a0" opacity="0.6" transform="rotate(70 1082 639)"/><rect x="952" y="53" width="7" height="4" fill="#ffffff" opacity="0.9" transform="rotate(23 952 53)"/><rect x="1033" y="314" width="10" height="4" fill="#1a1a28" opacity="0.6" transform="rotate(-19 1033 314)"/><rect x="1128" y="160" width="9" height="3" fill="#e8b0c8" opacity="0.7" transform="rotate(-59 1128 160)"/><rect x="893" y="451" width="11" height="3" fill="#ffffff" opacity="0.9" transform="rotate(43 893 451)"/><rect x="989" y="430" width="9" height="4" fill="#f4f4f4" opacity="0.8" transform="rotate(22 989 430)"/><rect x="821" y="574" width="7" height="3" fill="#f0a8a0" opacity="0.8" transform="rotate(-63 821 574)"/><rect x="917" y="153" width="9" height="3" fill="#1a1a28" opacity="0.8" transform="rotate(28 917 153)"/><rect x="351" y="-3" width="9" height="3" fill="#1a1a28" opacity="0.8" transform="rotate(57 351 -3)"/><rect x="778" y="-2" width="9" height="3" fill="#ece2b0" opacity="0.7" transform="rotate(10 778 -2)"/><rect x="1019" y="79" width="10" height="3" fill="#ece2b0" opacity="0.7" transform="rotate(-26 1019 79)"/><rect x="1168" y="43" width="6" height="3" fill="#e8b0c8" opacity="0.6" transform="rotate(40 1168 43)"/><rect x="1355" y="591" width="7" height="3" fill="#f2c8d0" opacity="0.6" transform="rotate(24 1355 591)"/><rect x="1082" y="119" width="6" height="3" fill="#f2c8d0" opacity="0.9" transform="rotate(30 1082 119)"/><rect x="1032" y="767" width="11" height="3" fill="#e8b0c8" opacity="0.8" transform="rotate(-26 1032 767)"/><rect x="920" y="402" width="8" height="4" fill="#1a1a28" opacity="0.8" transform="rotate(-28 920 402)"/><rect x="706" y="269" width="10" height="4" fill="#b8e4cc" opacity="0.8" transform="rotate(-58 706 269)"/><rect x="915" y="173" width="7" height="3" fill="#ffffff" opacity="0.8" transform="rotate(-36 915 173)"/><rect x="1003" y="690" width="8" height="3" fill="#f0a8a0" opacity="0.7" transform="rotate(60 1003 690)"/><rect x="1399" y="369" width="7" height="3" fill="#f2c8d0" opacity="0.9" transform="rotate(63 1399 369)"/><rect x="472" y="567" width="9" height="3" fill="#e8b0c8" opacity="0.7" transform="rotate(-44 472 567)"/><rect x="887" y="802" width="8" height="4" fill="#f0a8a0" opacity="0.8" transform="rotate(-1 887 802)"/><rect x="1190" y="290" width="6" height="3" fill="#f2c8d0" opacity="0.8" transform="rotate(38 1190 290)"/><rect x="799" y="806" width="7" height="3" fill="#f2c8d0" opacity="0.7" transform="rotate(-41 799 806)"/><rect x="1169" y="669" width="7" height="3" fill="#f4f4f4" opacity="0.6" transform="rotate(6 1169 669)"/><rect x="548" y="147" width="10" height="3" fill="#f2c8d0" opacity="0.8" transform="rotate(-53 548 147)"/><rect x="989" y="103" width="7" height="3" fill="#ffffff" opacity="0.7" transform="rotate(-6 989 103)"/><rect x="1046" y="704" width="10" height="3" fill="#f4f4f4" opacity="0.6" transform="rotate(45 1046 704)"/><rect x="828" y="375" width="7" height="4" fill="#d0d8f4" opacity="0.8" transform="rotate(53 828 375)"/><rect x="1081" y="757" width="11" height="3" fill="#ffffff" opacity="0.9" transform="rotate(47 1081 757)"/><rect x="1379" y="450" width="7" height="3" fill="#f4f4f4" opacity="0.7" transform="rotate(50 1379 450)"/><rect x="932" y="694" width="8" height="3" fill="#b8e4cc" opacity="0.7" transform="rotate(-66 932 694)"/><rect x="1144" y="164" width="9" height="3" fill="#e8b0c8" opacity="0.5" transform="rotate(-58 1144 164)"/><rect x="906" y="293" width="7" height="4" fill="#e8b0c8" opacity="0.6" transform="rotate(-11 906 293)"/><rect x="1164" y="484" width="7" height="4" fill="#d0d8f4" opacity="0.8" transform="rotate(-10 1164 484)"/><rect x="735" y="594" width="9" height="3" fill="#ece2b0" opacity="0.6" transform="rotate(26 735 594)"/><rect x="1068" y="442" width="7" height="4" fill="#1a1a28" opacity="0.5" transform="rotate(-12 1068 442)"/><rect x="1038" y="749" width="11" height="3" fill="#d0d8f4" opacity="0.5" transform="rotate(-22 1038 749)"/><rect x="1224" y="22" width="9" height="4" fill="#f0a8a0" opacity="0.6" transform="rotate(-48 1224 22)"/><rect x="929" y="775" width="9" height="3" fill="#f2c8d0" opacity="0.6" transform="rotate(-46 929 775)"/><rect x="1199" y="393" width="9" height="4" fill="#ffffff" opacity="0.8" transform="rotate(-27 1199 393)"/><rect x="882" y="775" width="10" height="4" fill="#f4f4f4" opacity="0.9" transform="rotate(6 882 775)"/><rect x="1285" y="115" width="11" height="3" fill="#1a1a28" opacity="0.9" transform="rotate(-68 1285 115)"/><rect x="1038" y="611" width="8" height="3" fill="#f2c8d0" opacity="0.8" transform="rotate(68 1038 611)"/><rect x="1010" y="586" width="8" height="4" fill="#f2c8d0" opacity="0.6" transform="rotate(-6 1010 586)"/><rect x="488" y="744" width="11" height="3" fill="#f0a8a0" opacity="0.7" transform="rotate(68 488 744)"/><rect x="1294" y="568" width="6" height="3" fill="#d0d8f4" opacity="0.5" transform="rotate(29 1294 568)"/><rect x="343" y="535" width="9" height="3" fill="#f4f4f4" opacity="0.6" transform="rotate(-23 343 535)"/><rect x="1106" y="514" width="9" height="3" fill="#e8b0c8" opacity="0.7" transform="rotate(18 1106 514)"/><rect x="919" y="621" width="9" height="3" fill="#b8e4cc" opacity="0.9" transform="rotate(52 919 621)"/><rect x="517" y="479" width="9" height="4" fill="#f2c8d0" opacity="0.8" transform="rotate(68 517 479)"/><rect x="1356" y="638" width="10" height="3" fill="#1a1a28" opacity="0.5" transform="rotate(-1 1356 638)"/><rect x="1216" y="154" width="8" height="3" fill="#e8b0c8" opacity="0.9" transform="rotate(-25 1216 154)"/><rect x="529" y="425" width="7" height="3" fill="#f4f4f4" opacity="0.8" transform="rotate(31 529 425)"/><rect x="870" y="315" width="10" height="3" fill="#f0a8a0" opacity="0.7" transform="rotate(36 870 315)"/><rect x="644" y="451" width="9" height="3" fill="#d0d8f4" opacity="0.7" transform="rotate(-23 644 451)"/><rect x="833" y="68" width="11" height="4" fill="#ece2b0" opacity="0.7" transform="rotate(-34 833 68)"/><rect x="1204" y="501" width="11" height="3" fill="#ffffff" opacity="0.6" transform="rotate(27 1204 501)"/><rect x="564" y="339" width="9" height="3" fill="#ece2b0" opacity="0.8" transform="rotate(51 564 339)"/><rect x="1188" y="562" width="10" height="3" fill="#d0d8f4" opacity="0.8" transform="rotate(56 1188 562)"/><rect x="904" y="702" width="6" height="4" fill="#d0d8f4" opacity="0.6" transform="rotate(20 904 702)"/><rect x="863" y="746" width="7" height="3" fill="#ece2b0" opacity="0.9" transform="rotate(-11 863 746)"/><rect x="1180" y="136" width="6" height="4" fill="#ffffff" opacity="0.7" transform="rotate(47 1180 136)"/><rect x="1086" y="557" width="6" height="3" fill="#ece2b0" opacity="0.7" transform="rotate(-67 1086 557)"/><rect x="615" y="288" width="7" height="3" fill="#ffffff" opacity="0.9" transform="rotate(-22 615 288)"/><rect x="1347" y="792" width="8" height="4" fill="#f0a8a0" opacity="0.8" transform="rotate(37 1347 792)"/><rect x="891" y="485" width="7" height="3" fill="#1a1a28" opacity="0.9" transform="rotate(24 891 485)"/><rect x="1188" y="359" width="6" height="4" fill="#f4f4f4" opacity="0.7" transform="rotate(11 1188 359)"/><rect x="921" y="43" width="6" height="4" fill="#b8e4cc" opacity="0.8" transform="rotate(-38 921 43)"/><rect x="1133" y="35" width="6" height="3" fill="#f0a8a0" opacity="0.7" transform="rotate(53 1133 35)"/><rect x="1162" y="140" width="9" height="3" fill="#1a1a28" opacity="0.6" transform="rotate(30 1162 140)"/><rect x="1329" y="578" width="7" height="3" fill="#f4f4f4" opacity="0.6" transform="rotate(58 1329 578)"/><rect x="683" y="292" width="7" height="4" fill="#b8e4cc" opacity="0.5" transform="rotate(-61 683 292)"/><rect x="1224" y="450" width="9" height="3" fill="#d0d8f4" opacity="0.9" transform="rotate(18 1224 450)"/><rect x="928" y="815" width="9" height="3" fill="#b8e4cc" opacity="0.9" transform="rotate(-5 928 815)"/><rect x="1083" y="123" width="8" height="4" fill="#ffffff" opacity="0.7" transform="rotate(57 1083 123)"/><rect x="438" y="600" width="8" height="3" fill="#1a1a28" opacity="0.6" transform="rotate(-1 438 600)"/><rect x="1137" y="591" width="10" height="4" fill="#f2c8d0" opacity="0.7" transform="rotate(-12 1137 591)"/><rect x="1175" y="354" width="8" height="4" fill="#f4f4f4" opacity="0.8" transform="rotate(62 1175 354)"/><rect x="1374" y="372" width="10" height="4" fill="#e8b0c8" opacity="0.5" transform="rotate(5 1374 372)"/><rect x="674" y="35" width="10" height="3" fill="#f0a8a0" opacity="0.7" transform="rotate(11 674 35)"/><rect x="1191" y="610" width="10" height="3" fill="#f2c8d0" opacity="0.5" transform="rotate(-8 1191 610)"/><rect x="1305" y="606" width="11" height="3" fill="#f2c8d0" opacity="0.8" transform="rotate(-56 1305 606)"/><rect x="962" y="359" width="10" height="4" fill="#f2c8d0" opacity="0.6" transform="rotate(-3 962 359)"/><rect x="1256" y="172" width="7" height="4" fill="#f2c8d0" opacity="0.5" transform="rotate(32 1256 172)"/><rect x="702" y="84" width="8" height="4" fill="#e8b0c8" opacity="0.7" transform="rotate(-33 702 84)"/><rect x="609" y="553" width="8" height="3" fill="#ffffff" opacity="0.7" transform="rotate(-37 609 553)"/><rect x="695" y="710" width="8" height="4" fill="#e8b0c8" opacity="0.7" transform="rotate(-45 695 710)"/><rect x="1035" y="815" width="10" height="3" fill="#1a1a28" opacity="0.7" transform="rotate(-47 1035 815)"/><rect x="756" y="460" width="9" height="3" fill="#f4f4f4" opacity="0.6" transform="rotate(46 756 460)"/><rect x="1005" y="256" width="11" height="4" fill="#f4f4f4" opacity="0.7" transform="rotate(25 1005 256)"/><rect x="609" y="783" width="11" height="4" fill="#e8b0c8" opacity="0.6" transform="rotate(-9 609 783)"/><rect x="837" y="278" width="9" height="3" fill="#ffffff" opacity="0.7" transform="rotate(-51 837 278)"/><rect x="1125" y="198" width="9" height="3" fill="#1a1a28" opacity="0.7" transform="rotate(15 1125 198)"/><rect x="1012" y="683" width="8" height="3" fill="#f2c8d0" opacity="0.8" transform="rotate(-66 1012 683)"/><rect x="1007" y="388" width="10" height="3" fill="#f4f4f4" opacity="0.8" transform="rotate(28 1007 388)"/><rect x="1050" y="521" width="11" height="3" fill="#f2c8d0" opacity="0.7" transform="rotate(-29 1050 521)"/><rect x="1401" y="183" width="10" height="4" fill="#ffffff" opacity="0.9" transform="rotate(-31 1401 183)"/><rect x="994" y="477" width="10" height="3" fill="#1a1a28" opacity="0.5" transform="rotate(15 994 477)"/><rect x="910" y="59" width="6" height="3" fill="#ece2b0" opacity="0.9" transform="rotate(38 910 59)"/><rect x="1267" y="15" width="7" height="3" fill="#e8b0c8" opacity="0.7" transform="rotate(-5 1267 15)"/><rect x="1144" y="669" width="8" height="3" fill="#ece2b0" opacity="0.6" transform="rotate(49 1144 669)"/><rect x="681" y="590" width="7" height="4" fill="#ece2b0" opacity="0.9" transform="rotate(35 681 590)"/><rect x="758" y="441" width="7" height="3" fill="#ffffff" opacity="0.6" transform="rotate(-38 758 441)"/><rect x="1409" y="597" width="8" height="4" fill="#f0a8a0" opacity="0.6" transform="rotate(-39 1409 597)"/><rect x="1322" y="480" width="7" height="3" fill="#f2c8d0" opacity="0.6" transform="rotate(-42 1322 480)"/><rect x="1354" y="58" width="10" height="3" fill="#1a1a28" opacity="0.8" transform="rotate(61 1354 58)"/><rect x="1091" y="677" width="9" height="3" fill="#e8b0c8" opacity="0.5" transform="rotate(-61 1091 677)"/><rect x="1631" y="803" width="10" height="3" fill="#e8b0c8" opacity="0.6" transform="rotate(6 1631 803)"/><rect x="627" y="312" width="10" height="3" fill="#b8e4cc" opacity="0.6" transform="rotate(66 627 312)"/><rect x="991" y="339" width="9" height="3" fill="#e8b0c8" opacity="0.7" transform="rotate(60 991 339)"/><rect x="753" y="673" width="11" height="4" fill="#f4f4f4" opacity="0.8" transform="rotate(-48 753 673)"/><rect x="1018" y="425" width="11" height="4" fill="#b8e4cc" opacity="0.8" transform="rotate(4 1018 425)"/></g><rect x="0" y="680" width="1995" height="450" fill="url(#crowdg)"/><g><ellipse cx="-11" cy="718" rx="21" ry="24" fill="#0b0f32"/><path d="M-47 1150 Q-45 735 -11 734 Q23 735 25 1150Z" fill="#0b0f32"/><ellipse cx="36" cy="708" rx="24" ry="27" fill="#0b0f32"/><path d="M-5 1150 Q-2 727 36 725 Q74 727 76 1150Z" fill="#0b0f32"/><ellipse cx="91" cy="706" rx="23" ry="27" fill="#070a24"/><path d="M51 1150 Q54 725 91 724 Q128 725 130 1150Z" fill="#070a24"/><ellipse cx="138" cy="717" rx="21" ry="24" fill="#080b28"/><path d="M102 1150 Q104 734 138 733 Q171 734 173 1150Z" fill="#080b28"/><ellipse cx="186" cy="711" rx="20" ry="23" fill="#0a0d2e"/><path d="M152 1150 Q154 727 186 726 Q217 727 219 1150Z" fill="#0a0d2e"/><ellipse cx="231" cy="706" rx="23" ry="27" fill="#080b28"/><path d="M191 1150 Q193 725 231 723 Q268 725 271 1150Z" fill="#080b28"/><ellipse cx="279" cy="705" rx="18" ry="21" fill="#0b0f32"/><path d="M248 1150 Q250 720 279 719 Q308 720 310 1150Z" fill="#0b0f32"/><ellipse cx="318" cy="708" rx="21" ry="25" fill="#0a0d2e"/><path d="M282 1150 Q284 725 318 724 Q352 725 354 1150Z" fill="#0a0d2e"/><ellipse cx="368" cy="714" rx="20" ry="24" fill="#0b0f32"/><path d="M333 1150 Q335 731 368 730 Q401 731 403 1150Z" fill="#0b0f32"/><ellipse cx="416" cy="713" rx="20" ry="23" fill="#080b28"/><path d="M382 1150 Q384 728 416 727 Q447 728 449 1150Z" fill="#080b28"/><ellipse cx="462" cy="708" rx="19" ry="22" fill="#070a24"/><path d="M430 1150 Q432 723 462 722 Q492 723 494 1150Z" fill="#070a24"/><ellipse cx="499" cy="707" rx="21" ry="24" fill="#080b28"/><path d="M463 1150 Q465 723 499 722 Q533 723 535 1150Z" fill="#080b28"/><ellipse cx="551" cy="718" rx="19" ry="22" fill="#080b28"/><path d="M517 1150 Q519 734 551 733 Q582 734 584 1150Z" fill="#080b28"/><ellipse cx="591" cy="706" rx="24" ry="28" fill="#0b0f32"/><path d="M550 1150 Q552 725 591 724 Q630 725 632 1150Z" fill="#0b0f32"/><ellipse cx="652" cy="706" rx="20" ry="23" fill="#0a0d2e"/><path d="M619 1150 Q621 722 652 721 Q684 722 686 1150Z" fill="#0a0d2e"/><ellipse cx="699" cy="706" rx="18" ry="21" fill="#070a24"/><path d="M668 1150 Q670 721 699 720 Q729 721 731 1150Z" fill="#070a24"/><ellipse cx="736" cy="718" rx="20" ry="23" fill="#0a0d2e"/><path d="M702 1150 Q704 734 736 733 Q767 734 769 1150Z" fill="#0a0d2e"/><ellipse cx="777" cy="706" rx="17" ry="19" fill="#0b0f32"/><path d="M748 1150 Q750 719 777 719 Q804 719 806 1150Z" fill="#0b0f32"/><ellipse cx="812" cy="711" rx="21" ry="24" fill="#0a0d2e"/><path d="M776 1150 Q778 728 812 727 Q845 728 847 1150Z" fill="#0a0d2e"/><ellipse cx="865" cy="711" rx="23" ry="26" fill="#0b0f32"/><path d="M826 1150 Q828 729 865 728 Q901 729 904 1150Z" fill="#0b0f32"/><ellipse cx="911" cy="708" rx="20" ry="23" fill="#070a24"/><path d="M877 1150 Q879 724 911 723 Q943 724 945 1150Z" fill="#070a24"/><ellipse cx="960" cy="713" rx="25" ry="28" fill="#080b28"/><path d="M917 1150 Q920 733 960 732 Q999 733 1002 1150Z" fill="#080b28"/><ellipse cx="1011" cy="717" rx="20" ry="22" fill="#080b28"/><path d="M978 1150 Q980 733 1011 732 Q1042 733 1044 1150Z" fill="#080b28"/><ellipse cx="1050" cy="711" rx="17" ry="20" fill="#080b28"/><path d="M1020 1150 Q1022 725 1050 724 Q1077 725 1079 1150Z" fill="#080b28"/><ellipse cx="1091" cy="709" rx="19" ry="22" fill="#080b28"/><path d="M1059 1150 Q1061 724 1091 723 Q1122 724 1124 1150Z" fill="#080b28"/><ellipse cx="1129" cy="714" rx="18" ry="21" fill="#080b28"/><path d="M1099 1150 Q1101 728 1129 727 Q1158 728 1160 1150Z" fill="#080b28"/><ellipse cx="1170" cy="711" rx="19" ry="22" fill="#0b0f32"/><path d="M1137 1150 Q1139 727 1170 726 Q1201 727 1203 1150Z" fill="#0b0f32"/><ellipse cx="1217" cy="710" rx="17" ry="20" fill="#0a0d2e"/><path d="M1188 1150 Q1190 724 1217 723 Q1245 724 1247 1150Z" fill="#0a0d2e"/><ellipse cx="1254" cy="714" rx="18" ry="21" fill="#0a0d2e"/><path d="M1223 1150 Q1225 728 1254 727 Q1283 728 1285 1150Z" fill="#0a0d2e"/><ellipse cx="1291" cy="713" rx="22" ry="25" fill="#0b0f32"/><path d="M1254 1150 Q1256 730 1291 729 Q1326 730 1328 1150Z" fill="#0b0f32"/><ellipse cx="1344" cy="711" rx="21" ry="25" fill="#080b28"/><path d="M1308 1150 Q1310 728 1344 727 Q1379 728 1381 1150Z" fill="#080b28"/><ellipse cx="1388" cy="709" rx="21" ry="24" fill="#0b0f32"/><path d="M1353 1150 Q1355 725 1388 724 Q1421 725 1423 1150Z" fill="#0b0f32"/><ellipse cx="1431" cy="713" rx="23" ry="27" fill="#070a24"/><path d="M1391 1150 Q1394 732 1431 731 Q1468 732 1471 1150Z" fill="#070a24"/><ellipse cx="1484" cy="719" rx="24" ry="28" fill="#0a0d2e"/><path d="M1442 1150 Q1445 738 1484 737 Q1523 738 1525 1150Z" fill="#0a0d2e"/><ellipse cx="1535" cy="717" rx="21" ry="24" fill="#080b28"/><path d="M1499 1150 Q1501 734 1535 733 Q1568 734 1570 1150Z" fill="#080b28"/><ellipse cx="1579" cy="708" rx="24" ry="28" fill="#080b28"/><path d="M1538 1150 Q1540 727 1579 726 Q1618 727 1620 1150Z" fill="#080b28"/><ellipse cx="1627" cy="708" rx="20" ry="23" fill="#080b28"/><path d="M1594 1150 Q1596 724 1627 723 Q1659 724 1661 1150Z" fill="#080b28"/><ellipse cx="1668" cy="713" rx="19" ry="22" fill="#0a0d2e"/><path d="M1635 1150 Q1637 728 1668 727 Q1699 728 1701 1150Z" fill="#0a0d2e"/><ellipse cx="1707" cy="711" rx="17" ry="20" fill="#070a24"/><path d="M1677 1150 Q1679 725 1707 724 Q1734 725 1736 1150Z" fill="#070a24"/><ellipse cx="1747" cy="713" rx="22" ry="26" fill="#0a0d2e"/><path d="M1709 1150 Q1711 731 1747 730 Q1783 731 1785 1150Z" fill="#0a0d2e"/><ellipse cx="1798" cy="712" rx="24" ry="28" fill="#070a24"/><path d="M1757 1150 Q1759 731 1798 730 Q1837 731 1839 1150Z" fill="#070a24"/><ellipse cx="1855" cy="705" rx="25" ry="28" fill="#080b28"/><path d="M1813 1150 Q1816 725 1855 724 Q1895 725 1897 1150Z" fill="#080b28"/><ellipse cx="1910" cy="709" rx="23" ry="26" fill="#080b28"/><path d="M1872 1150 Q1874 728 1910 726 Q1946 728 1949 1150Z" fill="#080b28"/><ellipse cx="1955" cy="715" rx="21" ry="24" fill="#0a0d2e"/><path d="M1920 1150 Q1922 732 1955 731 Q1989 732 1991 1150Z" fill="#0a0d2e"/><ellipse cx="2006" cy="710" rx="24" ry="28" fill="#0b0f32"/><path d="M1965 1150 Q1967 729 2006 728 Q2045 729 2047 1150Z" fill="#0b0f32"/><ellipse cx="-4" cy="776" rx="28" ry="32" fill="#0b0f32"/><path d="M-51 1150 Q-48 798 -4 796 Q41 798 43 1150Z" fill="#0b0f32"/><ellipse cx="51" cy="768" rx="30" ry="35" fill="#080b28"/><path d="M-0 1150 Q3 792 51 790 Q100 792 103 1150Z" fill="#080b28"/><ellipse cx="112" cy="773" rx="23" ry="27" fill="#070a24"/><path d="M72 1150 Q75 791 112 790 Q149 791 152 1150Z" fill="#070a24"/><ellipse cx="162" cy="768" rx="32" ry="36" fill="#0b0f32"/><path d="M108 1150 Q112 793 162 791 Q213 793 216 1150Z" fill="#0b0f32"/><ellipse cx="223" cy="762" rx="33" ry="38" fill="#080b28"/><path d="M167 1150 Q170 788 223 787 Q275 788 279 1150Z" fill="#080b28"/><ellipse cx="284" cy="761" rx="24" ry="27" fill="#080b28"/><path d="M244 1150 Q246 779 284 778 Q321 779 324 1150Z" fill="#080b28"/><ellipse cx="330" cy="778" rx="30" ry="35" fill="#070a24"/><path d="M278 1150 Q281 802 330 801 Q378 802 381 1150Z" fill="#070a24"/><ellipse cx="394" cy="763" rx="27" ry="31" fill="#0a0d2e"/><path d="M348 1150 Q351 785 394 783 Q438 785 440 1150Z" fill="#0a0d2e"/><ellipse cx="447" cy="767" rx="32" ry="37" fill="#0b0f32"/><path d="M393 1150 Q396 792 447 791 Q498 792 502 1150Z" fill="#0b0f32"/><ellipse cx="510" cy="768" rx="25" ry="29" fill="#070a24"/><path d="M466 1150 Q469 788 510 787 Q550 788 553 1150Z" fill="#070a24"/><ellipse cx="555" cy="776" rx="28" ry="32" fill="#0a0d2e"/><path d="M508 1150 Q511 798 555 797 Q600 798 603 1150Z" fill="#0a0d2e"/><ellipse cx="615" cy="772" rx="27" ry="31" fill="#070a24"/><path d="M569 1150 Q571 793 615 792 Q659 793 661 1150Z" fill="#070a24"/><ellipse cx="664" cy="767" rx="24" ry="28" fill="#080b28"/><path d="M623 1150 Q626 786 664 785 Q703 786 705 1150Z" fill="#080b28"/><ellipse cx="714" cy="766" rx="34" ry="40" fill="#0a0d2e"/><path d="M655 1150 Q659 793 714 791 Q769 793 772 1150Z" fill="#0a0d2e"/><ellipse cx="774" cy="778" rx="28" ry="33" fill="#0b0f32"/><path d="M726 1150 Q729 801 774 800 Q819 801 822 1150Z" fill="#0b0f32"/><ellipse cx="828" cy="773" rx="29" ry="33" fill="#0b0f32"/><path d="M778 1150 Q781 797 828 795 Q874 797 877 1150Z" fill="#0b0f32"/><ellipse cx="881" cy="766" rx="33" ry="38" fill="#080b28"/><path d="M826 1150 Q829 792 881 790 Q934 792 937 1150Z" fill="#080b28"/><ellipse cx="948" cy="767" rx="26" ry="30" fill="#080b28"/><path d="M904 1150 Q907 788 948 787 Q990 788 993 1150Z" fill="#080b28"/><ellipse cx="1001" cy="764" rx="28" ry="32" fill="#070a24"/><path d="M954 1150 Q957 786 1001 785 Q1045 786 1048 1150Z" fill="#070a24"/><ellipse cx="1051" cy="761" rx="24" ry="28" fill="#080b28"/><path d="M1010 1150 Q1012 780 1051 779 Q1090 780 1092 1150Z" fill="#080b28"/><ellipse cx="1097" cy="773" rx="30" ry="35" fill="#070a24"/><path d="M1046 1150 Q1049 797 1097 796 Q1146 797 1149 1150Z" fill="#070a24"/><ellipse cx="1163" cy="764" rx="31" ry="36" fill="#0b0f32"/><path d="M1111 1150 Q1114 789 1163 787 Q1213 789 1216 1150Z" fill="#0b0f32"/><ellipse cx="1220" cy="775" rx="31" ry="36" fill="#080b28"/><path d="M1167 1150 Q1170 800 1220 799 Q1270 800 1274 1150Z" fill="#080b28"/><ellipse cx="1276" cy="767" rx="26" ry="30" fill="#0a0d2e"/><path d="M1232 1150 Q1235 788 1276 786 Q1318 788 1320 1150Z" fill="#0a0d2e"/><ellipse cx="1325" cy="778" rx="32" ry="37" fill="#080b28"/><path d="M1270 1150 Q1274 804 1325 802 Q1377 804 1380 1150Z" fill="#080b28"/><ellipse cx="1387" cy="768" rx="34" ry="39" fill="#0b0f32"/><path d="M1330 1150 Q1333 795 1387 793 Q1441 795 1444 1150Z" fill="#0b0f32"/><ellipse cx="1452" cy="778" rx="30" ry="35" fill="#0b0f32"/><path d="M1400 1150 Q1403 802 1452 801 Q1500 802 1503 1150Z" fill="#0b0f32"/><ellipse cx="1512" cy="770" rx="31" ry="35" fill="#070a24"/><path d="M1460 1150 Q1463 795 1512 793 Q1561 795 1564 1150Z" fill="#070a24"/><ellipse cx="1571" cy="764" rx="31" ry="35" fill="#080b28"/><path d="M1519 1150 Q1522 789 1571 787 Q1620 789 1623 1150Z" fill="#080b28"/><ellipse cx="1626" cy="779" rx="34" ry="39" fill="#070a24"/><path d="M1569 1150 Q1572 806 1626 805 Q1680 806 1684 1150Z" fill="#070a24"/><ellipse cx="1693" cy="766" rx="32" ry="37" fill="#080b28"/><path d="M1638 1150 Q1641 792 1693 791 Q1744 792 1748 1150Z" fill="#080b28"/><ellipse cx="1753" cy="769" rx="23" ry="27" fill="#0b0f32"/><path d="M1713 1150 Q1716 788 1753 786 Q1791 788 1793 1150Z" fill="#0b0f32"/><ellipse cx="1802" cy="761" rx="29" ry="33" fill="#080b28"/><path d="M1754 1150 Q1756 784 1802 782 Q1848 784 1851 1150Z" fill="#080b28"/><ellipse cx="1857" cy="771" rx="23" ry="26" fill="#0a0d2e"/><path d="M1818 1150 Q1820 789 1857 788 Q1893 789 1896 1150Z" fill="#0a0d2e"/><ellipse cx="1901" cy="778" rx="35" ry="40" fill="#0b0f32"/><path d="M1841 1150 Q1845 806 1901 804 Q1957 806 1960 1150Z" fill="#0b0f32"/><ellipse cx="1977" cy="779" rx="29" ry="33" fill="#080b28"/><path d="M1928 1150 Q1931 802 1977 800 Q2023 802 2026 1150Z" fill="#080b28"/><ellipse cx="-24" cy="850" rx="44" ry="51" fill="#0a0d2e"/><path d="M-99 1150 Q-94 885 -24 883 Q47 885 52 1150Z" fill="#0a0d2e"/><ellipse cx="58" cy="834" rx="44" ry="51" fill="#0b0f32"/><path d="M-17 1150 Q-12 870 58 868 Q129 870 134 1150Z" fill="#0b0f32"/><ellipse cx="141" cy="834" rx="45" ry="52" fill="#0a0d2e"/><path d="M64 1150 Q69 870 141 868 Q213 870 218 1150Z" fill="#0a0d2e"/><ellipse cx="218" cy="831" rx="44" ry="51" fill="#080b28"/><path d="M143 1150 Q147 867 218 865 Q290 867 294 1150Z" fill="#080b28"/><ellipse cx="296" cy="854" rx="34" ry="39" fill="#0b0f32"/><path d="M238 1150 Q242 881 296 879 Q351 881 354 1150Z" fill="#0b0f32"/><ellipse cx="362" cy="828" rx="36" ry="41" fill="#0a0d2e"/><path d="M301 1150 Q304 857 362 855 Q419 857 423 1150Z" fill="#0a0d2e"/><path d="M330 810 Q344 783 373 788" fill="none" stroke="#2f5ad0" stroke-width="3" opacity="0.5" filter="url(#f2)"/><ellipse cx="424" cy="853" rx="41" ry="48" fill="#0b0f32"/><path d="M353 1150 Q357 887 424 884 Q490 887 494 1150Z" fill="#0b0f32"/><path d="M386 833 Q403 802 436 807" fill="none" stroke="#2f5ad0" stroke-width="3" opacity="0.5" filter="url(#f2)"/><ellipse cx="494" cy="838" rx="36" ry="41" fill="#0b0f32"/><path d="M433 1150 Q436 867 494 865 Q551 867 555 1150Z" fill="#0b0f32"/><ellipse cx="549" cy="826" rx="42" ry="48" fill="#070a24"/><path d="M479 1150 Q483 859 549 857 Q616 859 620 1150Z" fill="#070a24"/><path d="M512 805 Q528 774 562 780" fill="none" stroke="#2f5ad0" stroke-width="3" opacity="0.5" filter="url(#f2)"/><ellipse cx="625" cy="831" rx="34" ry="39" fill="#0a0d2e"/><path d="M567 1150 Q571 858 625 857 Q680 858 683 1150Z" fill="#0a0d2e"/><path d="M594 814 Q608 788 635 793" fill="none" stroke="#2f5ad0" stroke-width="3" opacity="0.5" filter="url(#f2)"/><ellipse cx="680" cy="832" rx="47" ry="54" fill="#0b0f32"/><path d="M600 1150 Q604 870 680 868 Q756 870 760 1150Z" fill="#0b0f32"/><path d="M637 809 Q656 773 694 780" fill="none" stroke="#2f5ad0" stroke-width="3" opacity="0.5" filter="url(#f2)"/><ellipse cx="765" cy="840" rx="36" ry="41" fill="#070a24"/><path d="M704 1150 Q708 869 765 867 Q823 869 826 1150Z" fill="#070a24"/><ellipse cx="830" cy="826" rx="50" ry="58" fill="#0b0f32"/><path d="M744 1150 Q749 866 830 864 Q910 866 915 1150Z" fill="#0b0f32"/><ellipse cx="918" cy="851" rx="44" ry="50" fill="#0a0d2e"/><path d="M844 1150 Q848 886 918 884 Q988 886 992 1150Z" fill="#0a0d2e"/><ellipse cx="999" cy="850" rx="45" ry="52" fill="#0a0d2e"/><path d="M923 1150 Q927 887 999 884 Q1072 887 1076 1150Z" fill="#0a0d2e"/><ellipse cx="1079" cy="831" rx="40" ry="46" fill="#070a24"/><path d="M1011 1150 Q1015 863 1079 861 Q1143 863 1147 1150Z" fill="#070a24"/><ellipse cx="1142" cy="831" rx="48" ry="56" fill="#080b28"/><path d="M1060 1150 Q1065 870 1142 867 Q1220 870 1224 1150Z" fill="#080b28"/><path d="M1099 807 Q1118 771 1157 777" fill="none" stroke="#2f5ad0" stroke-width="3" opacity="0.5" filter="url(#f2)"/><ellipse cx="1219" cy="833" rx="47" ry="54" fill="#080b28"/><path d="M1139 1150 Q1143 871 1219 868 Q1295 871 1300 1150Z" fill="#080b28"/><ellipse cx="1309" cy="846" rx="44" ry="50" fill="#0a0d2e"/><path d="M1234 1150 Q1239 881 1309 879 Q1379 881 1384 1150Z" fill="#0a0d2e"/><ellipse cx="1387" cy="831" rx="34" ry="39" fill="#070a24"/><path d="M1330 1150 Q1333 858 1387 857 Q1442 858 1445 1150Z" fill="#070a24"/><ellipse cx="1452" cy="840" rx="36" ry="41" fill="#070a24"/><path d="M1391 1150 Q1395 869 1452 867 Q1510 869 1513 1150Z" fill="#070a24"/><ellipse cx="1516" cy="827" rx="37" ry="43" fill="#080b28"/><path d="M1453 1150 Q1457 857 1516 855 Q1576 857 1579 1150Z" fill="#080b28"/><path d="M1483 809 Q1498 781 1527 786" fill="none" stroke="#2f5ad0" stroke-width="3" opacity="0.5" filter="url(#f2)"/><ellipse cx="1584" cy="852" rx="45" ry="52" fill="#0b0f32"/><path d="M1507 1150 Q1512 888 1584 886 Q1656 888 1661 1150Z" fill="#0b0f32"/><path d="M1543 829 Q1561 795 1597 801" fill="none" stroke="#2f5ad0" stroke-width="3" opacity="0.5" filter="url(#f2)"/><ellipse cx="1655" cy="850" rx="37" ry="43" fill="#070a24"/><path d="M1591 1150 Q1595 880 1655 878 Q1715 880 1718 1150Z" fill="#070a24"/><ellipse cx="1712" cy="853" rx="35" ry="40" fill="#0b0f32"/><path d="M1653 1150 Q1656 881 1712 879 Q1768 881 1771 1150Z" fill="#0b0f32"/><path d="M1681 836 Q1695 810 1723 814" fill="none" stroke="#2f5ad0" stroke-width="3" opacity="0.5" filter="url(#f2)"/><ellipse cx="1765" cy="838" rx="41" ry="47" fill="#070a24"/><path d="M1696 1150 Q1700 871 1765 869 Q1831 871 1835 1150Z" fill="#070a24"/><ellipse cx="1837" cy="846" rx="34" ry="39" fill="#0a0d2e"/><path d="M1779 1150 Q1783 873 1837 871 Q1891 873 1895 1150Z" fill="#0a0d2e"/><path d="M1807 829 Q1820 804 1847 808" fill="none" stroke="#2f5ad0" stroke-width="3" opacity="0.5" filter="url(#f2)"/><ellipse cx="1894" cy="837" rx="48" ry="55" fill="#0a0d2e"/><path d="M1813 1150 Q1818 875 1894 873 Q1970 875 1975 1150Z" fill="#0a0d2e"/><ellipse cx="1967" cy="835" rx="49" ry="56" fill="#080b28"/><path d="M1884 1150 Q1889 874 1967 871 Q2045 874 2049 1150Z" fill="#080b28"/><ellipse cx="-9" cy="936" rx="67" ry="77" fill="#0a0d2e"/><path d="M-123 1150 Q-116 990 -9 986 Q99 990 106 1150Z" fill="#0a0d2e"/><ellipse cx="109" cy="930" rx="72" ry="83" fill="#080b28"/><path d="M-13 1150 Q-6 987 109 984 Q224 987 232 1150Z" fill="#080b28"/><ellipse cx="230" cy="936" rx="72" ry="83" fill="#070a24"/><path d="M107 1150 Q114 994 230 990 Q345 994 352 1150Z" fill="#070a24"/><ellipse cx="348" cy="952" rx="71" ry="82" fill="#0b0f32"/><path d="M227 1150 Q234 1008 348 1005 Q462 1008 469 1150Z" fill="#0b0f32"/><path d="M284 916 Q312 863 369 872" fill="none" stroke="#2f5ad0" stroke-width="4" opacity="0.5" filter="url(#f2)"/><ellipse cx="450" cy="931" rx="72" ry="83" fill="#080b28"/><path d="M328 1150 Q335 989 450 985 Q565 989 572 1150Z" fill="#080b28"/><path d="M385 895 Q414 842 471 851" fill="none" stroke="#2f5ad0" stroke-width="4" opacity="0.5" filter="url(#f2)"/><ellipse cx="558" cy="945" rx="67" ry="78" fill="#0a0d2e"/><path d="M443 1150 Q450 999 558 996 Q666 999 672 1150Z" fill="#0a0d2e"/><path d="M497 912 Q524 861 578 870" fill="none" stroke="#2f5ad0" stroke-width="4" opacity="0.5" filter="url(#f2)"/><ellipse cx="675" cy="928" rx="58" ry="67" fill="#0b0f32"/><path d="M577 1150 Q583 974 675 971 Q768 974 774 1150Z" fill="#0b0f32"/><ellipse cx="767" cy="962" rx="60" ry="70" fill="#0a0d2e"/><path d="M664 1150 Q670 1010 767 1007 Q863 1010 869 1150Z" fill="#0a0d2e"/><ellipse cx="867" cy="919" rx="77" ry="88" fill="#080b28"/><path d="M736 1150 Q744 981 867 977 Q990 981 998 1150Z" fill="#080b28"/><ellipse cx="980" cy="920" rx="61" ry="70" fill="#0a0d2e"/><path d="M876 1150 Q882 969 980 966 Q1077 969 1083 1150Z" fill="#0a0d2e"/><ellipse cx="1063" cy="930" rx="57" ry="65" fill="#070a24"/><path d="M966 1150 Q972 976 1063 973 Q1154 976 1159 1150Z" fill="#070a24"/><ellipse cx="1151" cy="943" rx="77" ry="88" fill="#080b28"/><path d="M1021 1150 Q1029 1004 1151 1000 Q1274 1004 1282 1150Z" fill="#080b28"/><ellipse cx="1280" cy="944" rx="52" ry="59" fill="#080b28"/><path d="M1192 1150 Q1198 986 1280 983 Q1363 986 1368 1150Z" fill="#080b28"/><ellipse cx="1370" cy="960" rx="60" ry="69" fill="#0b0f32"/><path d="M1268 1150 Q1274 1009 1370 1006 Q1467 1009 1473 1150Z" fill="#0b0f32"/><ellipse cx="1467" cy="940" rx="62" ry="71" fill="#070a24"/><path d="M1362 1150 Q1368 989 1467 986 Q1565 989 1571 1150Z" fill="#070a24"/><ellipse cx="1565" cy="931" rx="60" ry="69" fill="#070a24"/><path d="M1464 1150 Q1470 979 1565 976 Q1661 979 1667 1150Z" fill="#070a24"/><ellipse cx="1653" cy="931" rx="70" ry="80" fill="#080b28"/><path d="M1535 1150 Q1542 987 1653 983 Q1765 987 1772 1150Z" fill="#080b28"/><ellipse cx="1764" cy="936" rx="67" ry="77" fill="#0b0f32"/><path d="M1650 1150 Q1657 990 1764 986 Q1872 990 1879 1150Z" fill="#0b0f32"/><path d="M1704 902 Q1731 852 1784 861" fill="none" stroke="#2f5ad0" stroke-width="4" opacity="0.5" filter="url(#f2)"/><ellipse cx="1864" cy="944" rx="61" ry="70" fill="#070a24"/><path d="M1761 1150 Q1767 992 1864 989 Q1961 992 1967 1150Z" fill="#070a24"/><path d="M1810 913 Q1834 868 1882 876" fill="none" stroke="#2f5ad0" stroke-width="4" opacity="0.5" filter="url(#f2)"/><ellipse cx="1969" cy="939" rx="62" ry="71" fill="#0a0d2e"/><path d="M1864 1150 Q1870 988 1969 985 Q2067 988 2073 1150Z" fill="#0a0d2e"/><path d="M1913 908 Q1938 862 1987 870" fill="none" stroke="#2f5ad0" stroke-width="4" opacity="0.5" filter="url(#f2)"/><ellipse cx="2055" cy="958" rx="72" ry="83" fill="#0a0d2e"/><path d="M1932 1150 Q1939 1016 2055 1012 Q2170 1016 2178 1150Z" fill="#0a0d2e"/><ellipse cx="-36" cy="1058" rx="77" ry="88" fill="#0b0f32"/><path d="M-166 1150 Q-158 1119 -36 1115 Q87 1119 95 1150Z" fill="#0b0f32"/><path d="M-105 1019 Q-74 962 -13 972" fill="none" stroke="#2f5ad0" stroke-width="5" opacity="0.5" filter="url(#f2)"/><ellipse cx="91" cy="1028" rx="86" ry="99" fill="#070a24"/><path d="M-56 1150 Q-47 1097 91 1093 Q229 1097 238 1150Z" fill="#070a24"/><ellipse cx="227" cy="1035" rx="90" ry="104" fill="#0b0f32"/><path d="M73 1150 Q82 1107 227 1103 Q372 1107 381 1150Z" fill="#0b0f32"/><ellipse cx="372" cy="1027" rx="105" ry="121" fill="#070a24"/><path d="M194 1150 Q204 1111 372 1106 Q540 1111 551 1150Z" fill="#070a24"/><ellipse cx="520" cy="1075" rx="77" ry="88" fill="#070a24"/><path d="M390 1150 Q398 1136 520 1132 Q643 1136 651 1150Z" fill="#070a24"/><path d="M452 1036 Q482 979 543 989" fill="none" stroke="#2f5ad0" stroke-width="5" opacity="0.5" filter="url(#f2)"/><ellipse cx="640" cy="1063" rx="101" ry="117" fill="#0a0d2e"/><path d="M467 1150 Q477 1144 640 1139 Q802 1144 812 1150Z" fill="#0a0d2e"/><ellipse cx="803" cy="1034" rx="80" ry="92" fill="#0a0d2e"/><path d="M667 1150 Q675 1098 803 1094 Q930 1098 938 1150Z" fill="#0a0d2e"/><ellipse cx="909" cy="1036" rx="74" ry="86" fill="#0b0f32"/><path d="M782 1150 Q790 1095 909 1091 Q1028 1095 1035 1150Z" fill="#0b0f32"/><path d="M842 998 Q872 942 931 952" fill="none" stroke="#2f5ad0" stroke-width="4" opacity="0.5" filter="url(#f2)"/><ellipse cx="1008" cy="1036" rx="81" ry="93" fill="#080b28"/><path d="M870 1150 Q878 1101 1008 1097 Q1138 1101 1146 1150Z" fill="#080b28"/><ellipse cx="1120" cy="1080" rx="82" ry="94" fill="#0b0f32"/><path d="M981 1150 Q989 1146 1120 1141 Q1250 1146 1258 1150Z" fill="#0b0f32"/><ellipse cx="1234" cy="1065" rx="86" ry="99" fill="#080b28"/><path d="M1088 1150 Q1096 1134 1234 1130 Q1371 1134 1380 1150Z" fill="#080b28"/><ellipse cx="1362" cy="1071" rx="105" ry="121" fill="#0a0d2e"/><path d="M1183 1150 Q1194 1156 1362 1150 Q1530 1156 1541 1150Z" fill="#0a0d2e"/><ellipse cx="1531" cy="1028" rx="88" ry="101" fill="#0a0d2e"/><path d="M1382 1150 Q1391 1098 1531 1094 Q1672 1098 1680 1150Z" fill="#0a0d2e"/><ellipse cx="1681" cy="1053" rx="85" ry="98" fill="#0a0d2e"/><path d="M1536 1150 Q1544 1121 1681 1117 Q1817 1121 1825 1150Z" fill="#0a0d2e"/><ellipse cx="1805" cy="1074" rx="76" ry="87" fill="#080b28"/><path d="M1676 1150 Q1683 1134 1805 1131 Q1926 1134 1934 1150Z" fill="#080b28"/><ellipse cx="1918" cy="1070" rx="95" ry="109" fill="#0b0f32"/><path d="M1756 1150 Q1766 1146 1918 1141 Q2070 1146 2079 1150Z" fill="#0b0f32"/><path d="M1832 1022 Q1870 951 1946 963" fill="none" stroke="#2f5ad0" stroke-width="6" opacity="0.5" filter="url(#f2)"/><ellipse cx="2071" cy="1032" rx="75" ry="86" fill="#080b28"/><path d="M1944 1150 Q1951 1092 2071 1088 Q2192 1092 2199 1150Z" fill="#080b28"/><ellipse cx="-29" cy="1213" rx="118" ry="136" fill="#0a0d2e"/><path d="M-231 1150 Q-219 1308 -29 1302 Q160 1308 172 1150Z" fill="#0a0d2e"/><ellipse cx="154" cy="1147" rx="121" ry="139" fill="#0b0f32"/><path d="M-51 1150 Q-39 1243 154 1237 Q347 1243 359 1150Z" fill="#0b0f32"/><ellipse cx="349" cy="1216" rx="153" ry="176" fill="#0b0f32"/><path d="M89 1150 Q105 1338 349 1331 Q594 1338 609 1150Z" fill="#0b0f32"/><ellipse cx="601" cy="1156" rx="126" ry="145" fill="#0a0d2e"/><path d="M387 1150 Q400 1256 601 1250 Q802 1256 815 1150Z" fill="#0a0d2e"/><path d="M488 1093 Q538 998 639 1015" fill="none" stroke="#2f5ad0" stroke-width="8" opacity="0.5" filter="url(#f2)"/><ellipse cx="800" cy="1195" rx="101" ry="117" fill="#0b0f32"/><path d="M628 1150 Q638 1277 800 1272 Q963 1277 973 1150Z" fill="#0b0f32"/><ellipse cx="958" cy="1170" rx="121" ry="139" fill="#0a0d2e"/><path d="M752 1150 Q765 1267 958 1261 Q1151 1267 1163 1150Z" fill="#0a0d2e"/><ellipse cx="1137" cy="1203" rx="110" ry="126" fill="#070a24"/><path d="M950 1150 Q961 1291 1137 1285 Q1313 1291 1324 1150Z" fill="#070a24"/><ellipse cx="1286" cy="1150" rx="103" ry="119" fill="#070a24"/><path d="M1111 1150 Q1121 1233 1286 1228 Q1452 1233 1462 1150Z" fill="#070a24"/><ellipse cx="1443" cy="1142" rx="145" ry="167" fill="#070a24"/><path d="M1196 1150 Q1211 1258 1443 1251 Q1676 1258 1690 1150Z" fill="#070a24"/><ellipse cx="1633" cy="1201" rx="105" ry="120" fill="#070a24"/><path d="M1455 1150 Q1466 1284 1633 1279 Q1800 1284 1811 1150Z" fill="#070a24"/><path d="M1539 1148 Q1581 1070 1664 1084" fill="none" stroke="#2f5ad0" stroke-width="6" opacity="0.5" filter="url(#f2)"/><ellipse cx="1791" cy="1202" rx="108" ry="124" fill="#0b0f32"/><path d="M1607 1150 Q1618 1288 1791 1283 Q1964 1288 1975 1150Z" fill="#0b0f32"/><path d="M1694 1147 Q1737 1066 1824 1080" fill="none" stroke="#2f5ad0" stroke-width="6" opacity="0.5" filter="url(#f2)"/><ellipse cx="1938" cy="1182" rx="143" ry="165" fill="#0b0f32"/><path d="M1695 1150 Q1709 1296 1938 1289 Q2167 1296 2181 1150Z" fill="#0b0f32"/></g><g><g transform="rotate(-8 725 710)"><path d="M725 620 L728 740" stroke="#0a0d2a" stroke-width="12" stroke-linecap="round"/><path d="M716 624 L714 604 M722 618 L721 596 M728 618 L729 598 M734 622 L737 606" stroke="#0a0d2a" stroke-width="5" stroke-linecap="round"/><ellipse cx="725" cy="626" rx="10" ry="11" fill="#0a0d2a"/></g><g transform="rotate(10 789 700)"><path d="M789 610 L792 730" stroke="#0a0d2a" stroke-width="12" stroke-linecap="round"/><path d="M780 614 L778 594 M786 608 L785 586 M792 608 L793 588 M798 612 L801 596" stroke="#0a0d2a" stroke-width="5" stroke-linecap="round"/><ellipse cx="789" cy="616" rx="10" ry="11" fill="#0a0d2a"/></g><g transform="rotate(-5 900 690)"><path d="M900 600 L903 720" stroke="#0a0d2a" stroke-width="12" stroke-linecap="round"/><path d="M891 604 L889 584 M897 598 L896 576 M903 598 L904 578 M909 602 L912 586" stroke="#0a0d2a" stroke-width="5" stroke-linecap="round"/><ellipse cx="900" cy="606" rx="10" ry="11" fill="#0a0d2a"/></g><g transform="rotate(8 1118 675)"><path d="M1118 585 L1121 705" stroke="#0a0d2a" stroke-width="12" stroke-linecap="round"/><path d="M1109 589 L1107 569 M1115 583 L1114 561 M1121 583 L1122 563 M1127 587 L1130 571" stroke="#0a0d2a" stroke-width="5" stroke-linecap="round"/><ellipse cx="1118" cy="591" rx="10" ry="11" fill="#0a0d2a"/></g><g transform="rotate(-12 1156 670)"><path d="M1156 580 L1159 700" stroke="#0a0d2a" stroke-width="12" stroke-linecap="round"/><path d="M1147 584 L1145 564 M1153 578 L1152 556 M1159 578 L1160 558 M1165 582 L1168 566" stroke="#0a0d2a" stroke-width="5" stroke-linecap="round"/><ellipse cx="1156" cy="586" rx="10" ry="11" fill="#0a0d2a"/></g><g transform="rotate(6 1254 700)"><path d="M1254 610 L1257 730" stroke="#0a0d2a" stroke-width="12" stroke-linecap="round"/><path d="M1245 614 L1243 594 M1251 608 L1250 586 M1257 608 L1258 588 M1263 612 L1266 596" stroke="#0a0d2a" stroke-width="5" stroke-linecap="round"/><ellipse cx="1254" cy="616" rx="10" ry="11" fill="#0a0d2a"/></g><g transform="rotate(-6 1301 690)"><path d="M1301 600 L1304 720" stroke="#0a0d2a" stroke-width="12" stroke-linecap="round"/><path d="M1292 604 L1290 584 M1298 598 L1297 576 M1304 598 L1305 578 M1310 602 L1313 586" stroke="#0a0d2a" stroke-width="5" stroke-linecap="round"/><ellipse cx="1301" cy="606" rx="10" ry="11" fill="#0a0d2a"/></g><g transform="rotate(12 660 750)"><path d="M660 660 L663 780" stroke="#0a0d2a" stroke-width="12" stroke-linecap="round"/><path d="M651 664 L649 644 M657 658 L656 636 M663 658 L664 638 M669 662 L672 646" stroke="#0a0d2a" stroke-width="5" stroke-linecap="round"/><ellipse cx="660" cy="666" rx="10" ry="11" fill="#0a0d2a"/></g><g transform="rotate(-10 1060 730)"><path d="M1060 640 L1063 760" stroke="#0a0d2a" stroke-width="12" stroke-linecap="round"/><path d="M1051 644 L1049 624 M1057 638 L1056 616 M1063 638 L1064 618 M1069 642 L1072 626" stroke="#0a0d2a" stroke-width="5" stroke-linecap="round"/><ellipse cx="1060" cy="646" rx="10" ry="11" fill="#0a0d2a"/></g><g transform="rotate(5 840 740)"><path d="M840 650 L843 770" stroke="#0a0d2a" stroke-width="12" stroke-linecap="round"/><path d="M831 654 L829 634 M837 648 L836 626 M843 648 L844 628 M849 652 L852 636" stroke="#0a0d2a" stroke-width="5" stroke-linecap="round"/><ellipse cx="840" cy="656" rx="10" ry="11" fill="#0a0d2a"/></g><g transform="rotate(4 980 750)"><path d="M980 660 L983 780" stroke="#0a0d2a" stroke-width="12" stroke-linecap="round"/><path d="M971 664 L969 644 M977 658 L976 636 M983 658 L984 638 M989 662 L992 646" stroke="#0a0d2a" stroke-width="5" stroke-linecap="round"/><ellipse cx="980" cy="666" rx="10" ry="11" fill="#0a0d2a"/></g><g transform="rotate(-8 1380 740)"><path d="M1380 650 L1383 770" stroke="#0a0d2a" stroke-width="12" stroke-linecap="round"/><path d="M1371 654 L1369 634 M1377 648 L1376 626 M1383 648 L1384 628 M1389 652 L1392 636" stroke="#0a0d2a" stroke-width="5" stroke-linecap="round"/><ellipse cx="1380" cy="656" rx="10" ry="11" fill="#0a0d2a"/></g><g transform="rotate(10 560 780)"><path d="M560 690 L563 810" stroke="#0a0d2a" stroke-width="12" stroke-linecap="round"/><path d="M551 694 L549 674 M557 688 L556 666 M563 688 L564 668 M569 692 L572 676" stroke="#0a0d2a" stroke-width="5" stroke-linecap="round"/><ellipse cx="560" cy="696" rx="10" ry="11" fill="#0a0d2a"/></g></g><rect x="0" y="0" width="1995" height="1130" fill="url(#sideg)"/></g></defs></svg><!--PHOTO_END-->
<div id="win">
 <div id="strip" class="a"></div>
 <!-- tab search -->
 <div class="a" style="left:517px;top:299px;width:82px;height:82px;border-radius:24px;background:#868b95"></div>
 <svg class="ic" style="left:540px;top:330px" width="36" height="24" viewBox="0 0 36 24"><path d="M7 5 L18 16 L29 5" fill="none" stroke="#2f3237" stroke-width="5"/></svg>
 <div class="chip" style="left:617px;width:163px;background:#62308f;color:#abaaae"><span class="a" style="left:16.5px;top:0;letter-spacing:0.5px">Muzyka</span></div>
 <div class="chip" style="left:810px;width:150px;background:#9b701b;color:#202124"><span class="a" style="left:17px;top:0;letter-spacing:1px">Szkoła</span></div>
 <div class="chip" style="left:990px;width:330px;background:#22519b;color:#aab1bd"><span class="a" style="left:16.5px;top:0;letter-spacing:1.24px">Społecznościowe</span></div>
 <div class="ul" style="left:623px;width:151px;background:#6a3a9a"></div>
 <div class="ul" style="left:816px;width:138px;background:#9b701b"></div>
 <div class="ul" style="left:996px;width:318px;background:#22519b"></div>
 <!-- active tab -->
 <svg class="ic" style="left:1313px;top:299px" width="744" height="100" viewBox="0 0 744 100">
  <path d="M0 100 Q48 100 48 70 L48 24 Q48 0 72 0 L673 0 Q697 0 697 24 L697 70 Q697 100 744 100 Z" fill="#919294"/>
 </svg>
 <svg class="ic" style="left:1388px;top:325px" width="42" height="30" viewBox="0 0 42 30"><rect x="0" y="0" width="42" height="29" rx="8" fill="#9a1515"/><path d="M16 7.5 L28 14.5 L16 21.5Z" fill="#919294"/></svg>
 <div class="a" style="left:1449px;top:318px;font-size:35px;line-height:44px;color:#202124;letter-spacing:0.8px">YouTube</div>
 <svg class="ic" style="left:1948px;top:325px" width="30" height="30" viewBox="0 0 30 30"><path d="M3 3 L26 26 M26 3 L3 26" stroke="#222428" stroke-width="5"/></svg>
 <svg class="ic" style="left:2061px;top:327px" width="28" height="27" viewBox="0 0 28 27"><path d="M13.5 0 V26 M0 13 H27" stroke="#3a3e45" stroke-width="5"/></svg>
 <!-- window controls -->
 <div class="a" style="left:3028px;top:337px;width:36px;height:6px;background:#1c4690"></div>
 <div class="a" style="left:3148px;top:321px;width:37px;height:37px;border:6px solid #1c4690"></div>
 <svg class="ic" style="left:0;top:0" width="3840" height="400" viewBox="0 0 3840 400"><path d="M3267.1 324.9 L3297.3 355.2 M3297.3 324.9 L3267.1 355.2" stroke="#1c4690" stroke-width="6"/></svg>

 <div id="toolbar" class="a"></div>
 <!-- back / fwd / reload -->
 
 <svg class="ic" style="left:0;top:0" width="800" height="520" viewBox="0 0 800 520">
 <path d="M569 455.1 H539.5 M553.3 441 L539.3 455.1 L553.3 469.2" fill="none" stroke="#2f3135" stroke-width="2.9"/>
 <path d="M625.3 455.1 H655 M641.1 441 L655.1 455.1 L641.1 469.2" fill="none" stroke="#6b6c70" stroke-width="2.9"/>
 <path d="M742.68 460.34 A14.0 14.0 0 1 1 740.10 445.73" fill="none" stroke="#2f3135" stroke-width="2.9"/>
 <path d="M733.6 450.6 H744.8 V439.4" fill="none" stroke="#2f3135" stroke-width="2.9"/>
</svg>
 <!-- omnibox -->
 <div class="a" style="left:795px;top:415px;width:2197px;height:81px;border-radius:41px;background:#878a8f"></div>
 <div class="a" style="left:804px;top:425px;width:61px;height:61px;border-radius:50%;background:radial-gradient(circle at 50% 50%,#9b9ca0 0%,#999a9d 70%,#8f9195 100%)"></div>
 <svg class="ic" style="left:815px;top:436px" width="40" height="40" viewBox="0 0 40 40"><circle cx="11" cy="11.4" r="5" fill="none" stroke="#1f2125" stroke-width="2.7"/><path d="M21 11.4 H35 M6 26.8 H20" stroke="#1f2125" stroke-width="2.7"/><circle cx="30" cy="26.8" r="5" fill="none" stroke="#1f2125" stroke-width="2.7"/></svg>
 <div class="a" style="left:885px;top:433px;font-size:35px;line-height:44px;color:#1f2125;letter-spacing:0.47px">youtube.com/watch/</div>
 <svg class="ic" style="left:0;top:0" width="3840" height="520" viewBox="0 0 3840 520"><path d="M2939.7 440.9 L2944.8 452.2 L2957.1 453.5 L2948.0 461.9 L2950.5 474.0 L2939.7 467.9 L2928.9 474.0 L2931.4 461.9 L2922.3 453.5 L2934.6 452.2Z" fill="none" stroke="#2f3135" stroke-width="2.8" stroke-linejoin="miter"/><path d="M3040.9 449 V443 A2.5 2.5 0 0 1 3043.4 440.5 H3069.5 A2.5 2.5 0 0 1 3072 443 V469.6 A2.5 2.5 0 0 1 3069.5 472.1 H3043.4 A2.5 2.5 0 0 1 3040.9 469.6 V462.3 A6.6 6.6 0 0 0 3040.9 449.1 Z" fill="none" stroke="#2f3135" stroke-width="3"/><path d="M3052.1 439.6 A4.9 4.9 0 0 1 3061.9 439.6 Z M3073.5 451.3 A4.8 4.8 0 0 1 3073.5 460.9 Z" fill="#2f3135"/></svg>
 
 <svg class="ic" style="left:3255px;top:431px" width="50" height="50" viewBox="3255 431 50 50">
  <defs><clipPath id="avc"><circle cx="3280.2" cy="456" r="24"/></clipPath><filter id="avb"><feGaussianBlur stdDeviation="0.8"/></filter></defs>
  <g clip-path="url(#avc)">
   <rect x="3255" y="431" width="50" height="50" fill="#8e8f92"/>
   <g filter="url(#avb)">
   <ellipse cx="3264" cy="462" rx="7" ry="10" fill="#7a7b7f"/>
   <ellipse cx="3298" cy="458" rx="7" ry="12" fill="#7d7e81"/>
   <path d="M3256 482 Q3258 466 3270 464 L3290 464 Q3303 466 3305 482Z" fill="#a2a3a5"/>
   <rect x="3276.5" y="462" width="6.5" height="18" fill="#4e3a36"/>
   <ellipse cx="3280" cy="452" rx="9.5" ry="13" fill="#54403b"/>
   <path d="M3269 452 Q3268 433 3280 432.5 Q3292 433 3291.5 452 Q3289 441 3280 441 Q3271 441 3269 452Z" fill="#353134"/>
   <path d="M3276 459 Q3280 462 3284 459" stroke="#b0a8a0" stroke-width="1.5" fill="none"/>
   </g>
  </g>
 </svg>
 <div class="a" style="left:496px;top:512px;width:2848px;height:2px;background:#838486"></div>

 <div id="page" class="a" style="top:514px"></div>
 <!-- hamburger -->
 <svg class="ic" style="left:545px;top:545px" width="31" height="24" viewBox="0 0 31 24"><path d="M0 2 H31 M0 12 H31 M0 22 H31" stroke="#1b1c1f" stroke-width="2.2"/></svg>
 <svg class="ic" style="left:622px;top:541px" width="49" height="34" viewBox="0 0 49 34"><rect x="0" y="0" width="48.5" height="34" rx="9" fill="#9a1515"/><path d="M19 9.5 L32.5 17 L19 24.5Z" fill="#929395"/></svg>
 <div class="a" style="left:675px;top:536px;font-size:40px;line-height:44px;font-weight:bold;color:#202124;transform:scaleX(0.63);transform-origin:0 0;letter-spacing:-1px">YouTube</div>
 <!-- search -->
 <div class="a" style="left:1432px;top:524px;width:1022px;height:68px;border-radius:34px;border:2px solid #7f8082;background:#929395"></div>
 <div class="a" style="left:2348px;top:526px;width:104px;height:64px;border-radius:0 32px 32px 0;background:#8f9091"></div><div class="a" style="left:2346px;top:525px;width:2px;height:66px;background:#7f8082"></div>
 <div class="a" style="left:1457px;top:539px;font-size:28px;line-height:38px;color:#5f6063">Szukaj</div>
 <svg class="ic" style="left:2380px;top:538px" width="40" height="40" viewBox="0 0 40 40"><circle cx="18.7" cy="18" r="13" fill="none" stroke="#1b1c1f" stroke-width="2.2"/><path d="M27.5 27.5 L35 34.5" stroke="#1b1c1f" stroke-width="2.2"/></svg>
 <div class="a" style="left:2482px;top:522px;width:69px;height:69px;border-radius:50%;background:#8e8f91"></div>
 <svg class="ic" style="left:2500px;top:540px" width="34" height="40" viewBox="0 0 34 40"><rect x="12" y="2" width="9" height="22" rx="4.5" fill="#2a2b2e"/><path d="M5 18 Q6 30 16.5 30 Q27 30 28 18 M16.5 30 V37" fill="none" stroke="#2a2b2e" stroke-width="2"/></svg>

 <!-- video -->
 <div id="video" class="a" style="left:615px;top:640px;width:1995px;height:1130px;border-radius:18px;overflow:hidden;background:#19151f">
  <svg class="a" style="left:0;top:0" width="1995" height="1130" viewBox="0 0 1995 1130"><use href="#photo"/></svg>
  <div class="a" style="left:0;top:0;width:1995px;height:1130px;background:rgba(32,33,36,0.5)"></div>
 </div>
 <!-- cast chip -->
 <div class="a" style="left:651px;top:1602px;width:818px;height:120px;border-radius:60px;background:#222328"></div>
 <svg class="ic" style="left:718px;top:1640px" width="54" height="46" viewBox="0 0 54 46"><path d="M4.3 13 V6 Q4.3 3.9 6.4 3.9 H47.4 Q49.6 3.9 49.6 6 V38.6 Q49.6 40.8 47.4 40.8 H32" fill="none" stroke="#f2f2f2" stroke-width="4.6"/><path d="M2 21.2 A21.8 21.8 0 0 1 23.8 43 M2 30.4 A12.6 12.6 0 0 1 14.6 43" fill="none" stroke="#f2f2f2" stroke-width="4.6"/><path d="M2 36.4 A6.6 6.6 0 0 1 8.6 43 H2Z" fill="#f2f2f2"/></svg>
 <div class="a" style="left:804px;top:1638px;font-size:36.5px;line-height:48px;color:#f1f1f1;letter-spacing:0.15px">Odtwarzam na telewizorze w salonie</div>
 <div class="a" style="left:618px;top:1790px;font-size:41px;line-height:52px;color:#26272a;letter-spacing:-0.1px">Koncert na żywo – Palm Springs</div>

 <!-- sidebar -->
 <div id="side">
<div class="a" style="left:2648px;top:881px;width:287px;height:165px;border-radius:12px;background:#86878a"></div>
<div class="a" style="left:2648px;top:1063px;width:287px;height:165px;border-radius:12px;background:#86878a"></div>
<div class="a" style="left:2648px;top:1243px;width:287px;height:165px;border-radius:12px;background:#86878a"></div>
<div class="a" style="left:2648px;top:1422px;width:287px;height:170px;border-radius:12px;background:#86878a"></div>
<div class="a" style="left:2648px;top:1601px;width:287px;height:165px;border-radius:12px;background:#86878a"></div>
<div class="a" style="left:2648px;top:1777px;width:287px;height:173px;border-radius:12px;background:#86878a"></div>
<div class="a" style="left:2943px;top:1067px;width:287px;height:31px;border-radius:15.5px;background:#8a8b8d"></div>
<div class="a" style="left:2943px;top:1104px;width:343px;height:33px;border-radius:16.5px;background:#8a8b8d"></div>
<div class="a" style="left:2943px;top:1142px;width:152px;height:26px;border-radius:13.0px;background:#8a8b8d"></div>
<div class="a" style="left:2943px;top:1173px;width:228px;height:25px;border-radius:12.5px;background:#8a8b8d"></div>
<div class="a" style="left:2943px;top:1242px;width:287px;height:33px;border-radius:16.5px;background:#8a8b8d"></div>
<div class="a" style="left:2943px;top:1280px;width:343px;height:33px;border-radius:16.5px;background:#8a8b8d"></div>
<div class="a" style="left:2943px;top:1321px;width:152px;height:25px;border-radius:12.5px;background:#8a8b8d"></div>
<div class="a" style="left:2943px;top:1354px;width:250px;height:26px;border-radius:13.0px;background:#8a8b8d"></div>
<div class="a" style="left:2943px;top:1432px;width:287px;height:32px;border-radius:16.0px;background:#8a8b8d"></div>
<div class="a" style="left:2943px;top:1469px;width:208px;height:27px;border-radius:13.5px;background:#8a8b8d"></div>
<div class="a" style="left:2943px;top:1606px;width:356px;height:32px;border-radius:16.0px;background:#8a8b8d"></div>
<div class="a" style="left:2943px;top:1644px;width:307px;height:32px;border-radius:16.0px;background:#8a8b8d"></div>
<div class="a" style="left:2943px;top:1683px;width:152px;height:25px;border-radius:12.5px;background:#8a8b8d"></div>
<div class="a" style="left:2943px;top:1713px;width:335px;height:27px;border-radius:13.5px;background:#8a8b8d"></div>
<div class="a" style="left:2943px;top:1777px;width:335px;height:32px;border-radius:16.0px;background:#8a8b8d"></div>
<div class="a" style="left:2943px;top:1814px;width:307px;height:32px;border-radius:16.0px;background:#8a8b8d"></div>
<div class="a" style="left:2943px;top:1854px;width:152px;height:26px;border-radius:13.0px;background:#8a8b8d"></div>
 </div>
</div>

<!-- media button -->
<div class="a" style="left:3116px;top:399px;width:114px;height:114px;border-radius:50%;background:#e6e7ea;box-shadow:0 2px 10px rgba(0,0,0,0.25)"></div>
<svg class="ic" style="left:3140px;top:436px" width="66" height="46" viewBox="0 0 66 46">
 <rect x="6.5" y="5.7" width="33.5" height="5.2" fill="#000"/>
 <rect x="6.5" y="17.2" width="33.5" height="4.8" fill="#000"/>
 <rect x="6.5" y="28.4" width="22.2" height="4.9" fill="#000"/>
 <rect x="46.2" y="5.7" width="5.1" height="31" fill="#000"/>
 <rect x="46.2" y="5.7" width="13.6" height="5.2" fill="#000"/>
 <circle cx="43" cy="36.5" r="8.2" fill="#000"/>
</svg>
<!-- popup -->
<div class="a" style="left:2508px;top:557px;width:801px;height:471px;border-radius:16px;overflow:hidden;background:#fff;box-shadow:0 6px 24px rgba(0,0,0,0.3)">
 <div class="a" style="left:0;top:0;width:801px;height:264px;background:#070a14"></div>
 <div class="a" style="left:41px;top:38px;width:57px;height:17px;border-radius:8.5px;background:#cdd1f5"></div>
 <div class="a" style="left:41px;top:87px;width:256px;height:17px;border-radius:8.5px;background:#cdd1f5"></div>
 <div class="a" style="left:41px;top:115px;width:133px;height:17px;border-radius:8.5px;background:#cdd1f5"></div>
 <svg class="ic" style="left:0;top:0" width="801" height="264" viewBox="0 0 801 264">
  <g fill="#cdd1f5" stroke="#cdd1f5" stroke-width="3" stroke-linejoin="round">
   <path d="M64.5 193.5 V213.6 L50.4 203.5Z"/><path d="M85.3 193.5 V213.6 L70.7 203.5Z"/>
   <path d="M138.8 191.3 V216.4 L160.5 203.9Z"/>
   <path d="M208.8 193.5 V213.6 L223.5 203.5Z"/><path d="M229.2 193.5 V213.6 L243.7 203.5Z"/>
  </g>
  <rect x="275.5" y="178.6" width="4.7" height="50.4" rx="2.35" fill="#cdd1f5"/>
  <g fill="none" stroke="#cdd1f5" stroke-width="3">
   <path d="M327.7 184.7 H351.2 V202.6"/>
   <path d="M310 202.6 V216.4 H329.6"/>
   <path d="M309.8 184.2 L322.5 196.9 M309.5 196.3 H323.4 V183.2"/>
  </g>
  <rect x="333.6" y="206.3" width="19.4" height="11.9" fill="#cdd1f5"/>
 </svg>
 <div id="thumb" class="a" style="left:435px;top:0;width:366px;height:264px;overflow:hidden;background:#0c0b22"><svg class="a" style="left:0;top:0" width="366" height="264" viewBox="0 0 366 264"><g transform="translate(-99.4,-20.5) scale(0.2846)"><use href="#photo"/></g></svg></div>
 <!-- rows -->
 <svg class="ic" style="left:46px;top:298px" width="46" height="38" viewBox="0 0 46 38">
  <rect x="1.7" y="1.7" width="41" height="32" rx="3" fill="none" stroke="#000" stroke-width="3.4"/>
  <rect x="10" y="14.3" width="3.4" height="3.5" fill="#000"/><rect x="16.6" y="14.3" width="20" height="3.5" fill="#000"/>
  <rect x="10" y="21" width="20" height="3.5" fill="#000"/><rect x="33.3" y="21" width="3.3" height="3.5" fill="#000"/>
 </svg>
 <div class="a" style="left:123px;top:294px;font-size:35px;line-height:46px;color:#1f1f1f;letter-spacing:-0.46px">Napisy na żywo</div>
 <svg class="ic" style="left:707px;top:302px" width="52" height="30" viewBox="0 0 52 30">
  <rect x="2.1" y="2.1" width="44.5" height="22.7" rx="11.35" fill="none" stroke="#000" stroke-width="4.2"/>
  <circle cx="15" cy="13.4" r="6.8" fill="#000"/>
 </svg>
 <div class="a" style="left:0;top:369px;width:801px;height:2px;background:#8290c6"></div>
 <svg class="ic" style="left:46px;top:397px" width="46" height="46" viewBox="-23 -23 46 46">
  <path d="M-5.00 -14.78 L-5.00 -20.19 L5.00 -20.19 L5.00 -14.78 L10.30 -11.72 L14.99 -14.43 L19.99 -5.76 L15.30 -3.06 L15.30 3.06 L19.99 5.76 L14.99 14.43 L10.30 11.72 L5.00 14.78 L5.00 20.19 L-5.00 20.19 L-5.00 14.78 L-10.30 11.72 L-14.99 14.43 L-19.99 5.76 L-15.30 3.06 L-15.30 -3.06 L-19.99 -5.76 L-14.99 -14.43 L-10.30 -11.72 Z" fill="none" stroke="#000" stroke-width="3.4"/>
  <circle cx="0" cy="0" r="7" fill="#000"/>
 </svg>
 <div class="a" style="left:123px;top:397px;font-size:35px;line-height:46px;color:#1f1f1f;letter-spacing:-0.4px">Ustawienia napisów</div>
 <svg class="ic" style="left:724px;top:399px" width="44" height="44" viewBox="0 0 44 44">
  <path d="M20.5 3 H4 Q2.6 3 2.6 4.5 V39.5 Q2.6 41 4 41 H39 Q40.6 41 40.6 39.5 V21" fill="none" stroke="#000" stroke-width="3.3"/>
  <path d="M23.5 3 H40.6 V18.5 M40 3.6 L14.5 29" fill="none" stroke="#000" stroke-width="3.3"/>
 </svg>
</div>
</body></html>
